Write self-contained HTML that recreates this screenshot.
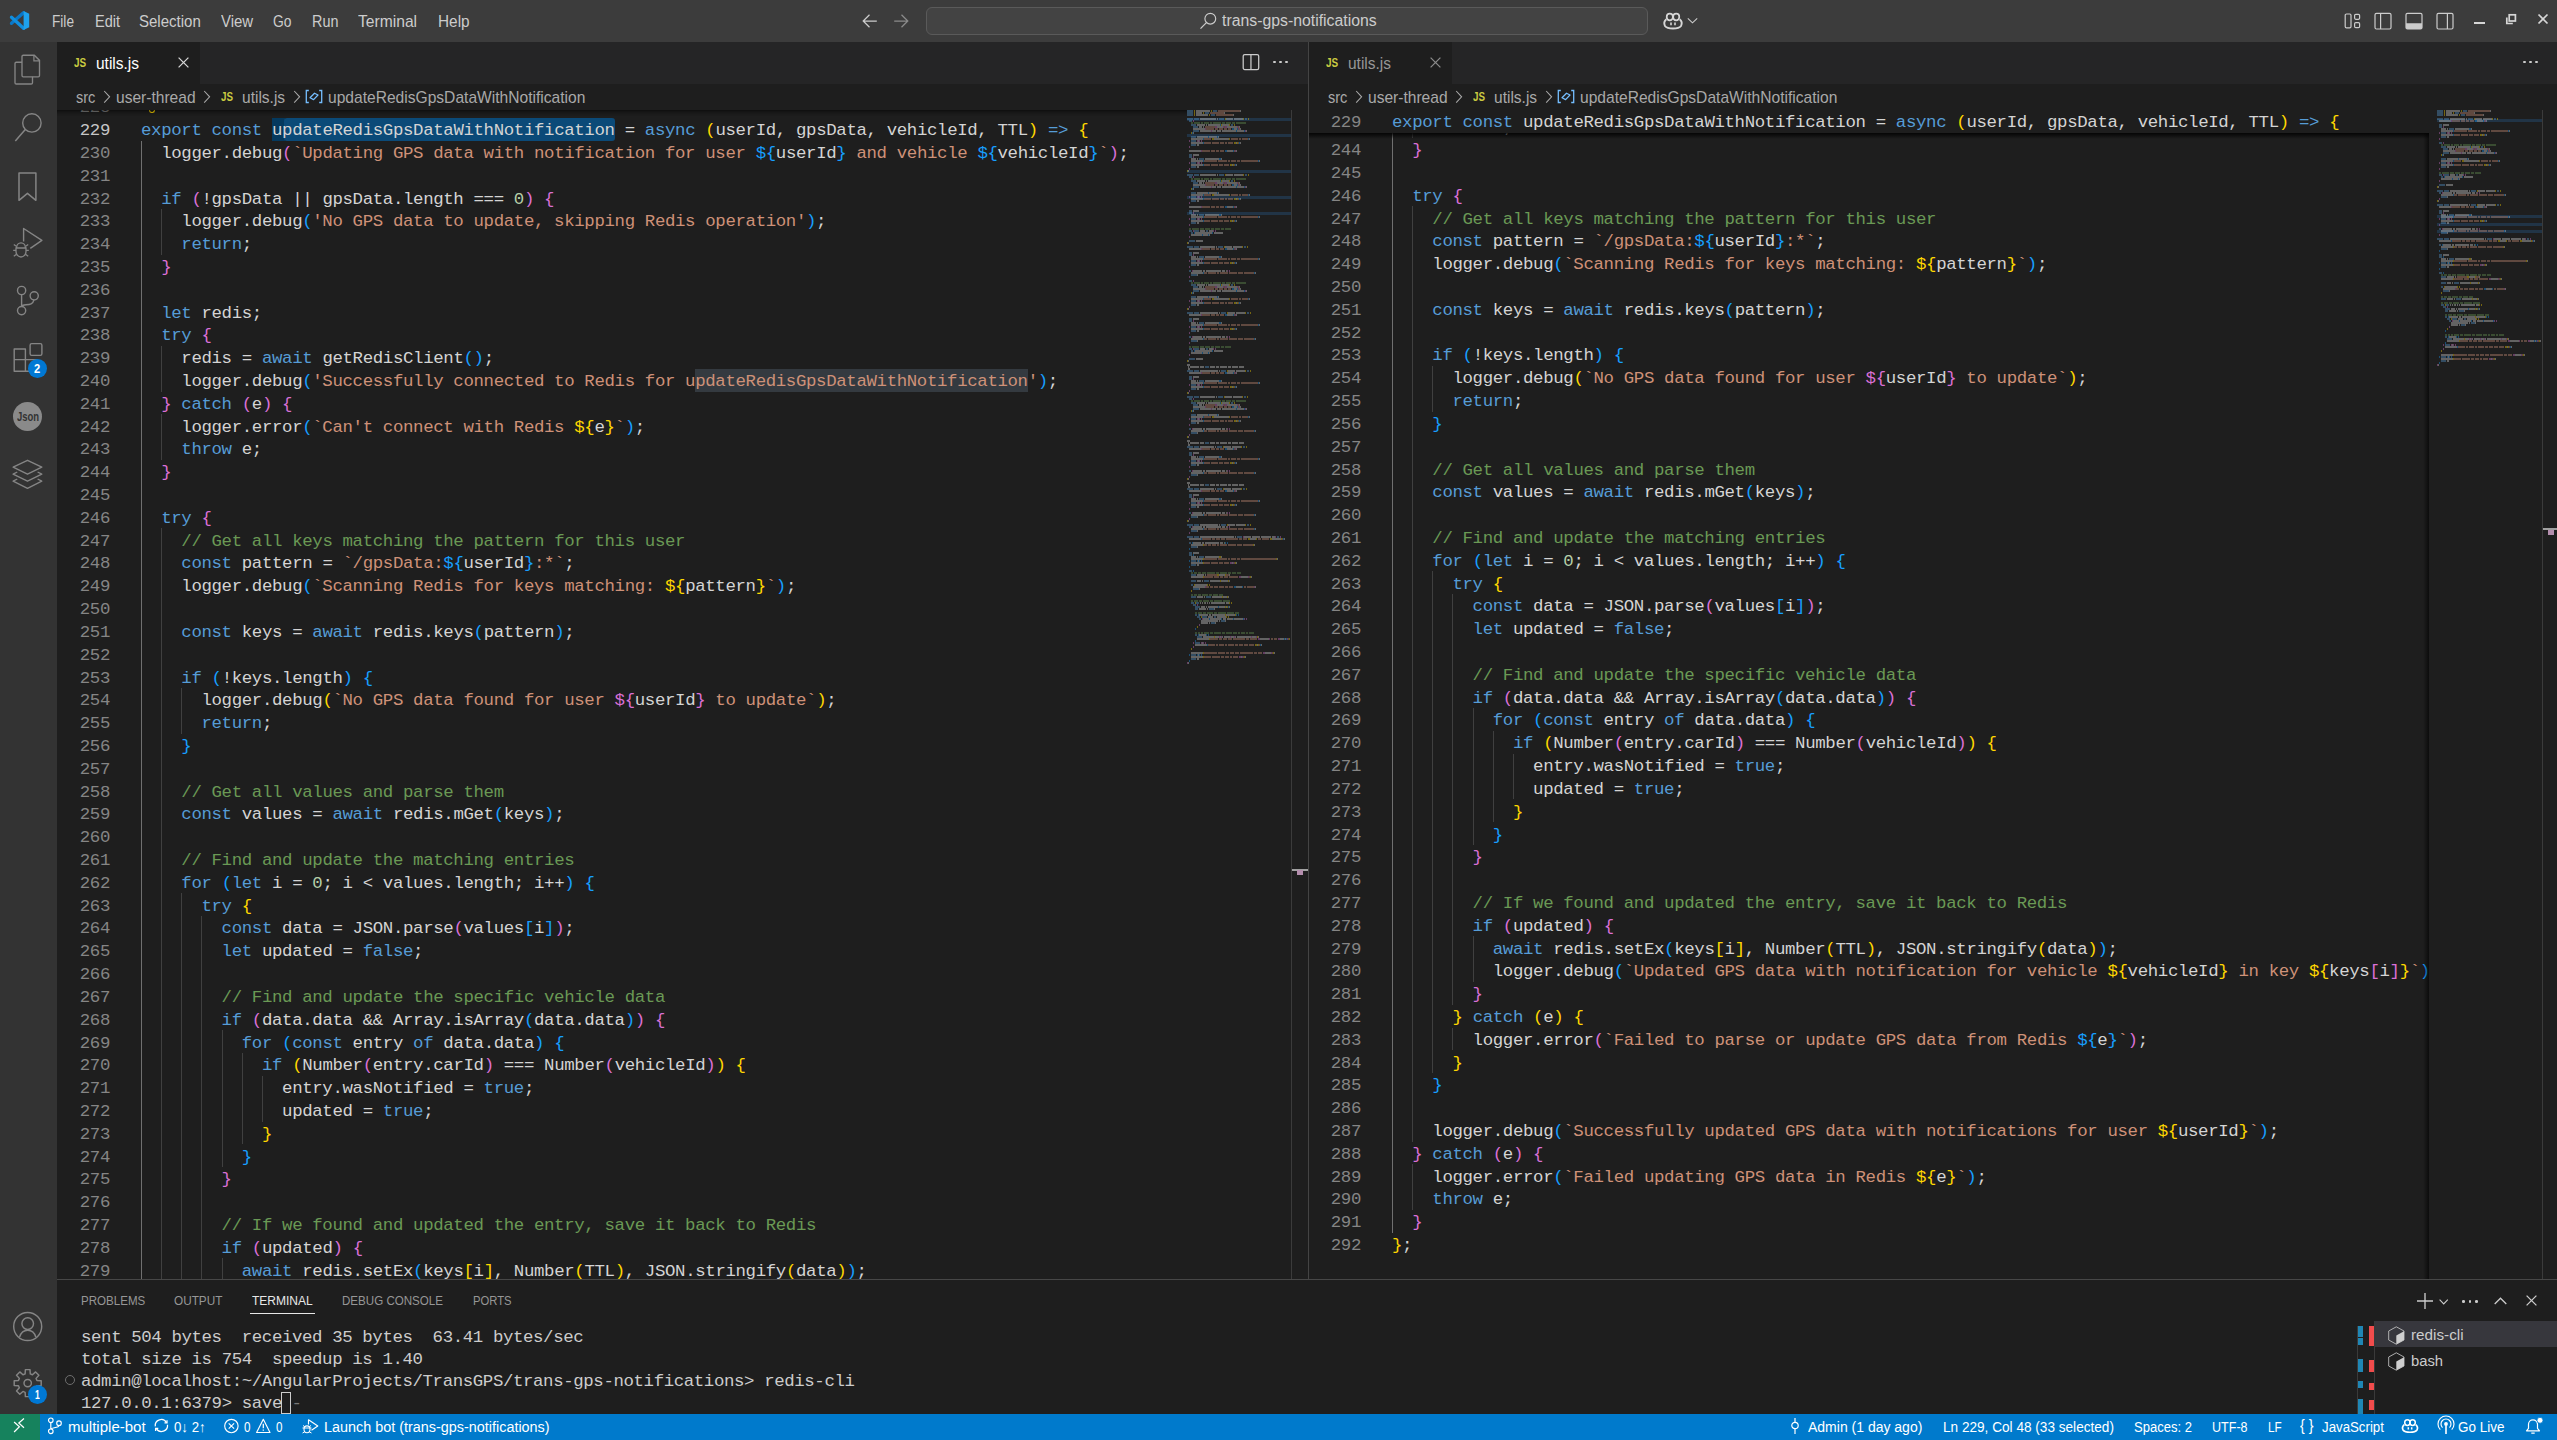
<!DOCTYPE html><html><head><meta charset="utf-8"><style>
*{margin:0;padding:0;box-sizing:border-box}
html,body{width:2557px;height:1440px;overflow:hidden;background:#1e1e1e}
body{position:relative;font-family:"Liberation Sans", sans-serif;}
.a{position:absolute}
.ln{position:absolute;height:22.81px;line-height:22.81px;white-space:pre;font-family:"Liberation Mono", monospace;font-size:17.4px;letter-spacing:-0.360px}
.num{position:absolute;height:22.81px;line-height:22.81px;font-family:"Liberation Mono", monospace;font-size:17.4px;letter-spacing:-0.360px;text-align:right;color:#858585;width:60px}
.ui{font-family:"Liberation Sans", sans-serif;white-space:pre;position:absolute}
.g{position:absolute;width:1px;background:#404040}
.tm{position:absolute;height:22px;line-height:22px;white-space:pre;font-family:"Liberation Mono", monospace;font-size:17.4px;letter-spacing:-0.390px;color:#cccccc}
svg{position:absolute;overflow:visible}
</style></head><body>
<div class="a" style="left:0;top:0;width:2557px;height:42px;background:#3c3c3c"></div>
<svg style="left:0px;top:0px" width="42" height="42" viewBox="0 0 42 42"><path d="M23.5 12.8 L11.5 23.3" stroke="#0a78c8" stroke-width="3.3" stroke-linecap="round"/><path d="M23.5 28.3 L11.5 17.2" stroke="#108fe0" stroke-width="3.3" stroke-linecap="round"/><path d="M23.6 11 L29.2 13.7 V27.3 L23.6 30 Z" fill="#1ea2ee"/></svg>
<div class="ui" style="left:51.60px;top:9.35px;font-size:17.15px;line-height:24px;color:#cccccc;transform:scaleX(0.7962);transform-origin:0 0">File</div>
<div class="ui" style="left:94.75px;top:9.35px;font-size:17.15px;line-height:24px;color:#cccccc;transform:scaleX(0.8477);transform-origin:0 0">Edit</div>
<div class="ui" style="left:139.30px;top:9.35px;font-size:17.15px;line-height:24px;color:#cccccc;transform:scaleX(0.8759);transform-origin:0 0">Selection</div>
<div class="ui" style="left:221.10px;top:9.35px;font-size:17.15px;line-height:24px;color:#cccccc;transform:scaleX(0.8724);transform-origin:0 0">View</div>
<div class="ui" style="left:272.80px;top:9.35px;font-size:17.15px;line-height:24px;color:#cccccc;transform:scaleX(0.8086);transform-origin:0 0">Go</div>
<div class="ui" style="left:311.90px;top:9.35px;font-size:17.15px;line-height:24px;color:#cccccc;transform:scaleX(0.8393);transform-origin:0 0">Run</div>
<div class="ui" style="left:358.40px;top:9.35px;font-size:17.15px;line-height:24px;color:#cccccc;transform:scaleX(0.9118);transform-origin:0 0">Terminal</div>
<div class="ui" style="left:437.60px;top:9.35px;font-size:17.15px;line-height:24px;color:#cccccc;transform:scaleX(0.8957);transform-origin:0 0">Help</div>
<svg style="left:861px;top:13px" width="18" height="16" viewBox="0 0 18 16"><path d="M8.5 1.8 L2.2 8 L8.5 14.2 M2.2 8 H15.8" stroke="#cccccc" stroke-width="1.25" fill="none"/></svg>
<svg style="left:892px;top:13px" width="18" height="16" viewBox="0 0 18 16"><path d="M9.5 1.8 L15.8 8 L9.5 14.2 M15.8 8 H2.2" stroke="#8b8b8b" stroke-width="1.25" fill="none"/></svg>
<div class="a" style="left:926px;top:7px;width:722px;height:28px;border-radius:6px;background:#434343;border:1px solid #5a5a5a"></div>
<svg style="left:1199px;top:11px" width="18" height="20" viewBox="0 0 18 20"><circle cx="11.3" cy="7.7" r="5.4" stroke="#cccccc" stroke-width="1.15" fill="none"/><path d="M7.4 11.6 L1.5 17.6" stroke="#cccccc" stroke-width="1.25"/></svg>
<div class="ui" style="left:1222.20px;top:10.20px;font-size:15.84px;line-height:22px;color:#cccccc;transform:scaleX(0.9989);transform-origin:0 0">trans-gps-notifications</div>
<svg style="left:1662px;top:11px" width="22" height="20" viewBox="0 0 22 20"><path d="M4.3 8.3 C2.3 10 2 13 3 15 C5.5 18.3 16.5 18.3 19 15 C20 13 19.7 10 17.7 8.3" stroke="#d6d6d6" stroke-width="1.9" fill="none"/><ellipse cx="7.8" cy="6" rx="3.1" ry="3.3" stroke="#d6d6d6" stroke-width="1.7" fill="none"/><ellipse cx="14.2" cy="6" rx="3.1" ry="3.3" stroke="#d6d6d6" stroke-width="1.7" fill="none"/><path d="M9 11.5 V14.3 M13 11.5 V14.3" stroke="#d6d6d6" stroke-width="1.6"/></svg>
<svg style="left:1687px;top:17px" width="12" height="8" viewBox="0 0 12 8"><path d="M0.8 1.3 L5.5 5.8 L10.2 1.3" stroke="#cccccc" stroke-width="1.1" fill="none"/></svg>
<svg style="left:2344px;top:13px" width="18" height="16" viewBox="0 0 18 16"><rect x="1.2" y="1" width="5.8" height="13.8" rx="1.3" stroke="#cccccc" stroke-width="1.2" fill="none"/><rect x="10.6" y="1.3" width="5" height="5" rx="1.2" stroke="#cccccc" stroke-width="1.2" fill="none"/><rect x="10.6" y="9.6" width="5" height="5" rx="1.2" stroke="#cccccc" stroke-width="1.2" fill="none"/></svg>
<svg style="left:2374px;top:12px" width="18" height="18" viewBox="0 0 18 18"><rect x="1" y="1.3" width="16" height="15.7" rx="1.5" stroke="#cccccc" stroke-width="1.2" fill="none"/><path d="M6.6 1.3 V17" stroke="#cccccc" stroke-width="1.2"/></svg>
<svg style="left:2405px;top:12px" width="18" height="18" viewBox="0 0 18 18"><rect x="1" y="1.3" width="16" height="15.7" rx="1.5" stroke="#cccccc" stroke-width="1.2" fill="none"/><path d="M1 11.2 H17 V15.5 A1.5 1.5 0 0 1 15.5 17 H2.5 A1.5 1.5 0 0 1 1 15.5 Z" fill="#cccccc"/></svg>
<svg style="left:2436px;top:12px" width="18" height="18" viewBox="0 0 18 18"><rect x="1" y="1.3" width="16" height="15.7" rx="1.5" stroke="#cccccc" stroke-width="1.2" fill="none"/><path d="M11.4 1.3 V17" stroke="#cccccc" stroke-width="1.2"/></svg>
<div class="a" style="left:2474px;top:22px;width:10.5px;height:1.8px;background:#d6d6d6"></div>
<svg style="left:2505px;top:13px" width="12" height="12" viewBox="0 0 12 12"><rect x="4.2" y="1.8" width="6.2" height="6.2" stroke="#d6d6d6" stroke-width="1.7" fill="none"/><path d="M1.8 4.5 V10.5 H7.8" stroke="#d6d6d6" stroke-width="1.7" fill="none"/></svg>
<svg style="left:2537px;top:13px" width="12" height="12" viewBox="0 0 12 12"><path d="M1.5 1.5 L10.5 10.5 M10.5 1.5 L1.5 10.5" stroke="#d6d6d6" stroke-width="1.7"/></svg>
<div class="a" style="left:0;top:42px;width:57px;height:1372px;background:#333333"></div>
<svg style="left:0px;top:42px" width="57" height="57" viewBox="0 0 57 57"><path d="M23.3 13.2 H34.3 L39.5 18.4 V33.5 A1.3 1.3 0 0 1 38.2 34.8 H23.3 A1.3 1.3 0 0 1 22 33.5 V14.5 A1.3 1.3 0 0 1 23.3 13.2 Z" stroke="#858585" stroke-width="1.35" fill="none"/><path d="M33.9 13.4 V18.8 H39.4" stroke="#858585" stroke-width="1.2" fill="none"/><path d="M22 20.2 H16.3 A1.3 1.3 0 0 0 15 21.5 V40.7 A1.3 1.3 0 0 0 16.3 42 H31.2 A1.3 1.3 0 0 0 32.5 40.7 V34.8" stroke="#858585" stroke-width="1.35" fill="none"/></svg>
<svg style="left:0px;top:100px" width="57" height="57" viewBox="0 0 57 57"><circle cx="31.9" cy="22.9" r="9.2" stroke="#858585" stroke-width="1.4" fill="none"/><path d="M25.3 29.6 L15.3 41" stroke="#858585" stroke-width="1.5"/></svg>
<svg style="left:0px;top:160px" width="57" height="57" viewBox="0 0 57 57"><path d="M19 13 H35.9 V40.3 L27.45 33.3 L19 40.3 Z" stroke="#858585" stroke-width="1.5" fill="none" stroke-linejoin="round"/></svg>
<svg style="left:0px;top:212px" width="57" height="57" viewBox="0 0 57 57"><path d="M23.6 29.5 V16.5 L41.9 28.3 L30.3 36.3" stroke="#858585" stroke-width="1.4" fill="none" stroke-linejoin="round"/><path d="M16.6 35.5 A4.4 4.6 0 0 1 25.4 35.5 M16 36 H26 V39.5 A5 5.5 0 0 1 16 39.5 Z" stroke="#858585" stroke-width="1.35" fill="none"/><path d="M13.8 32.5 L16.3 34.3 M28.2 32.5 L25.7 34.3 M13.2 38.3 H16 M28.8 38.3 H26 M13.8 44.2 L16.5 42.3 M28.2 44.2 L25.5 42.3" stroke="#858585" stroke-width="1.3" fill="none"/></svg>
<svg style="left:0px;top:270px" width="57" height="57" viewBox="0 0 57 57"><circle cx="21.6" cy="20.5" r="4.1" stroke="#858585" stroke-width="1.4" fill="none"/><circle cx="21.6" cy="40.6" r="4.1" stroke="#858585" stroke-width="1.4" fill="none"/><circle cx="34.2" cy="25.8" r="4.1" stroke="#858585" stroke-width="1.4" fill="none"/><path d="M21.6 24.6 V36.5 M34 29.9 C33 34 30 34.5 26 34.8 C23.5 35 21.8 35.5 21.6 36.5" stroke="#858585" stroke-width="1.4" fill="none"/></svg>
<svg style="left:0px;top:330px" width="57" height="57" viewBox="0 0 57 57"><path d="M14.2 19 H25.4 V41.2 H14.2 Z M14.2 29.6 H36.6 V41.2 H25.4" stroke="#858585" stroke-width="1.4" fill="none" stroke-linejoin="round"/><rect x="30.1" y="13.6" width="11.8" height="11.8" rx="1.6" stroke="#858585" stroke-width="1.4" fill="none"/></svg>
<div class="a" style="left:28.1px;top:359px;width:18.8px;height:18.8px;border-radius:9.4px;background:#0078d4"></div>
<div class="ui" style="left:34.40px;top:359.86px;font-size:12.50px;line-height:18px;color:#ffffff;font-weight:bold;transform:scaleX(0.8921);transform-origin:0 0">2</div>
<div class="a" style="left:12.75px;top:401.65px;width:29.5px;height:29.5px;border-radius:14.75px;background:#8a8a8a"></div>
<div class="ui" style="left:16.60px;top:407.06px;font-size:13.37px;line-height:19px;color:#333333;font-weight:bold;transform:scaleX(0.7113);transform-origin:0 0">Json</div>
<svg style="left:0px;top:440px" width="57" height="57" viewBox="0 0 57 57"><path d="M27.5 20.3 L41.8 27.2 L27.5 34.2 L13.1 27.2 Z" stroke="#858585" stroke-width="1.35" fill="none" stroke-linejoin="round"/><path d="M17.3 32 L13.1 34.2 L27.5 41.2 L41.8 34.2 L37.6 32 M17.3 39 L13.1 41.2 L27.5 48.4 L41.8 41.2 L37.6 39" stroke="#858585" stroke-width="1.35" fill="none" stroke-linejoin="round"/></svg>
<svg style="left:0px;top:1300px" width="57" height="57" viewBox="0 0 57 57"><circle cx="27.7" cy="26.5" r="14" stroke="#858585" stroke-width="1.45" fill="none"/><circle cx="27.7" cy="23.6" r="5.8" stroke="#858585" stroke-width="1.45" fill="none"/><path d="M19.6 37 C21 32.5 24 30.3 27.7 30.3 C31.4 30.3 34.4 32.5 35.8 37" stroke="#858585" stroke-width="1.45" fill="none"/></svg>
<svg style="left:0px;top:1357px" width="57" height="57" viewBox="0 0 57 57"><polygon points="25.38,12.60 30.02,12.60 30.26,16.85 32.43,17.75 35.61,14.91 38.89,18.19 36.05,21.37 36.95,23.54 41.20,23.78 41.20,28.42 36.95,28.66 36.05,30.83 38.89,34.01 35.61,37.29 32.43,34.45 30.26,35.35 30.02,39.60 25.38,39.60 25.14,35.35 22.97,34.45 19.79,37.29 16.51,34.01 19.35,30.83 18.45,28.66 14.20,28.42 14.20,23.78 18.45,23.54 19.35,21.37 16.51,18.19 19.79,14.91 22.97,17.75 25.14,16.85" stroke="#858585" stroke-width="1.45" fill="none" stroke-linejoin="round"/><circle cx="27.7" cy="26.1" r="3.7" stroke="#858585" stroke-width="1.45" fill="none"/></svg>
<div class="a" style="left:28.1px;top:1385.1px;width:19px;height:19px;border-radius:9.5px;background:#0078d4"></div>
<div class="ui" style="left:34.90px;top:1385.86px;font-size:12.50px;line-height:18px;color:#ffffff;font-weight:bold;transform:scaleX(0.6906);transform-origin:0 0">1</div>
<div class="a" style="left:57px;top:42px;width:1251px;height:42px;background:#252526"></div>
<div class="a" style="left:57px;top:42px;width:143px;height:42px;background:#1e1e1e"></div>
<div class="ui" style="left:73.90px;top:52.91px;font-size:13.37px;line-height:19px;color:#cbcb41;font-weight:bold;transform:scaleX(0.7460);transform-origin:0 0">JS</div>
<div class="ui" style="left:95.70px;top:51.70px;font-size:16.13px;line-height:23px;color:#ffffff;transform:scaleX(0.9616);transform-origin:0 0">utils.js</div>
<svg style="left:177.5px;top:57px" width="11" height="11" viewBox="0 0 11 11"><path d="M0.6 0.6 L10.4 10.4 M10.4 0.6 L0.6 10.4" stroke="#d8d8d8" stroke-width="1.25"/></svg>
<div class="a" style="left:57px;top:84px;width:1251px;height:26px;background:#1e1e1e"></div>
<div class="ui" style="left:75.75px;top:86.85px;font-size:15.99px;line-height:22px;color:#a9a9a9;transform:scaleX(0.9079);transform-origin:0 0">src</div>
<div class="ui" style="left:115.50px;top:86.85px;font-size:15.99px;line-height:22px;color:#a9a9a9;transform:scaleX(0.9735);transform-origin:0 0">user-thread</div>
<div class="ui" style="left:220.50px;top:87.86px;font-size:12.79px;line-height:18px;color:#cbcb41;font-weight:bold;transform:scaleX(0.7671);transform-origin:0 0">JS</div>
<div class="ui" style="left:242.00px;top:86.85px;font-size:15.99px;line-height:22px;color:#a9a9a9;transform:scaleX(0.9704);transform-origin:0 0">utils.js</div>
<div class="ui" style="left:327.60px;top:86.85px;font-size:15.99px;line-height:22px;color:#a9a9a9;transform:scaleX(0.9752);transform-origin:0 0">updateRedisGpsDataWithNotification</div>
<svg style="left:102.5px;top:90px" width="8" height="14" viewBox="0 0 8 14"><path d="M1.2 1 L6.6 6.8 L1.2 12.6" stroke="#a9a9a9" stroke-width="1.05" fill="none"/></svg>
<svg style="left:202.5px;top:90px" width="8" height="14" viewBox="0 0 8 14"><path d="M1.2 1 L6.6 6.8 L1.2 12.6" stroke="#a9a9a9" stroke-width="1.05" fill="none"/></svg>
<svg style="left:292.5px;top:90px" width="8" height="14" viewBox="0 0 8 14"><path d="M1.2 1 L6.6 6.8 L1.2 12.6" stroke="#a9a9a9" stroke-width="1.05" fill="none"/></svg>
<svg style="left:305px;top:89px" width="18" height="15" viewBox="0 0 18 15"><path d="M3.8 1.5 H1.3 V13.5 H3.8 M14.2 1.5 H16.7 V13.5 H14.2" stroke="#75beff" stroke-width="1.3" fill="none"/><path d="M5 8.8 L9.5 4.2 L13 6 L8.6 10.6 Z M5 8.8 L8.6 10.6" stroke="#75beff" stroke-width="1.25" fill="none" stroke-linejoin="round"/></svg>
<div class="a" style="left:1309px;top:42px;width:1248px;height:42px;background:#252526"></div>
<div class="a" style="left:1309px;top:42px;width:143px;height:42px;background:#1e1e1e"></div>
<div class="ui" style="left:1325.90px;top:52.91px;font-size:13.37px;line-height:19px;color:#cbcb41;font-weight:bold;transform:scaleX(0.7460);transform-origin:0 0">JS</div>
<div class="ui" style="left:1347.70px;top:51.70px;font-size:16.13px;line-height:23px;color:#969696;transform:scaleX(0.9616);transform-origin:0 0">utils.js</div>
<svg style="left:1429.5px;top:57px" width="11" height="11" viewBox="0 0 11 11"><path d="M0.6 0.6 L10.4 10.4 M10.4 0.6 L0.6 10.4" stroke="#8c8c8c" stroke-width="1.25"/></svg>
<div class="a" style="left:1309px;top:84px;width:1248px;height:26px;background:#1e1e1e"></div>
<div class="ui" style="left:1327.75px;top:86.85px;font-size:15.99px;line-height:22px;color:#a9a9a9;transform:scaleX(0.9079);transform-origin:0 0">src</div>
<div class="ui" style="left:1367.50px;top:86.85px;font-size:15.99px;line-height:22px;color:#a9a9a9;transform:scaleX(0.9735);transform-origin:0 0">user-thread</div>
<div class="ui" style="left:1472.50px;top:87.86px;font-size:12.79px;line-height:18px;color:#cbcb41;font-weight:bold;transform:scaleX(0.7671);transform-origin:0 0">JS</div>
<div class="ui" style="left:1494.00px;top:86.85px;font-size:15.99px;line-height:22px;color:#a9a9a9;transform:scaleX(0.9704);transform-origin:0 0">utils.js</div>
<div class="ui" style="left:1579.60px;top:86.85px;font-size:15.99px;line-height:22px;color:#a9a9a9;transform:scaleX(0.9752);transform-origin:0 0">updateRedisGpsDataWithNotification</div>
<svg style="left:1354.5px;top:90px" width="8" height="14" viewBox="0 0 8 14"><path d="M1.2 1 L6.6 6.8 L1.2 12.6" stroke="#a9a9a9" stroke-width="1.05" fill="none"/></svg>
<svg style="left:1454.5px;top:90px" width="8" height="14" viewBox="0 0 8 14"><path d="M1.2 1 L6.6 6.8 L1.2 12.6" stroke="#a9a9a9" stroke-width="1.05" fill="none"/></svg>
<svg style="left:1544.5px;top:90px" width="8" height="14" viewBox="0 0 8 14"><path d="M1.2 1 L6.6 6.8 L1.2 12.6" stroke="#a9a9a9" stroke-width="1.05" fill="none"/></svg>
<svg style="left:1557px;top:89px" width="18" height="15" viewBox="0 0 18 15"><path d="M3.8 1.5 H1.3 V13.5 H3.8 M14.2 1.5 H16.7 V13.5 H14.2" stroke="#75beff" stroke-width="1.3" fill="none"/><path d="M5 8.8 L9.5 4.2 L13 6 L8.6 10.6 Z M5 8.8 L8.6 10.6" stroke="#75beff" stroke-width="1.25" fill="none" stroke-linejoin="round"/></svg>
<svg style="left:1242px;top:53px" width="18" height="18" viewBox="0 0 18 18"><rect x="1.2" y="1.5" width="15.5" height="15" rx="1.6" stroke="#cccccc" stroke-width="1.25" fill="none"/><path d="M8.95 1.5 V16.5" stroke="#cccccc" stroke-width="1.25"/></svg>
<div class="a" style="left:1273.2px;top:60.8px;width:2.6px;height:2.6px;border-radius:1.3px;background:#cccccc"></div>
<div class="a" style="left:1279.2px;top:60.8px;width:2.6px;height:2.6px;border-radius:1.3px;background:#cccccc"></div>
<div class="a" style="left:1285.2px;top:60.8px;width:2.6px;height:2.6px;border-radius:1.3px;background:#cccccc"></div>
<div class="a" style="left:2523.2px;top:60.8px;width:2.6px;height:2.6px;border-radius:1.3px;background:#cccccc"></div>
<div class="a" style="left:2529.2px;top:60.8px;width:2.6px;height:2.6px;border-radius:1.3px;background:#cccccc"></div>
<div class="a" style="left:2535.2px;top:60.8px;width:2.6px;height:2.6px;border-radius:1.3px;background:#cccccc"></div>
<div class="a" style="left:1308px;top:42px;width:1px;height:1237px;background:#444444"></div>
<div class="a" style="left:57px;top:110px;width:1234px;height:1169px;overflow:hidden">
<div class="num" style="left:-7px;top:-12.71px;color:#858585">228</div>
<div class="a" style="left:215.04px;top:7.90px;width:13.08px;height:22.81px;background:#04395e"></div>
<div class="a" style="left:226.52px;top:7.90px;width:331.24px;height:22.81px;background:#0b4a78;border-radius:3px"></div>
<div class="num" style="left:-7px;top:10.10px;color:#c6c6c6">229</div>
<div class="ln" style="left:84px;top:10.10px"><span style="color:#569cd6">export</span><span style="color:#d4d4d4"> </span><span style="color:#569cd6">const</span><span style="color:#d4d4d4"> updateRedisGpsDataWithNotification = </span><span style="color:#569cd6">async</span><span style="color:#d4d4d4"> </span><span style="color:#ffd700">(</span><span style="color:#d4d4d4">userId, gpsData, vehicleId, TTL</span><span style="color:#ffd700">)</span><span style="color:#d4d4d4"> </span><span style="color:#569cd6">=&gt;</span><span style="color:#d4d4d4"> </span><span style="color:#ffd700">{</span></div>
<div class="num" style="left:-7px;top:32.91px;color:#858585">230</div>
<div class="ln" style="left:84px;top:32.91px"><span style="color:#d4d4d4">  logger.debug</span><span style="color:#da70d6">(</span><span style="color:#ce9178">`Updating GPS data with notification for user </span><span style="color:#179fff">${</span><span style="color:#d4d4d4">userId</span><span style="color:#179fff">}</span><span style="color:#ce9178"> and vehicle </span><span style="color:#179fff">${</span><span style="color:#d4d4d4">vehicleId</span><span style="color:#179fff">}</span><span style="color:#ce9178">`</span><span style="color:#da70d6">)</span><span style="color:#d4d4d4">;</span></div>
<div class="num" style="left:-7px;top:55.72px;color:#858585">231</div>
<div class="ln" style="left:84px;top:55.72px"></div>
<div class="num" style="left:-7px;top:78.53px;color:#858585">232</div>
<div class="ln" style="left:84px;top:78.53px"><span style="color:#d4d4d4">  </span><span style="color:#569cd6">if</span><span style="color:#d4d4d4"> </span><span style="color:#da70d6">(</span><span style="color:#d4d4d4">!gpsData || gpsData.length === </span><span style="color:#b5cea8">0</span><span style="color:#da70d6">)</span><span style="color:#d4d4d4"> </span><span style="color:#da70d6">{</span></div>
<div class="num" style="left:-7px;top:101.34px;color:#858585">233</div>
<div class="ln" style="left:84px;top:101.34px"><span style="color:#d4d4d4">    logger.debug</span><span style="color:#179fff">(</span><span style="color:#ce9178">'No GPS data to update, skipping Redis operation'</span><span style="color:#179fff">)</span><span style="color:#d4d4d4">;</span></div>
<div class="num" style="left:-7px;top:124.15px;color:#858585">234</div>
<div class="ln" style="left:84px;top:124.15px"><span style="color:#d4d4d4">    </span><span style="color:#569cd6">return</span><span style="color:#d4d4d4">;</span></div>
<div class="num" style="left:-7px;top:146.96px;color:#858585">235</div>
<div class="ln" style="left:84px;top:146.96px"><span style="color:#d4d4d4">  </span><span style="color:#da70d6">}</span></div>
<div class="num" style="left:-7px;top:169.77px;color:#858585">236</div>
<div class="ln" style="left:84px;top:169.77px"></div>
<div class="num" style="left:-7px;top:192.58px;color:#858585">237</div>
<div class="ln" style="left:84px;top:192.58px"><span style="color:#d4d4d4">  </span><span style="color:#569cd6">let</span><span style="color:#d4d4d4"> redis;</span></div>
<div class="num" style="left:-7px;top:215.39px;color:#858585">238</div>
<div class="ln" style="left:84px;top:215.39px"><span style="color:#d4d4d4">  </span><span style="color:#569cd6">try</span><span style="color:#d4d4d4"> </span><span style="color:#da70d6">{</span></div>
<div class="num" style="left:-7px;top:238.20px;color:#858585">239</div>
<div class="ln" style="left:84px;top:238.20px"><span style="color:#d4d4d4">    redis = </span><span style="color:#569cd6">await</span><span style="color:#d4d4d4"> getRedisClient</span><span style="color:#179fff">()</span><span style="color:#d4d4d4">;</span></div>
<div class="a" style="left:638.40px;top:258.81px;width:332.64px;height:22.81px;background:#343a40"></div>
<div class="num" style="left:-7px;top:261.01px;color:#858585">240</div>
<div class="ln" style="left:84px;top:261.01px"><span style="color:#d4d4d4">    logger.debug</span><span style="color:#179fff">(</span><span style="color:#ce9178">'Successfully connected to Redis for updateRedisGpsDataWithNotification'</span><span style="color:#179fff">)</span><span style="color:#d4d4d4">;</span></div>
<div class="num" style="left:-7px;top:283.82px;color:#858585">241</div>
<div class="ln" style="left:84px;top:283.82px"><span style="color:#d4d4d4">  </span><span style="color:#da70d6">}</span><span style="color:#d4d4d4"> </span><span style="color:#569cd6">catch</span><span style="color:#d4d4d4"> </span><span style="color:#da70d6">(</span><span style="color:#d4d4d4">e</span><span style="color:#da70d6">)</span><span style="color:#d4d4d4"> </span><span style="color:#da70d6">{</span></div>
<div class="num" style="left:-7px;top:306.63px;color:#858585">242</div>
<div class="ln" style="left:84px;top:306.63px"><span style="color:#d4d4d4">    logger.error</span><span style="color:#179fff">(</span><span style="color:#ce9178">`Can't connect with Redis </span><span style="color:#ffd700">${</span><span style="color:#d4d4d4">e</span><span style="color:#ffd700">}</span><span style="color:#ce9178">`</span><span style="color:#179fff">)</span><span style="color:#d4d4d4">;</span></div>
<div class="num" style="left:-7px;top:329.44px;color:#858585">243</div>
<div class="ln" style="left:84px;top:329.44px"><span style="color:#d4d4d4">    </span><span style="color:#569cd6">throw</span><span style="color:#d4d4d4"> e;</span></div>
<div class="num" style="left:-7px;top:352.25px;color:#858585">244</div>
<div class="ln" style="left:84px;top:352.25px"><span style="color:#d4d4d4">  </span><span style="color:#da70d6">}</span></div>
<div class="num" style="left:-7px;top:375.06px;color:#858585">245</div>
<div class="ln" style="left:84px;top:375.06px"></div>
<div class="num" style="left:-7px;top:397.87px;color:#858585">246</div>
<div class="ln" style="left:84px;top:397.87px"><span style="color:#d4d4d4">  </span><span style="color:#569cd6">try</span><span style="color:#d4d4d4"> </span><span style="color:#da70d6">{</span></div>
<div class="num" style="left:-7px;top:420.68px;color:#858585">247</div>
<div class="ln" style="left:84px;top:420.68px"><span style="color:#d4d4d4">    </span><span style="color:#6a9955">// Get all keys matching the pattern for this user</span></div>
<div class="num" style="left:-7px;top:443.49px;color:#858585">248</div>
<div class="ln" style="left:84px;top:443.49px"><span style="color:#d4d4d4">    </span><span style="color:#569cd6">const</span><span style="color:#d4d4d4"> pattern = </span><span style="color:#ce9178">`/gpsData:</span><span style="color:#179fff">${</span><span style="color:#d4d4d4">userId</span><span style="color:#179fff">}</span><span style="color:#ce9178">:*`</span><span style="color:#d4d4d4">;</span></div>
<div class="num" style="left:-7px;top:466.30px;color:#858585">249</div>
<div class="ln" style="left:84px;top:466.30px"><span style="color:#d4d4d4">    logger.debug</span><span style="color:#179fff">(</span><span style="color:#ce9178">`Scanning Redis for keys matching: </span><span style="color:#ffd700">${</span><span style="color:#d4d4d4">pattern</span><span style="color:#ffd700">}</span><span style="color:#ce9178">`</span><span style="color:#179fff">)</span><span style="color:#d4d4d4">;</span></div>
<div class="num" style="left:-7px;top:489.11px;color:#858585">250</div>
<div class="ln" style="left:84px;top:489.11px"></div>
<div class="num" style="left:-7px;top:511.92px;color:#858585">251</div>
<div class="ln" style="left:84px;top:511.92px"><span style="color:#d4d4d4">    </span><span style="color:#569cd6">const</span><span style="color:#d4d4d4"> keys = </span><span style="color:#569cd6">await</span><span style="color:#d4d4d4"> redis.keys</span><span style="color:#179fff">(</span><span style="color:#d4d4d4">pattern</span><span style="color:#179fff">)</span><span style="color:#d4d4d4">;</span></div>
<div class="num" style="left:-7px;top:534.73px;color:#858585">252</div>
<div class="ln" style="left:84px;top:534.73px"></div>
<div class="num" style="left:-7px;top:557.54px;color:#858585">253</div>
<div class="ln" style="left:84px;top:557.54px"><span style="color:#d4d4d4">    </span><span style="color:#569cd6">if</span><span style="color:#d4d4d4"> </span><span style="color:#179fff">(</span><span style="color:#d4d4d4">!keys.length</span><span style="color:#179fff">)</span><span style="color:#d4d4d4"> </span><span style="color:#179fff">{</span></div>
<div class="num" style="left:-7px;top:580.35px;color:#858585">254</div>
<div class="ln" style="left:84px;top:580.35px"><span style="color:#d4d4d4">      logger.debug</span><span style="color:#ffd700">(</span><span style="color:#ce9178">`No GPS data found for user </span><span style="color:#da70d6">${</span><span style="color:#d4d4d4">userId</span><span style="color:#da70d6">}</span><span style="color:#ce9178"> to update`</span><span style="color:#ffd700">)</span><span style="color:#d4d4d4">;</span></div>
<div class="num" style="left:-7px;top:603.16px;color:#858585">255</div>
<div class="ln" style="left:84px;top:603.16px"><span style="color:#d4d4d4">      </span><span style="color:#569cd6">return</span><span style="color:#d4d4d4">;</span></div>
<div class="num" style="left:-7px;top:625.97px;color:#858585">256</div>
<div class="ln" style="left:84px;top:625.97px"><span style="color:#d4d4d4">    </span><span style="color:#179fff">}</span></div>
<div class="num" style="left:-7px;top:648.78px;color:#858585">257</div>
<div class="ln" style="left:84px;top:648.78px"></div>
<div class="num" style="left:-7px;top:671.59px;color:#858585">258</div>
<div class="ln" style="left:84px;top:671.59px"><span style="color:#d4d4d4">    </span><span style="color:#6a9955">// Get all values and parse them</span></div>
<div class="num" style="left:-7px;top:694.40px;color:#858585">259</div>
<div class="ln" style="left:84px;top:694.40px"><span style="color:#d4d4d4">    </span><span style="color:#569cd6">const</span><span style="color:#d4d4d4"> values = </span><span style="color:#569cd6">await</span><span style="color:#d4d4d4"> redis.mGet</span><span style="color:#179fff">(</span><span style="color:#d4d4d4">keys</span><span style="color:#179fff">)</span><span style="color:#d4d4d4">;</span></div>
<div class="num" style="left:-7px;top:717.21px;color:#858585">260</div>
<div class="ln" style="left:84px;top:717.21px"></div>
<div class="num" style="left:-7px;top:740.02px;color:#858585">261</div>
<div class="ln" style="left:84px;top:740.02px"><span style="color:#d4d4d4">    </span><span style="color:#6a9955">// Find and update the matching entries</span></div>
<div class="num" style="left:-7px;top:762.83px;color:#858585">262</div>
<div class="ln" style="left:84px;top:762.83px"><span style="color:#d4d4d4">    </span><span style="color:#569cd6">for</span><span style="color:#d4d4d4"> </span><span style="color:#179fff">(</span><span style="color:#569cd6">let</span><span style="color:#d4d4d4"> i = </span><span style="color:#b5cea8">0</span><span style="color:#d4d4d4">; i &lt; values.length; i++</span><span style="color:#179fff">)</span><span style="color:#d4d4d4"> </span><span style="color:#179fff">{</span></div>
<div class="num" style="left:-7px;top:785.64px;color:#858585">263</div>
<div class="ln" style="left:84px;top:785.64px"><span style="color:#d4d4d4">      </span><span style="color:#569cd6">try</span><span style="color:#d4d4d4"> </span><span style="color:#ffd700">{</span></div>
<div class="num" style="left:-7px;top:808.45px;color:#858585">264</div>
<div class="ln" style="left:84px;top:808.45px"><span style="color:#d4d4d4">        </span><span style="color:#569cd6">const</span><span style="color:#d4d4d4"> data = JSON.parse</span><span style="color:#da70d6">(</span><span style="color:#d4d4d4">values</span><span style="color:#179fff">[</span><span style="color:#d4d4d4">i</span><span style="color:#179fff">]</span><span style="color:#da70d6">)</span><span style="color:#d4d4d4">;</span></div>
<div class="num" style="left:-7px;top:831.26px;color:#858585">265</div>
<div class="ln" style="left:84px;top:831.26px"><span style="color:#d4d4d4">        </span><span style="color:#569cd6">let</span><span style="color:#d4d4d4"> updated = </span><span style="color:#569cd6">false</span><span style="color:#d4d4d4">;</span></div>
<div class="num" style="left:-7px;top:854.07px;color:#858585">266</div>
<div class="ln" style="left:84px;top:854.07px"></div>
<div class="num" style="left:-7px;top:876.88px;color:#858585">267</div>
<div class="ln" style="left:84px;top:876.88px"><span style="color:#d4d4d4">        </span><span style="color:#6a9955">// Find and update the specific vehicle data</span></div>
<div class="num" style="left:-7px;top:899.69px;color:#858585">268</div>
<div class="ln" style="left:84px;top:899.69px"><span style="color:#d4d4d4">        </span><span style="color:#569cd6">if</span><span style="color:#d4d4d4"> </span><span style="color:#da70d6">(</span><span style="color:#d4d4d4">data.data &amp;&amp; Array.isArray</span><span style="color:#179fff">(</span><span style="color:#d4d4d4">data.data</span><span style="color:#179fff">)</span><span style="color:#da70d6">)</span><span style="color:#d4d4d4"> </span><span style="color:#da70d6">{</span></div>
<div class="num" style="left:-7px;top:922.50px;color:#858585">269</div>
<div class="ln" style="left:84px;top:922.50px"><span style="color:#d4d4d4">          </span><span style="color:#569cd6">for</span><span style="color:#d4d4d4"> </span><span style="color:#179fff">(</span><span style="color:#569cd6">const</span><span style="color:#d4d4d4"> entry </span><span style="color:#569cd6">of</span><span style="color:#d4d4d4"> data.data</span><span style="color:#179fff">)</span><span style="color:#d4d4d4"> </span><span style="color:#179fff">{</span></div>
<div class="num" style="left:-7px;top:945.31px;color:#858585">270</div>
<div class="ln" style="left:84px;top:945.31px"><span style="color:#d4d4d4">            </span><span style="color:#569cd6">if</span><span style="color:#d4d4d4"> </span><span style="color:#ffd700">(</span><span style="color:#d4d4d4">Number</span><span style="color:#da70d6">(</span><span style="color:#d4d4d4">entry.carId</span><span style="color:#da70d6">)</span><span style="color:#d4d4d4"> === Number</span><span style="color:#da70d6">(</span><span style="color:#d4d4d4">vehicleId</span><span style="color:#da70d6">)</span><span style="color:#ffd700">)</span><span style="color:#d4d4d4"> </span><span style="color:#ffd700">{</span></div>
<div class="num" style="left:-7px;top:968.12px;color:#858585">271</div>
<div class="ln" style="left:84px;top:968.12px"><span style="color:#d4d4d4">              entry.wasNotified = </span><span style="color:#569cd6">true</span><span style="color:#d4d4d4">;</span></div>
<div class="num" style="left:-7px;top:990.93px;color:#858585">272</div>
<div class="ln" style="left:84px;top:990.93px"><span style="color:#d4d4d4">              updated = </span><span style="color:#569cd6">true</span><span style="color:#d4d4d4">;</span></div>
<div class="num" style="left:-7px;top:1013.74px;color:#858585">273</div>
<div class="ln" style="left:84px;top:1013.74px"><span style="color:#d4d4d4">            </span><span style="color:#ffd700">}</span></div>
<div class="num" style="left:-7px;top:1036.55px;color:#858585">274</div>
<div class="ln" style="left:84px;top:1036.55px"><span style="color:#d4d4d4">          </span><span style="color:#179fff">}</span></div>
<div class="num" style="left:-7px;top:1059.36px;color:#858585">275</div>
<div class="ln" style="left:84px;top:1059.36px"><span style="color:#d4d4d4">        </span><span style="color:#da70d6">}</span></div>
<div class="num" style="left:-7px;top:1082.17px;color:#858585">276</div>
<div class="ln" style="left:84px;top:1082.17px"></div>
<div class="num" style="left:-7px;top:1104.98px;color:#858585">277</div>
<div class="ln" style="left:84px;top:1104.98px"><span style="color:#d4d4d4">        </span><span style="color:#6a9955">// If we found and updated the entry, save it back to Redis</span></div>
<div class="num" style="left:-7px;top:1127.79px;color:#858585">278</div>
<div class="ln" style="left:84px;top:1127.79px"><span style="color:#d4d4d4">        </span><span style="color:#569cd6">if</span><span style="color:#d4d4d4"> </span><span style="color:#da70d6">(</span><span style="color:#d4d4d4">updated</span><span style="color:#da70d6">)</span><span style="color:#d4d4d4"> </span><span style="color:#da70d6">{</span></div>
<div class="num" style="left:-7px;top:1150.60px;color:#858585">279</div>
<div class="ln" style="left:84px;top:1150.60px"><span style="color:#d4d4d4">          </span><span style="color:#569cd6">await</span><span style="color:#d4d4d4"> redis.setEx</span><span style="color:#179fff">(</span><span style="color:#d4d4d4">keys</span><span style="color:#ffd700">[</span><span style="color:#d4d4d4">i</span><span style="color:#ffd700">]</span><span style="color:#d4d4d4">, Number</span><span style="color:#ffd700">(</span><span style="color:#d4d4d4">TTL</span><span style="color:#ffd700">)</span><span style="color:#d4d4d4">, JSON.stringify</span><span style="color:#ffd700">(</span><span style="color:#d4d4d4">data</span><span style="color:#ffd700">)</span><span style="color:#179fff">)</span><span style="color:#d4d4d4">;</span></div>
<div class="g" style="left:84.00px;top:30.71px;height:1163.31px;background:#707070"></div>
<div class="g" style="left:104.16px;top:99.14px;height:45.62px;background:#404040"></div>
<div class="g" style="left:104.16px;top:236.00px;height:45.62px;background:#404040"></div>
<div class="g" style="left:104.16px;top:304.43px;height:45.62px;background:#404040"></div>
<div class="g" style="left:104.16px;top:418.48px;height:775.54px;background:#404040"></div>
<div class="g" style="left:124.32px;top:578.15px;height:45.62px;background:#404040"></div>
<div class="g" style="left:124.32px;top:783.44px;height:410.58px;background:#404040"></div>
<div class="g" style="left:144.48px;top:806.25px;height:387.77px;background:#404040"></div>
<div class="g" style="left:164.64px;top:920.30px;height:136.86px;background:#404040"></div>
<div class="g" style="left:164.64px;top:1148.40px;height:45.62px;background:#404040"></div>
<div class="g" style="left:184.80px;top:943.11px;height:91.24px;background:#404040"></div>
<div class="g" style="left:204.96px;top:965.92px;height:45.62px;background:#404040"></div>
</div>
<div class="a" style="left:148.5px;top:110px;width:6px;height:3px;border:1.6px solid #ffd700;border-top:none;border-radius:0 0 3px 3px"></div>
<div class="a" style="left:57px;top:110px;width:1130px;height:6px;box-shadow:#000000 0 6px 6px -6px inset"></div>
<div class="a" style="left:1309px;top:110px;width:1120px;height:1169px;overflow:hidden">
<div class="num" style="left:-8px;top:7.39px;color:#858585">243</div>
<div class="ln" style="left:83px;top:7.39px"><span style="color:#d4d4d4">    </span><span style="color:#569cd6">throw</span><span style="color:#d4d4d4"> e;</span></div>
<div class="num" style="left:-8px;top:30.20px;color:#858585">244</div>
<div class="ln" style="left:83px;top:30.20px"><span style="color:#d4d4d4">  </span><span style="color:#da70d6">}</span></div>
<div class="num" style="left:-8px;top:53.01px;color:#858585">245</div>
<div class="ln" style="left:83px;top:53.01px"></div>
<div class="num" style="left:-8px;top:75.82px;color:#858585">246</div>
<div class="ln" style="left:83px;top:75.82px"><span style="color:#d4d4d4">  </span><span style="color:#569cd6">try</span><span style="color:#d4d4d4"> </span><span style="color:#da70d6">{</span></div>
<div class="num" style="left:-8px;top:98.63px;color:#858585">247</div>
<div class="ln" style="left:83px;top:98.63px"><span style="color:#d4d4d4">    </span><span style="color:#6a9955">// Get all keys matching the pattern for this user</span></div>
<div class="num" style="left:-8px;top:121.44px;color:#858585">248</div>
<div class="ln" style="left:83px;top:121.44px"><span style="color:#d4d4d4">    </span><span style="color:#569cd6">const</span><span style="color:#d4d4d4"> pattern = </span><span style="color:#ce9178">`/gpsData:</span><span style="color:#179fff">${</span><span style="color:#d4d4d4">userId</span><span style="color:#179fff">}</span><span style="color:#ce9178">:*`</span><span style="color:#d4d4d4">;</span></div>
<div class="num" style="left:-8px;top:144.25px;color:#858585">249</div>
<div class="ln" style="left:83px;top:144.25px"><span style="color:#d4d4d4">    logger.debug</span><span style="color:#179fff">(</span><span style="color:#ce9178">`Scanning Redis for keys matching: </span><span style="color:#ffd700">${</span><span style="color:#d4d4d4">pattern</span><span style="color:#ffd700">}</span><span style="color:#ce9178">`</span><span style="color:#179fff">)</span><span style="color:#d4d4d4">;</span></div>
<div class="num" style="left:-8px;top:167.06px;color:#858585">250</div>
<div class="ln" style="left:83px;top:167.06px"></div>
<div class="num" style="left:-8px;top:189.87px;color:#858585">251</div>
<div class="ln" style="left:83px;top:189.87px"><span style="color:#d4d4d4">    </span><span style="color:#569cd6">const</span><span style="color:#d4d4d4"> keys = </span><span style="color:#569cd6">await</span><span style="color:#d4d4d4"> redis.keys</span><span style="color:#179fff">(</span><span style="color:#d4d4d4">pattern</span><span style="color:#179fff">)</span><span style="color:#d4d4d4">;</span></div>
<div class="num" style="left:-8px;top:212.68px;color:#858585">252</div>
<div class="ln" style="left:83px;top:212.68px"></div>
<div class="num" style="left:-8px;top:235.49px;color:#858585">253</div>
<div class="ln" style="left:83px;top:235.49px"><span style="color:#d4d4d4">    </span><span style="color:#569cd6">if</span><span style="color:#d4d4d4"> </span><span style="color:#179fff">(</span><span style="color:#d4d4d4">!keys.length</span><span style="color:#179fff">)</span><span style="color:#d4d4d4"> </span><span style="color:#179fff">{</span></div>
<div class="num" style="left:-8px;top:258.30px;color:#858585">254</div>
<div class="ln" style="left:83px;top:258.30px"><span style="color:#d4d4d4">      logger.debug</span><span style="color:#ffd700">(</span><span style="color:#ce9178">`No GPS data found for user </span><span style="color:#da70d6">${</span><span style="color:#d4d4d4">userId</span><span style="color:#da70d6">}</span><span style="color:#ce9178"> to update`</span><span style="color:#ffd700">)</span><span style="color:#d4d4d4">;</span></div>
<div class="num" style="left:-8px;top:281.11px;color:#858585">255</div>
<div class="ln" style="left:83px;top:281.11px"><span style="color:#d4d4d4">      </span><span style="color:#569cd6">return</span><span style="color:#d4d4d4">;</span></div>
<div class="num" style="left:-8px;top:303.92px;color:#858585">256</div>
<div class="ln" style="left:83px;top:303.92px"><span style="color:#d4d4d4">    </span><span style="color:#179fff">}</span></div>
<div class="num" style="left:-8px;top:326.73px;color:#858585">257</div>
<div class="ln" style="left:83px;top:326.73px"></div>
<div class="num" style="left:-8px;top:349.54px;color:#858585">258</div>
<div class="ln" style="left:83px;top:349.54px"><span style="color:#d4d4d4">    </span><span style="color:#6a9955">// Get all values and parse them</span></div>
<div class="num" style="left:-8px;top:372.35px;color:#858585">259</div>
<div class="ln" style="left:83px;top:372.35px"><span style="color:#d4d4d4">    </span><span style="color:#569cd6">const</span><span style="color:#d4d4d4"> values = </span><span style="color:#569cd6">await</span><span style="color:#d4d4d4"> redis.mGet</span><span style="color:#179fff">(</span><span style="color:#d4d4d4">keys</span><span style="color:#179fff">)</span><span style="color:#d4d4d4">;</span></div>
<div class="num" style="left:-8px;top:395.16px;color:#858585">260</div>
<div class="ln" style="left:83px;top:395.16px"></div>
<div class="num" style="left:-8px;top:417.97px;color:#858585">261</div>
<div class="ln" style="left:83px;top:417.97px"><span style="color:#d4d4d4">    </span><span style="color:#6a9955">// Find and update the matching entries</span></div>
<div class="num" style="left:-8px;top:440.78px;color:#858585">262</div>
<div class="ln" style="left:83px;top:440.78px"><span style="color:#d4d4d4">    </span><span style="color:#569cd6">for</span><span style="color:#d4d4d4"> </span><span style="color:#179fff">(</span><span style="color:#569cd6">let</span><span style="color:#d4d4d4"> i = </span><span style="color:#b5cea8">0</span><span style="color:#d4d4d4">; i &lt; values.length; i++</span><span style="color:#179fff">)</span><span style="color:#d4d4d4"> </span><span style="color:#179fff">{</span></div>
<div class="num" style="left:-8px;top:463.59px;color:#858585">263</div>
<div class="ln" style="left:83px;top:463.59px"><span style="color:#d4d4d4">      </span><span style="color:#569cd6">try</span><span style="color:#d4d4d4"> </span><span style="color:#ffd700">{</span></div>
<div class="num" style="left:-8px;top:486.40px;color:#858585">264</div>
<div class="ln" style="left:83px;top:486.40px"><span style="color:#d4d4d4">        </span><span style="color:#569cd6">const</span><span style="color:#d4d4d4"> data = JSON.parse</span><span style="color:#da70d6">(</span><span style="color:#d4d4d4">values</span><span style="color:#179fff">[</span><span style="color:#d4d4d4">i</span><span style="color:#179fff">]</span><span style="color:#da70d6">)</span><span style="color:#d4d4d4">;</span></div>
<div class="num" style="left:-8px;top:509.21px;color:#858585">265</div>
<div class="ln" style="left:83px;top:509.21px"><span style="color:#d4d4d4">        </span><span style="color:#569cd6">let</span><span style="color:#d4d4d4"> updated = </span><span style="color:#569cd6">false</span><span style="color:#d4d4d4">;</span></div>
<div class="num" style="left:-8px;top:532.02px;color:#858585">266</div>
<div class="ln" style="left:83px;top:532.02px"></div>
<div class="num" style="left:-8px;top:554.83px;color:#858585">267</div>
<div class="ln" style="left:83px;top:554.83px"><span style="color:#d4d4d4">        </span><span style="color:#6a9955">// Find and update the specific vehicle data</span></div>
<div class="num" style="left:-8px;top:577.64px;color:#858585">268</div>
<div class="ln" style="left:83px;top:577.64px"><span style="color:#d4d4d4">        </span><span style="color:#569cd6">if</span><span style="color:#d4d4d4"> </span><span style="color:#da70d6">(</span><span style="color:#d4d4d4">data.data &amp;&amp; Array.isArray</span><span style="color:#179fff">(</span><span style="color:#d4d4d4">data.data</span><span style="color:#179fff">)</span><span style="color:#da70d6">)</span><span style="color:#d4d4d4"> </span><span style="color:#da70d6">{</span></div>
<div class="num" style="left:-8px;top:600.45px;color:#858585">269</div>
<div class="ln" style="left:83px;top:600.45px"><span style="color:#d4d4d4">          </span><span style="color:#569cd6">for</span><span style="color:#d4d4d4"> </span><span style="color:#179fff">(</span><span style="color:#569cd6">const</span><span style="color:#d4d4d4"> entry </span><span style="color:#569cd6">of</span><span style="color:#d4d4d4"> data.data</span><span style="color:#179fff">)</span><span style="color:#d4d4d4"> </span><span style="color:#179fff">{</span></div>
<div class="num" style="left:-8px;top:623.26px;color:#858585">270</div>
<div class="ln" style="left:83px;top:623.26px"><span style="color:#d4d4d4">            </span><span style="color:#569cd6">if</span><span style="color:#d4d4d4"> </span><span style="color:#ffd700">(</span><span style="color:#d4d4d4">Number</span><span style="color:#da70d6">(</span><span style="color:#d4d4d4">entry.carId</span><span style="color:#da70d6">)</span><span style="color:#d4d4d4"> === Number</span><span style="color:#da70d6">(</span><span style="color:#d4d4d4">vehicleId</span><span style="color:#da70d6">)</span><span style="color:#ffd700">)</span><span style="color:#d4d4d4"> </span><span style="color:#ffd700">{</span></div>
<div class="num" style="left:-8px;top:646.07px;color:#858585">271</div>
<div class="ln" style="left:83px;top:646.07px"><span style="color:#d4d4d4">              entry.wasNotified = </span><span style="color:#569cd6">true</span><span style="color:#d4d4d4">;</span></div>
<div class="num" style="left:-8px;top:668.88px;color:#858585">272</div>
<div class="ln" style="left:83px;top:668.88px"><span style="color:#d4d4d4">              updated = </span><span style="color:#569cd6">true</span><span style="color:#d4d4d4">;</span></div>
<div class="num" style="left:-8px;top:691.69px;color:#858585">273</div>
<div class="ln" style="left:83px;top:691.69px"><span style="color:#d4d4d4">            </span><span style="color:#ffd700">}</span></div>
<div class="num" style="left:-8px;top:714.50px;color:#858585">274</div>
<div class="ln" style="left:83px;top:714.50px"><span style="color:#d4d4d4">          </span><span style="color:#179fff">}</span></div>
<div class="num" style="left:-8px;top:737.31px;color:#858585">275</div>
<div class="ln" style="left:83px;top:737.31px"><span style="color:#d4d4d4">        </span><span style="color:#da70d6">}</span></div>
<div class="num" style="left:-8px;top:760.12px;color:#858585">276</div>
<div class="ln" style="left:83px;top:760.12px"></div>
<div class="num" style="left:-8px;top:782.93px;color:#858585">277</div>
<div class="ln" style="left:83px;top:782.93px"><span style="color:#d4d4d4">        </span><span style="color:#6a9955">// If we found and updated the entry, save it back to Redis</span></div>
<div class="num" style="left:-8px;top:805.74px;color:#858585">278</div>
<div class="ln" style="left:83px;top:805.74px"><span style="color:#d4d4d4">        </span><span style="color:#569cd6">if</span><span style="color:#d4d4d4"> </span><span style="color:#da70d6">(</span><span style="color:#d4d4d4">updated</span><span style="color:#da70d6">)</span><span style="color:#d4d4d4"> </span><span style="color:#da70d6">{</span></div>
<div class="num" style="left:-8px;top:828.55px;color:#858585">279</div>
<div class="ln" style="left:83px;top:828.55px"><span style="color:#d4d4d4">          </span><span style="color:#569cd6">await</span><span style="color:#d4d4d4"> redis.setEx</span><span style="color:#179fff">(</span><span style="color:#d4d4d4">keys</span><span style="color:#ffd700">[</span><span style="color:#d4d4d4">i</span><span style="color:#ffd700">]</span><span style="color:#d4d4d4">, Number</span><span style="color:#ffd700">(</span><span style="color:#d4d4d4">TTL</span><span style="color:#ffd700">)</span><span style="color:#d4d4d4">, JSON.stringify</span><span style="color:#ffd700">(</span><span style="color:#d4d4d4">data</span><span style="color:#ffd700">)</span><span style="color:#179fff">)</span><span style="color:#d4d4d4">;</span></div>
<div class="num" style="left:-8px;top:851.36px;color:#858585">280</div>
<div class="ln" style="left:83px;top:851.36px"><span style="color:#d4d4d4">          logger.debug</span><span style="color:#179fff">(</span><span style="color:#ce9178">`Updated GPS data with notification for vehicle </span><span style="color:#ffd700">${</span><span style="color:#d4d4d4">vehicleId</span><span style="color:#ffd700">}</span><span style="color:#ce9178"> in key </span><span style="color:#ffd700">${</span><span style="color:#d4d4d4">keys</span><span style="color:#da70d6">[</span><span style="color:#d4d4d4">i</span><span style="color:#da70d6">]</span><span style="color:#ffd700">}</span><span style="color:#ce9178">`</span><span style="color:#179fff">)</span><span style="color:#d4d4d4">;</span></div>
<div class="num" style="left:-8px;top:874.17px;color:#858585">281</div>
<div class="ln" style="left:83px;top:874.17px"><span style="color:#d4d4d4">        </span><span style="color:#da70d6">}</span></div>
<div class="num" style="left:-8px;top:896.98px;color:#858585">282</div>
<div class="ln" style="left:83px;top:896.98px"><span style="color:#d4d4d4">      </span><span style="color:#ffd700">}</span><span style="color:#d4d4d4"> </span><span style="color:#569cd6">catch</span><span style="color:#d4d4d4"> </span><span style="color:#ffd700">(</span><span style="color:#d4d4d4">e</span><span style="color:#ffd700">)</span><span style="color:#d4d4d4"> </span><span style="color:#ffd700">{</span></div>
<div class="num" style="left:-8px;top:919.79px;color:#858585">283</div>
<div class="ln" style="left:83px;top:919.79px"><span style="color:#d4d4d4">        logger.error</span><span style="color:#da70d6">(</span><span style="color:#ce9178">`Failed to parse or update GPS data from Redis </span><span style="color:#179fff">${</span><span style="color:#d4d4d4">e</span><span style="color:#179fff">}</span><span style="color:#ce9178">`</span><span style="color:#da70d6">)</span><span style="color:#d4d4d4">;</span></div>
<div class="num" style="left:-8px;top:942.60px;color:#858585">284</div>
<div class="ln" style="left:83px;top:942.60px"><span style="color:#d4d4d4">      </span><span style="color:#ffd700">}</span></div>
<div class="num" style="left:-8px;top:965.41px;color:#858585">285</div>
<div class="ln" style="left:83px;top:965.41px"><span style="color:#d4d4d4">    </span><span style="color:#179fff">}</span></div>
<div class="num" style="left:-8px;top:988.22px;color:#858585">286</div>
<div class="ln" style="left:83px;top:988.22px"></div>
<div class="num" style="left:-8px;top:1011.03px;color:#858585">287</div>
<div class="ln" style="left:83px;top:1011.03px"><span style="color:#d4d4d4">    logger.debug</span><span style="color:#179fff">(</span><span style="color:#ce9178">`Successfully updated GPS data with notifications for user </span><span style="color:#ffd700">${</span><span style="color:#d4d4d4">userId</span><span style="color:#ffd700">}</span><span style="color:#ce9178">`</span><span style="color:#179fff">)</span><span style="color:#d4d4d4">;</span></div>
<div class="num" style="left:-8px;top:1033.84px;color:#858585">288</div>
<div class="ln" style="left:83px;top:1033.84px"><span style="color:#d4d4d4">  </span><span style="color:#da70d6">}</span><span style="color:#d4d4d4"> </span><span style="color:#569cd6">catch</span><span style="color:#d4d4d4"> </span><span style="color:#da70d6">(</span><span style="color:#d4d4d4">e</span><span style="color:#da70d6">)</span><span style="color:#d4d4d4"> </span><span style="color:#da70d6">{</span></div>
<div class="num" style="left:-8px;top:1056.65px;color:#858585">289</div>
<div class="ln" style="left:83px;top:1056.65px"><span style="color:#d4d4d4">    logger.error</span><span style="color:#179fff">(</span><span style="color:#ce9178">`Failed updating GPS data in Redis </span><span style="color:#ffd700">${</span><span style="color:#d4d4d4">e</span><span style="color:#ffd700">}</span><span style="color:#ce9178">`</span><span style="color:#179fff">)</span><span style="color:#d4d4d4">;</span></div>
<div class="num" style="left:-8px;top:1079.46px;color:#858585">290</div>
<div class="ln" style="left:83px;top:1079.46px"><span style="color:#d4d4d4">    </span><span style="color:#569cd6">throw</span><span style="color:#d4d4d4"> e;</span></div>
<div class="num" style="left:-8px;top:1102.27px;color:#858585">291</div>
<div class="ln" style="left:83px;top:1102.27px"><span style="color:#d4d4d4">  </span><span style="color:#da70d6">}</span></div>
<div class="num" style="left:-8px;top:1125.08px;color:#858585">292</div>
<div class="ln" style="left:83px;top:1125.08px"><span style="color:#ffd700">}</span><span style="color:#d4d4d4">;</span></div>
<div class="g" style="left:83.00px;top:5.19px;height:1117.69px;background:#707070"></div>
<div class="g" style="left:103.16px;top:5.19px;height:22.81px;background:#404040"></div>
<div class="g" style="left:103.16px;top:96.43px;height:935.21px;background:#404040"></div>
<div class="g" style="left:103.16px;top:1054.45px;height:45.62px;background:#404040"></div>
<div class="g" style="left:123.32px;top:256.10px;height:45.62px;background:#404040"></div>
<div class="g" style="left:123.32px;top:461.39px;height:501.82px;background:#404040"></div>
<div class="g" style="left:143.48px;top:484.20px;height:410.58px;background:#404040"></div>
<div class="g" style="left:143.48px;top:917.59px;height:22.81px;background:#404040"></div>
<div class="g" style="left:163.64px;top:598.25px;height:136.86px;background:#404040"></div>
<div class="g" style="left:163.64px;top:826.35px;height:45.62px;background:#404040"></div>
<div class="g" style="left:183.80px;top:621.06px;height:91.24px;background:#404040"></div>
<div class="g" style="left:203.96px;top:643.87px;height:45.62px;background:#404040"></div>
</div>
<div class="a" style="left:1309px;top:110px;width:1120px;height:22.8px;background:#1e1e1e"></div>
<div class="a" style="left:1309px;top:132.8px;width:1120px;height:6px;background:linear-gradient(to bottom, rgba(0,0,0,0.85), rgba(0,0,0,0))"></div>
<div class="num" style="left:1301px;top:111.60px;color:#858585">229</div>
<div class="ln" style="left:1392px;top:111.60px"><span style="color:#569cd6">export</span><span style="color:#d4d4d4"> </span><span style="color:#569cd6">const</span><span style="color:#d4d4d4"> updateRedisGpsDataWithNotification = </span><span style="color:#569cd6">async</span><span style="color:#d4d4d4"> </span><span style="color:#ffd700">(</span><span style="color:#d4d4d4">userId, gpsData, vehicleId, TTL</span><span style="color:#ffd700">)</span><span style="color:#d4d4d4"> </span><span style="color:#569cd6">=&gt;</span><span style="color:#d4d4d4"> </span><span style="color:#ffd700">{</span></div>
<div class="a" style="left:2423px;top:133px;width:6px;height:1146px;background:linear-gradient(to right, rgba(0,0,0,0), rgba(0,0,0,0.6))"></div>
<div class="a" style="left:2429px;top:110px;width:128px;height:1169px;background:#1e1e1e"></div>
<div class="a" style="left:1187px;top:118px;width:104px;height:3px;background:rgba(38,79,120,0.45)"></div>
<div class="a" style="left:1187px;top:134px;width:104px;height:3px;background:rgba(38,79,120,0.45)"></div>
<div class="a" style="left:1187px;top:170px;width:104px;height:3px;background:rgba(38,79,120,0.45)"></div>
<div class="a" style="left:1187px;top:196px;width:104px;height:3px;background:rgba(38,79,120,0.45)"></div>
<div class="a" style="left:1187px;top:212px;width:104px;height:3px;background:rgba(38,79,120,0.45)"></div>
<div class="a" style="left:2437px;top:119px;width:105px;height:3px;background:rgba(38,79,120,0.45)"></div>
<div class="a" style="left:2437px;top:215px;width:105px;height:3px;background:rgba(38,79,120,0.45)"></div>
<div class="a" style="left:2437px;top:223px;width:105px;height:3px;background:rgba(38,79,120,0.45)"></div>
<div class="a" style="left:2437px;top:230px;width:105px;height:3px;background:rgba(38,79,120,0.45)"></div>
<div class="a" style="left:1187px;top:110px;width:6px;height:2px;background:#569cd6;opacity:.38"></div><div class="a" style="left:1194px;top:110px;width:1px;height:2px;background:#ffd700;opacity:.38"></div><div class="a" style="left:1196px;top:110px;width:14px;height:2px;background:#d4d4d4;opacity:.38"></div><div class="a" style="left:1211px;top:110px;width:1px;height:2px;background:#ffd700;opacity:.38"></div><div class="a" style="left:1213px;top:110px;width:4px;height:2px;background:#569cd6;opacity:.38"></div><div class="a" style="left:1218px;top:110px;width:22px;height:2px;background:#ce9178;opacity:.38"></div><div class="a" style="left:1240px;top:110px;width:1px;height:2px;background:#d4d4d4;opacity:.38"></div><div class="a" style="left:1187px;top:112px;width:6px;height:2px;background:#569cd6;opacity:.38"></div><div class="a" style="left:1194px;top:112px;width:1px;height:2px;background:#ffd700;opacity:.38"></div><div class="a" style="left:1196px;top:112px;width:6px;height:2px;background:#d4d4d4;opacity:.38"></div><div class="a" style="left:1203px;top:112px;width:1px;height:2px;background:#ffd700;opacity:.38"></div><div class="a" style="left:1205px;top:112px;width:4px;height:2px;background:#569cd6;opacity:.38"></div><div class="a" style="left:1210px;top:112px;width:14px;height:2px;background:#ce9178;opacity:.38"></div><div class="a" style="left:1224px;top:112px;width:1px;height:2px;background:#d4d4d4;opacity:.38"></div><div class="a" style="left:1187px;top:114px;width:6px;height:2px;background:#569cd6;opacity:.38"></div><div class="a" style="left:1194px;top:114px;width:1px;height:2px;background:#ffd700;opacity:.38"></div><div class="a" style="left:1196px;top:114px;width:12px;height:2px;background:#d4d4d4;opacity:.38"></div><div class="a" style="left:1209px;top:114px;width:1px;height:2px;background:#ffd700;opacity:.38"></div><div class="a" style="left:1211px;top:114px;width:4px;height:2px;background:#569cd6;opacity:.38"></div><div class="a" style="left:1216px;top:114px;width:17px;height:2px;background:#ce9178;opacity:.38"></div><div class="a" style="left:1233px;top:114px;width:1px;height:2px;background:#d4d4d4;opacity:.38"></div><div class="a" style="left:1187px;top:118px;width:6px;height:2px;background:#569cd6;opacity:.38"></div><div class="a" style="left:1194px;top:118px;width:5px;height:2px;background:#569cd6;opacity:.38"></div><div class="a" style="left:1200px;top:118px;width:16px;height:2px;background:#d4d4d4;opacity:.38"></div><div class="a" style="left:1217px;top:118px;width:1px;height:2px;background:#d4d4d4;opacity:.38"></div><div class="a" style="left:1219px;top:118px;width:5px;height:2px;background:#569cd6;opacity:.38"></div><div class="a" style="left:1225px;top:118px;width:1px;height:2px;background:#ffd700;opacity:.38"></div><div class="a" style="left:1226px;top:118px;width:7px;height:2px;background:#d4d4d4;opacity:.38"></div><div class="a" style="left:1234px;top:118px;width:9px;height:2px;background:#d4d4d4;opacity:.38"></div><div class="a" style="left:1243px;top:118px;width:1px;height:2px;background:#ffd700;opacity:.38"></div><div class="a" style="left:1245px;top:118px;width:2px;height:2px;background:#569cd6;opacity:.38"></div><div class="a" style="left:1248px;top:118px;width:1px;height:2px;background:#ffd700;opacity:.38"></div><div class="a" style="left:1189px;top:120px;width:3px;height:2px;background:#569cd6;opacity:.38"></div><div class="a" style="left:1193px;top:120px;width:1px;height:2px;background:#da70d6;opacity:.38"></div><div class="a" style="left:1191px;top:122px;width:2px;height:2px;background:#6a9955;opacity:.38"></div><div class="a" style="left:1194px;top:122px;width:6px;height:2px;background:#6a9955;opacity:.38"></div><div class="a" style="left:1201px;top:122px;width:2px;height:2px;background:#6a9955;opacity:.38"></div><div class="a" style="left:1204px;top:122px;width:5px;height:2px;background:#6a9955;opacity:.38"></div><div class="a" style="left:1210px;top:122px;width:2px;height:2px;background:#6a9955;opacity:.38"></div><div class="a" style="left:1213px;top:122px;width:8px;height:2px;background:#6a9955;opacity:.38"></div><div class="a" style="left:1222px;top:122px;width:3px;height:2px;background:#6a9955;opacity:.38"></div><div class="a" style="left:1226px;top:122px;width:5px;height:2px;background:#6a9955;opacity:.38"></div><div class="a" style="left:1232px;top:122px;width:3px;height:2px;background:#6a9955;opacity:.38"></div><div class="a" style="left:1236px;top:122px;width:10px;height:2px;background:#6a9955;opacity:.38"></div><div class="a" style="left:1191px;top:124px;width:5px;height:2px;background:#569cd6;opacity:.38"></div><div class="a" style="left:1197px;top:124px;width:8px;height:2px;background:#d4d4d4;opacity:.38"></div><div class="a" style="left:1206px;top:124px;width:1px;height:2px;background:#d4d4d4;opacity:.38"></div><div class="a" style="left:1208px;top:124px;width:12px;height:2px;background:#d4d4d4;opacity:.38"></div><div class="a" style="left:1220px;top:124px;width:1px;height:2px;background:#179fff;opacity:.38"></div><div class="a" style="left:1221px;top:124px;width:1px;height:2px;background:#ffd700;opacity:.38"></div><div class="a" style="left:1222px;top:124px;width:7px;height:2px;background:#d4d4d4;opacity:.38"></div><div class="a" style="left:1229px;top:124px;width:1px;height:2px;background:#ffd700;opacity:.38"></div><div class="a" style="left:1231px;top:124px;width:2px;height:2px;background:#569cd6;opacity:.38"></div><div class="a" style="left:1234px;top:124px;width:1px;height:2px;background:#ffd700;opacity:.38"></div><div class="a" style="left:1193px;top:126px;width:5px;height:2px;background:#569cd6;opacity:.38"></div><div class="a" style="left:1199px;top:126px;width:3px;height:2px;background:#d4d4d4;opacity:.38"></div><div class="a" style="left:1203px;top:126px;width:1px;height:2px;background:#d4d4d4;opacity:.38"></div><div class="a" style="left:1205px;top:126px;width:10px;height:2px;background:#ce9178;opacity:.38"></div><div class="a" style="left:1215px;top:126px;width:2px;height:2px;background:#da70d6;opacity:.38"></div><div class="a" style="left:1217px;top:126px;width:6px;height:2px;background:#d4d4d4;opacity:.38"></div><div class="a" style="left:1223px;top:126px;width:1px;height:2px;background:#da70d6;opacity:.38"></div><div class="a" style="left:1224px;top:126px;width:1px;height:2px;background:#ce9178;opacity:.38"></div><div class="a" style="left:1225px;top:126px;width:2px;height:2px;background:#da70d6;opacity:.38"></div><div class="a" style="left:1227px;top:126px;width:10px;height:2px;background:#d4d4d4;opacity:.38"></div><div class="a" style="left:1237px;top:126px;width:1px;height:2px;background:#da70d6;opacity:.38"></div><div class="a" style="left:1238px;top:126px;width:1px;height:2px;background:#ce9178;opacity:.38"></div><div class="a" style="left:1239px;top:126px;width:1px;height:2px;background:#d4d4d4;opacity:.38"></div><div class="a" style="left:1193px;top:128px;width:12px;height:2px;background:#d4d4d4;opacity:.38"></div><div class="a" style="left:1205px;top:128px;width:1px;height:2px;background:#da70d6;opacity:.38"></div><div class="a" style="left:1206px;top:128px;width:8px;height:2px;background:#ce9178;opacity:.38"></div><div class="a" style="left:1215px;top:128px;width:3px;height:2px;background:#ce9178;opacity:.38"></div><div class="a" style="left:1219px;top:128px;width:4px;height:2px;background:#ce9178;opacity:.38"></div><div class="a" style="left:1224px;top:128px;width:3px;height:2px;background:#ce9178;opacity:.38"></div><div class="a" style="left:1228px;top:128px;width:3px;height:2px;background:#ce9178;opacity:.38"></div><div class="a" style="left:1232px;top:128px;width:2px;height:2px;background:#179fff;opacity:.38"></div><div class="a" style="left:1234px;top:128px;width:3px;height:2px;background:#d4d4d4;opacity:.38"></div><div class="a" style="left:1237px;top:128px;width:1px;height:2px;background:#179fff;opacity:.38"></div><div class="a" style="left:1238px;top:128px;width:1px;height:2px;background:#ce9178;opacity:.38"></div><div class="a" style="left:1239px;top:128px;width:1px;height:2px;background:#da70d6;opacity:.38"></div><div class="a" style="left:1240px;top:128px;width:1px;height:2px;background:#d4d4d4;opacity:.38"></div><div class="a" style="left:1193px;top:130px;width:6px;height:2px;background:#569cd6;opacity:.38"></div><div class="a" style="left:1200px;top:130px;width:11px;height:2px;background:#d4d4d4;opacity:.38"></div><div class="a" style="left:1211px;top:130px;width:1px;height:2px;background:#da70d6;opacity:.38"></div><div class="a" style="left:1212px;top:130px;width:4px;height:2px;background:#d4d4d4;opacity:.38"></div><div class="a" style="left:1217px;top:130px;width:4px;height:2px;background:#d4d4d4;opacity:.38"></div><div class="a" style="left:1222px;top:130px;width:14px;height:2px;background:#d4d4d4;opacity:.38"></div><div class="a" style="left:1236px;top:130px;width:1px;height:2px;background:#179fff;opacity:.38"></div><div class="a" style="left:1237px;top:130px;width:7px;height:2px;background:#d4d4d4;opacity:.38"></div><div class="a" style="left:1244px;top:130px;width:1px;height:2px;background:#179fff;opacity:.38"></div><div class="a" style="left:1245px;top:130px;width:1px;height:2px;background:#da70d6;opacity:.38"></div><div class="a" style="left:1246px;top:130px;width:1px;height:2px;background:#d4d4d4;opacity:.38"></div><div class="a" style="left:1191px;top:132px;width:1px;height:2px;background:#ffd700;opacity:.38"></div><div class="a" style="left:1192px;top:132px;width:1px;height:2px;background:#179fff;opacity:.38"></div><div class="a" style="left:1193px;top:132px;width:1px;height:2px;background:#d4d4d4;opacity:.38"></div><div class="a" style="left:1191px;top:136px;width:5px;height:2px;background:#569cd6;opacity:.38"></div><div class="a" style="left:1197px;top:136px;width:11px;height:2px;background:#d4d4d4;opacity:.38"></div><div class="a" style="left:1208px;top:136px;width:1px;height:2px;background:#179fff;opacity:.38"></div><div class="a" style="left:1209px;top:136px;width:8px;height:2px;background:#d4d4d4;opacity:.38"></div><div class="a" style="left:1217px;top:136px;width:1px;height:2px;background:#179fff;opacity:.38"></div><div class="a" style="left:1218px;top:136px;width:1px;height:2px;background:#d4d4d4;opacity:.38"></div><div class="a" style="left:1191px;top:138px;width:12px;height:2px;background:#d4d4d4;opacity:.38"></div><div class="a" style="left:1203px;top:138px;width:1px;height:2px;background:#179fff;opacity:.38"></div><div class="a" style="left:1204px;top:138px;width:7px;height:2px;background:#ce9178;opacity:.38"></div><div class="a" style="left:1212px;top:138px;width:2px;height:2px;background:#ffd700;opacity:.38"></div><div class="a" style="left:1214px;top:138px;width:15px;height:2px;background:#d4d4d4;opacity:.38"></div><div class="a" style="left:1229px;top:138px;width:1px;height:2px;background:#ffd700;opacity:.38"></div><div class="a" style="left:1231px;top:138px;width:7px;height:2px;background:#ce9178;opacity:.38"></div><div class="a" style="left:1239px;top:138px;width:2px;height:2px;background:#ce9178;opacity:.38"></div><div class="a" style="left:1242px;top:138px;width:6px;height:2px;background:#ce9178;opacity:.38"></div><div class="a" style="left:1248px;top:138px;width:1px;height:2px;background:#179fff;opacity:.38"></div><div class="a" style="left:1249px;top:138px;width:1px;height:2px;background:#d4d4d4;opacity:.38"></div><div class="a" style="left:1189px;top:140px;width:1px;height:2px;background:#da70d6;opacity:.38"></div><div class="a" style="left:1191px;top:140px;width:5px;height:2px;background:#569cd6;opacity:.38"></div><div class="a" style="left:1197px;top:140px;width:1px;height:2px;background:#da70d6;opacity:.38"></div><div class="a" style="left:1198px;top:140px;width:1px;height:2px;background:#d4d4d4;opacity:.38"></div><div class="a" style="left:1199px;top:140px;width:1px;height:2px;background:#da70d6;opacity:.38"></div><div class="a" style="left:1201px;top:140px;width:1px;height:2px;background:#da70d6;opacity:.38"></div><div class="a" style="left:1191px;top:142px;width:12px;height:2px;background:#d4d4d4;opacity:.38"></div><div class="a" style="left:1203px;top:142px;width:1px;height:2px;background:#179fff;opacity:.38"></div><div class="a" style="left:1204px;top:142px;width:7px;height:2px;background:#ce9178;opacity:.38"></div><div class="a" style="left:1212px;top:142px;width:7px;height:2px;background:#ce9178;opacity:.38"></div><div class="a" style="left:1220px;top:142px;width:4px;height:2px;background:#ce9178;opacity:.38"></div><div class="a" style="left:1225px;top:142px;width:2px;height:2px;background:#ce9178;opacity:.38"></div><div class="a" style="left:1228px;top:142px;width:5px;height:2px;background:#ce9178;opacity:.38"></div><div class="a" style="left:1234px;top:142px;width:2px;height:2px;background:#ffd700;opacity:.38"></div><div class="a" style="left:1236px;top:142px;width:1px;height:2px;background:#d4d4d4;opacity:.38"></div><div class="a" style="left:1237px;top:142px;width:1px;height:2px;background:#ffd700;opacity:.38"></div><div class="a" style="left:1238px;top:142px;width:1px;height:2px;background:#ce9178;opacity:.38"></div><div class="a" style="left:1239px;top:142px;width:1px;height:2px;background:#179fff;opacity:.38"></div><div class="a" style="left:1240px;top:142px;width:1px;height:2px;background:#d4d4d4;opacity:.38"></div><div class="a" style="left:1191px;top:144px;width:5px;height:2px;background:#569cd6;opacity:.38"></div><div class="a" style="left:1197px;top:144px;width:2px;height:2px;background:#d4d4d4;opacity:.38"></div><div class="a" style="left:1189px;top:146px;width:1px;height:2px;background:#da70d6;opacity:.38"></div><div class="a" style="left:1189px;top:150px;width:12px;height:2px;background:#d4d4d4;opacity:.38"></div><div class="a" style="left:1201px;top:150px;width:1px;height:2px;background:#da70d6;opacity:.38"></div><div class="a" style="left:1202px;top:150px;width:8px;height:2px;background:#ce9178;opacity:.38"></div><div class="a" style="left:1211px;top:150px;width:4px;height:2px;background:#ce9178;opacity:.38"></div><div class="a" style="left:1216px;top:150px;width:3px;height:2px;background:#ce9178;opacity:.38"></div><div class="a" style="left:1220px;top:150px;width:4px;height:2px;background:#ce9178;opacity:.38"></div><div class="a" style="left:1225px;top:150px;width:2px;height:2px;background:#179fff;opacity:.38"></div><div class="a" style="left:1227px;top:150px;width:6px;height:2px;background:#d4d4d4;opacity:.38"></div><div class="a" style="left:1233px;top:150px;width:1px;height:2px;background:#179fff;opacity:.38"></div><div class="a" style="left:1234px;top:150px;width:1px;height:2px;background:#ce9178;opacity:.38"></div><div class="a" style="left:1235px;top:150px;width:1px;height:2px;background:#da70d6;opacity:.38"></div><div class="a" style="left:1236px;top:150px;width:1px;height:2px;background:#d4d4d4;opacity:.38"></div><div class="a" style="left:1189px;top:154px;width:3px;height:2px;background:#569cd6;opacity:.38"></div><div class="a" style="left:1193px;top:154px;width:6px;height:2px;background:#d4d4d4;opacity:.38"></div><div class="a" style="left:1189px;top:156px;width:3px;height:2px;background:#569cd6;opacity:.38"></div><div class="a" style="left:1193px;top:156px;width:1px;height:2px;background:#da70d6;opacity:.38"></div><div class="a" style="left:1191px;top:158px;width:5px;height:2px;background:#d4d4d4;opacity:.38"></div><div class="a" style="left:1197px;top:158px;width:1px;height:2px;background:#d4d4d4;opacity:.38"></div><div class="a" style="left:1199px;top:158px;width:5px;height:2px;background:#569cd6;opacity:.38"></div><div class="a" style="left:1205px;top:158px;width:14px;height:2px;background:#d4d4d4;opacity:.38"></div><div class="a" style="left:1219px;top:158px;width:2px;height:2px;background:#179fff;opacity:.38"></div><div class="a" style="left:1221px;top:158px;width:1px;height:2px;background:#d4d4d4;opacity:.38"></div><div class="a" style="left:1191px;top:160px;width:12px;height:2px;background:#d4d4d4;opacity:.38"></div><div class="a" style="left:1203px;top:160px;width:1px;height:2px;background:#179fff;opacity:.38"></div><div class="a" style="left:1204px;top:160px;width:13px;height:2px;background:#ce9178;opacity:.38"></div><div class="a" style="left:1218px;top:160px;width:9px;height:2px;background:#ce9178;opacity:.38"></div><div class="a" style="left:1228px;top:160px;width:2px;height:2px;background:#ce9178;opacity:.38"></div><div class="a" style="left:1231px;top:160px;width:5px;height:2px;background:#ce9178;opacity:.38"></div><div class="a" style="left:1237px;top:160px;width:3px;height:2px;background:#ce9178;opacity:.38"></div><div class="a" style="left:1241px;top:160px;width:17px;height:2px;background:#ce9178;opacity:.38"></div><div class="a" style="left:1258px;top:160px;width:1px;height:2px;background:#179fff;opacity:.38"></div><div class="a" style="left:1259px;top:160px;width:1px;height:2px;background:#d4d4d4;opacity:.38"></div><div class="a" style="left:1189px;top:162px;width:1px;height:2px;background:#da70d6;opacity:.38"></div><div class="a" style="left:1191px;top:162px;width:5px;height:2px;background:#569cd6;opacity:.38"></div><div class="a" style="left:1197px;top:162px;width:1px;height:2px;background:#da70d6;opacity:.38"></div><div class="a" style="left:1198px;top:162px;width:1px;height:2px;background:#d4d4d4;opacity:.38"></div><div class="a" style="left:1199px;top:162px;width:1px;height:2px;background:#da70d6;opacity:.38"></div><div class="a" style="left:1201px;top:162px;width:1px;height:2px;background:#da70d6;opacity:.38"></div><div class="a" style="left:1191px;top:164px;width:12px;height:2px;background:#d4d4d4;opacity:.38"></div><div class="a" style="left:1203px;top:164px;width:1px;height:2px;background:#179fff;opacity:.38"></div><div class="a" style="left:1204px;top:164px;width:6px;height:2px;background:#ce9178;opacity:.38"></div><div class="a" style="left:1211px;top:164px;width:7px;height:2px;background:#ce9178;opacity:.38"></div><div class="a" style="left:1219px;top:164px;width:4px;height:2px;background:#ce9178;opacity:.38"></div><div class="a" style="left:1224px;top:164px;width:5px;height:2px;background:#ce9178;opacity:.38"></div><div class="a" style="left:1230px;top:164px;width:2px;height:2px;background:#ffd700;opacity:.38"></div><div class="a" style="left:1232px;top:164px;width:1px;height:2px;background:#d4d4d4;opacity:.38"></div><div class="a" style="left:1233px;top:164px;width:1px;height:2px;background:#ffd700;opacity:.38"></div><div class="a" style="left:1234px;top:164px;width:1px;height:2px;background:#ce9178;opacity:.38"></div><div class="a" style="left:1235px;top:164px;width:1px;height:2px;background:#179fff;opacity:.38"></div><div class="a" style="left:1236px;top:164px;width:1px;height:2px;background:#d4d4d4;opacity:.38"></div><div class="a" style="left:1191px;top:166px;width:5px;height:2px;background:#569cd6;opacity:.38"></div><div class="a" style="left:1197px;top:166px;width:2px;height:2px;background:#d4d4d4;opacity:.38"></div><div class="a" style="left:1189px;top:168px;width:1px;height:2px;background:#da70d6;opacity:.38"></div><div class="a" style="left:1187px;top:170px;width:1px;height:2px;background:#ffd700;opacity:.38"></div><div class="a" style="left:1188px;top:170px;width:1px;height:2px;background:#d4d4d4;opacity:.38"></div><div class="a" style="left:1187px;top:174px;width:6px;height:2px;background:#569cd6;opacity:.38"></div><div class="a" style="left:1194px;top:174px;width:5px;height:2px;background:#569cd6;opacity:.38"></div><div class="a" style="left:1200px;top:174px;width:16px;height:2px;background:#d4d4d4;opacity:.38"></div><div class="a" style="left:1217px;top:174px;width:1px;height:2px;background:#d4d4d4;opacity:.38"></div><div class="a" style="left:1219px;top:174px;width:5px;height:2px;background:#569cd6;opacity:.38"></div><div class="a" style="left:1225px;top:174px;width:1px;height:2px;background:#ffd700;opacity:.38"></div><div class="a" style="left:1226px;top:174px;width:7px;height:2px;background:#d4d4d4;opacity:.38"></div><div class="a" style="left:1234px;top:174px;width:9px;height:2px;background:#d4d4d4;opacity:.38"></div><div class="a" style="left:1243px;top:174px;width:1px;height:2px;background:#ffd700;opacity:.38"></div><div class="a" style="left:1245px;top:174px;width:2px;height:2px;background:#569cd6;opacity:.38"></div><div class="a" style="left:1248px;top:174px;width:1px;height:2px;background:#ffd700;opacity:.38"></div><div class="a" style="left:1189px;top:176px;width:3px;height:2px;background:#569cd6;opacity:.38"></div><div class="a" style="left:1193px;top:176px;width:1px;height:2px;background:#da70d6;opacity:.38"></div><div class="a" style="left:1191px;top:178px;width:2px;height:2px;background:#6a9955;opacity:.38"></div><div class="a" style="left:1194px;top:178px;width:6px;height:2px;background:#6a9955;opacity:.38"></div><div class="a" style="left:1201px;top:178px;width:2px;height:2px;background:#6a9955;opacity:.38"></div><div class="a" style="left:1204px;top:178px;width:5px;height:2px;background:#6a9955;opacity:.38"></div><div class="a" style="left:1210px;top:178px;width:2px;height:2px;background:#6a9955;opacity:.38"></div><div class="a" style="left:1213px;top:178px;width:8px;height:2px;background:#6a9955;opacity:.38"></div><div class="a" style="left:1222px;top:178px;width:3px;height:2px;background:#6a9955;opacity:.38"></div><div class="a" style="left:1226px;top:178px;width:5px;height:2px;background:#6a9955;opacity:.38"></div><div class="a" style="left:1232px;top:178px;width:3px;height:2px;background:#6a9955;opacity:.38"></div><div class="a" style="left:1236px;top:178px;width:10px;height:2px;background:#6a9955;opacity:.38"></div><div class="a" style="left:1191px;top:180px;width:5px;height:2px;background:#569cd6;opacity:.38"></div><div class="a" style="left:1197px;top:180px;width:8px;height:2px;background:#d4d4d4;opacity:.38"></div><div class="a" style="left:1206px;top:180px;width:1px;height:2px;background:#d4d4d4;opacity:.38"></div><div class="a" style="left:1208px;top:180px;width:12px;height:2px;background:#d4d4d4;opacity:.38"></div><div class="a" style="left:1220px;top:180px;width:1px;height:2px;background:#179fff;opacity:.38"></div><div class="a" style="left:1221px;top:180px;width:1px;height:2px;background:#ffd700;opacity:.38"></div><div class="a" style="left:1222px;top:180px;width:7px;height:2px;background:#d4d4d4;opacity:.38"></div><div class="a" style="left:1229px;top:180px;width:1px;height:2px;background:#ffd700;opacity:.38"></div><div class="a" style="left:1231px;top:180px;width:2px;height:2px;background:#569cd6;opacity:.38"></div><div class="a" style="left:1234px;top:180px;width:1px;height:2px;background:#ffd700;opacity:.38"></div><div class="a" style="left:1193px;top:182px;width:5px;height:2px;background:#569cd6;opacity:.38"></div><div class="a" style="left:1199px;top:182px;width:3px;height:2px;background:#d4d4d4;opacity:.38"></div><div class="a" style="left:1203px;top:182px;width:1px;height:2px;background:#d4d4d4;opacity:.38"></div><div class="a" style="left:1205px;top:182px;width:10px;height:2px;background:#ce9178;opacity:.38"></div><div class="a" style="left:1215px;top:182px;width:2px;height:2px;background:#da70d6;opacity:.38"></div><div class="a" style="left:1217px;top:182px;width:6px;height:2px;background:#d4d4d4;opacity:.38"></div><div class="a" style="left:1223px;top:182px;width:1px;height:2px;background:#da70d6;opacity:.38"></div><div class="a" style="left:1224px;top:182px;width:1px;height:2px;background:#ce9178;opacity:.38"></div><div class="a" style="left:1225px;top:182px;width:2px;height:2px;background:#da70d6;opacity:.38"></div><div class="a" style="left:1227px;top:182px;width:10px;height:2px;background:#d4d4d4;opacity:.38"></div><div class="a" style="left:1237px;top:182px;width:1px;height:2px;background:#da70d6;opacity:.38"></div><div class="a" style="left:1238px;top:182px;width:1px;height:2px;background:#ce9178;opacity:.38"></div><div class="a" style="left:1239px;top:182px;width:1px;height:2px;background:#d4d4d4;opacity:.38"></div><div class="a" style="left:1193px;top:184px;width:12px;height:2px;background:#d4d4d4;opacity:.38"></div><div class="a" style="left:1205px;top:184px;width:1px;height:2px;background:#da70d6;opacity:.38"></div><div class="a" style="left:1206px;top:184px;width:8px;height:2px;background:#ce9178;opacity:.38"></div><div class="a" style="left:1215px;top:184px;width:3px;height:2px;background:#ce9178;opacity:.38"></div><div class="a" style="left:1219px;top:184px;width:4px;height:2px;background:#ce9178;opacity:.38"></div><div class="a" style="left:1224px;top:184px;width:3px;height:2px;background:#ce9178;opacity:.38"></div><div class="a" style="left:1228px;top:184px;width:3px;height:2px;background:#ce9178;opacity:.38"></div><div class="a" style="left:1232px;top:184px;width:2px;height:2px;background:#179fff;opacity:.38"></div><div class="a" style="left:1234px;top:184px;width:3px;height:2px;background:#d4d4d4;opacity:.38"></div><div class="a" style="left:1237px;top:184px;width:1px;height:2px;background:#179fff;opacity:.38"></div><div class="a" style="left:1238px;top:184px;width:1px;height:2px;background:#ce9178;opacity:.38"></div><div class="a" style="left:1239px;top:184px;width:1px;height:2px;background:#da70d6;opacity:.38"></div><div class="a" style="left:1240px;top:184px;width:1px;height:2px;background:#d4d4d4;opacity:.38"></div><div class="a" style="left:1193px;top:186px;width:6px;height:2px;background:#569cd6;opacity:.38"></div><div class="a" style="left:1200px;top:186px;width:11px;height:2px;background:#d4d4d4;opacity:.38"></div><div class="a" style="left:1211px;top:186px;width:1px;height:2px;background:#da70d6;opacity:.38"></div><div class="a" style="left:1212px;top:186px;width:4px;height:2px;background:#d4d4d4;opacity:.38"></div><div class="a" style="left:1217px;top:186px;width:4px;height:2px;background:#d4d4d4;opacity:.38"></div><div class="a" style="left:1222px;top:186px;width:14px;height:2px;background:#d4d4d4;opacity:.38"></div><div class="a" style="left:1236px;top:186px;width:1px;height:2px;background:#179fff;opacity:.38"></div><div class="a" style="left:1237px;top:186px;width:7px;height:2px;background:#d4d4d4;opacity:.38"></div><div class="a" style="left:1244px;top:186px;width:1px;height:2px;background:#179fff;opacity:.38"></div><div class="a" style="left:1245px;top:186px;width:1px;height:2px;background:#da70d6;opacity:.38"></div><div class="a" style="left:1246px;top:186px;width:1px;height:2px;background:#d4d4d4;opacity:.38"></div><div class="a" style="left:1191px;top:188px;width:1px;height:2px;background:#ffd700;opacity:.38"></div><div class="a" style="left:1192px;top:188px;width:1px;height:2px;background:#179fff;opacity:.38"></div><div class="a" style="left:1193px;top:188px;width:1px;height:2px;background:#d4d4d4;opacity:.38"></div><div class="a" style="left:1191px;top:192px;width:5px;height:2px;background:#569cd6;opacity:.38"></div><div class="a" style="left:1197px;top:192px;width:11px;height:2px;background:#d4d4d4;opacity:.38"></div><div class="a" style="left:1208px;top:192px;width:1px;height:2px;background:#179fff;opacity:.38"></div><div class="a" style="left:1209px;top:192px;width:8px;height:2px;background:#d4d4d4;opacity:.38"></div><div class="a" style="left:1217px;top:192px;width:1px;height:2px;background:#179fff;opacity:.38"></div><div class="a" style="left:1218px;top:192px;width:1px;height:2px;background:#d4d4d4;opacity:.38"></div><div class="a" style="left:1191px;top:194px;width:12px;height:2px;background:#d4d4d4;opacity:.38"></div><div class="a" style="left:1203px;top:194px;width:1px;height:2px;background:#179fff;opacity:.38"></div><div class="a" style="left:1204px;top:194px;width:7px;height:2px;background:#ce9178;opacity:.38"></div><div class="a" style="left:1212px;top:194px;width:2px;height:2px;background:#ffd700;opacity:.38"></div><div class="a" style="left:1214px;top:194px;width:15px;height:2px;background:#d4d4d4;opacity:.38"></div><div class="a" style="left:1229px;top:194px;width:1px;height:2px;background:#ffd700;opacity:.38"></div><div class="a" style="left:1231px;top:194px;width:7px;height:2px;background:#ce9178;opacity:.38"></div><div class="a" style="left:1239px;top:194px;width:2px;height:2px;background:#ce9178;opacity:.38"></div><div class="a" style="left:1242px;top:194px;width:6px;height:2px;background:#ce9178;opacity:.38"></div><div class="a" style="left:1248px;top:194px;width:1px;height:2px;background:#179fff;opacity:.38"></div><div class="a" style="left:1249px;top:194px;width:1px;height:2px;background:#d4d4d4;opacity:.38"></div><div class="a" style="left:1189px;top:196px;width:1px;height:2px;background:#da70d6;opacity:.38"></div><div class="a" style="left:1191px;top:196px;width:5px;height:2px;background:#569cd6;opacity:.38"></div><div class="a" style="left:1197px;top:196px;width:1px;height:2px;background:#da70d6;opacity:.38"></div><div class="a" style="left:1198px;top:196px;width:1px;height:2px;background:#d4d4d4;opacity:.38"></div><div class="a" style="left:1199px;top:196px;width:1px;height:2px;background:#da70d6;opacity:.38"></div><div class="a" style="left:1201px;top:196px;width:1px;height:2px;background:#da70d6;opacity:.38"></div><div class="a" style="left:1191px;top:198px;width:12px;height:2px;background:#d4d4d4;opacity:.38"></div><div class="a" style="left:1203px;top:198px;width:1px;height:2px;background:#179fff;opacity:.38"></div><div class="a" style="left:1204px;top:198px;width:7px;height:2px;background:#ce9178;opacity:.38"></div><div class="a" style="left:1212px;top:198px;width:7px;height:2px;background:#ce9178;opacity:.38"></div><div class="a" style="left:1220px;top:198px;width:4px;height:2px;background:#ce9178;opacity:.38"></div><div class="a" style="left:1225px;top:198px;width:2px;height:2px;background:#ce9178;opacity:.38"></div><div class="a" style="left:1228px;top:198px;width:5px;height:2px;background:#ce9178;opacity:.38"></div><div class="a" style="left:1234px;top:198px;width:2px;height:2px;background:#ffd700;opacity:.38"></div><div class="a" style="left:1236px;top:198px;width:1px;height:2px;background:#d4d4d4;opacity:.38"></div><div class="a" style="left:1237px;top:198px;width:1px;height:2px;background:#ffd700;opacity:.38"></div><div class="a" style="left:1238px;top:198px;width:1px;height:2px;background:#ce9178;opacity:.38"></div><div class="a" style="left:1239px;top:198px;width:1px;height:2px;background:#179fff;opacity:.38"></div><div class="a" style="left:1240px;top:198px;width:1px;height:2px;background:#d4d4d4;opacity:.38"></div><div class="a" style="left:1191px;top:200px;width:5px;height:2px;background:#569cd6;opacity:.38"></div><div class="a" style="left:1197px;top:200px;width:2px;height:2px;background:#d4d4d4;opacity:.38"></div><div class="a" style="left:1189px;top:202px;width:1px;height:2px;background:#da70d6;opacity:.38"></div><div class="a" style="left:1189px;top:206px;width:12px;height:2px;background:#d4d4d4;opacity:.38"></div><div class="a" style="left:1201px;top:206px;width:1px;height:2px;background:#da70d6;opacity:.38"></div><div class="a" style="left:1202px;top:206px;width:8px;height:2px;background:#ce9178;opacity:.38"></div><div class="a" style="left:1211px;top:206px;width:4px;height:2px;background:#ce9178;opacity:.38"></div><div class="a" style="left:1216px;top:206px;width:3px;height:2px;background:#ce9178;opacity:.38"></div><div class="a" style="left:1220px;top:206px;width:4px;height:2px;background:#ce9178;opacity:.38"></div><div class="a" style="left:1225px;top:206px;width:2px;height:2px;background:#179fff;opacity:.38"></div><div class="a" style="left:1227px;top:206px;width:6px;height:2px;background:#d4d4d4;opacity:.38"></div><div class="a" style="left:1233px;top:206px;width:1px;height:2px;background:#179fff;opacity:.38"></div><div class="a" style="left:1234px;top:206px;width:1px;height:2px;background:#ce9178;opacity:.38"></div><div class="a" style="left:1235px;top:206px;width:1px;height:2px;background:#da70d6;opacity:.38"></div><div class="a" style="left:1236px;top:206px;width:1px;height:2px;background:#d4d4d4;opacity:.38"></div><div class="a" style="left:1189px;top:210px;width:3px;height:2px;background:#569cd6;opacity:.38"></div><div class="a" style="left:1193px;top:210px;width:6px;height:2px;background:#d4d4d4;opacity:.38"></div><div class="a" style="left:1189px;top:212px;width:3px;height:2px;background:#569cd6;opacity:.38"></div><div class="a" style="left:1193px;top:212px;width:1px;height:2px;background:#da70d6;opacity:.38"></div><div class="a" style="left:1191px;top:214px;width:5px;height:2px;background:#d4d4d4;opacity:.38"></div><div class="a" style="left:1197px;top:214px;width:1px;height:2px;background:#d4d4d4;opacity:.38"></div><div class="a" style="left:1199px;top:214px;width:5px;height:2px;background:#569cd6;opacity:.38"></div><div class="a" style="left:1205px;top:214px;width:14px;height:2px;background:#d4d4d4;opacity:.38"></div><div class="a" style="left:1219px;top:214px;width:2px;height:2px;background:#179fff;opacity:.38"></div><div class="a" style="left:1221px;top:214px;width:1px;height:2px;background:#d4d4d4;opacity:.38"></div><div class="a" style="left:1191px;top:216px;width:12px;height:2px;background:#d4d4d4;opacity:.38"></div><div class="a" style="left:1203px;top:216px;width:1px;height:2px;background:#179fff;opacity:.38"></div><div class="a" style="left:1204px;top:216px;width:13px;height:2px;background:#ce9178;opacity:.38"></div><div class="a" style="left:1218px;top:216px;width:9px;height:2px;background:#ce9178;opacity:.38"></div><div class="a" style="left:1228px;top:216px;width:2px;height:2px;background:#ce9178;opacity:.38"></div><div class="a" style="left:1231px;top:216px;width:5px;height:2px;background:#ce9178;opacity:.38"></div><div class="a" style="left:1237px;top:216px;width:3px;height:2px;background:#ce9178;opacity:.38"></div><div class="a" style="left:1241px;top:216px;width:17px;height:2px;background:#ce9178;opacity:.38"></div><div class="a" style="left:1258px;top:216px;width:1px;height:2px;background:#179fff;opacity:.38"></div><div class="a" style="left:1259px;top:216px;width:1px;height:2px;background:#d4d4d4;opacity:.38"></div><div class="a" style="left:1189px;top:218px;width:1px;height:2px;background:#da70d6;opacity:.38"></div><div class="a" style="left:1191px;top:218px;width:5px;height:2px;background:#569cd6;opacity:.38"></div><div class="a" style="left:1197px;top:218px;width:1px;height:2px;background:#da70d6;opacity:.38"></div><div class="a" style="left:1198px;top:218px;width:1px;height:2px;background:#d4d4d4;opacity:.38"></div><div class="a" style="left:1199px;top:218px;width:1px;height:2px;background:#da70d6;opacity:.38"></div><div class="a" style="left:1201px;top:218px;width:1px;height:2px;background:#da70d6;opacity:.38"></div><div class="a" style="left:1191px;top:220px;width:12px;height:2px;background:#d4d4d4;opacity:.38"></div><div class="a" style="left:1203px;top:220px;width:1px;height:2px;background:#179fff;opacity:.38"></div><div class="a" style="left:1204px;top:220px;width:6px;height:2px;background:#ce9178;opacity:.38"></div><div class="a" style="left:1211px;top:220px;width:7px;height:2px;background:#ce9178;opacity:.38"></div><div class="a" style="left:1219px;top:220px;width:4px;height:2px;background:#ce9178;opacity:.38"></div><div class="a" style="left:1224px;top:220px;width:5px;height:2px;background:#ce9178;opacity:.38"></div><div class="a" style="left:1230px;top:220px;width:2px;height:2px;background:#ffd700;opacity:.38"></div><div class="a" style="left:1232px;top:220px;width:1px;height:2px;background:#d4d4d4;opacity:.38"></div><div class="a" style="left:1233px;top:220px;width:1px;height:2px;background:#ffd700;opacity:.38"></div><div class="a" style="left:1234px;top:220px;width:1px;height:2px;background:#ce9178;opacity:.38"></div><div class="a" style="left:1235px;top:220px;width:1px;height:2px;background:#179fff;opacity:.38"></div><div class="a" style="left:1236px;top:220px;width:1px;height:2px;background:#d4d4d4;opacity:.38"></div><div class="a" style="left:1191px;top:222px;width:5px;height:2px;background:#569cd6;opacity:.38"></div><div class="a" style="left:1197px;top:222px;width:2px;height:2px;background:#d4d4d4;opacity:.38"></div><div class="a" style="left:1189px;top:224px;width:1px;height:2px;background:#da70d6;opacity:.38"></div><div class="a" style="left:1189px;top:228px;width:2px;height:2px;background:#6a9955;opacity:.38"></div><div class="a" style="left:1192px;top:228px;width:7px;height:2px;background:#6a9955;opacity:.38"></div><div class="a" style="left:1200px;top:228px;width:4px;height:2px;background:#6a9955;opacity:.38"></div><div class="a" style="left:1205px;top:228px;width:5px;height:2px;background:#6a9955;opacity:.38"></div><div class="a" style="left:1211px;top:228px;width:3px;height:2px;background:#6a9955;opacity:.38"></div><div class="a" style="left:1215px;top:228px;width:5px;height:2px;background:#6a9955;opacity:.38"></div><div class="a" style="left:1221px;top:228px;width:3px;height:2px;background:#6a9955;opacity:.38"></div><div class="a" style="left:1225px;top:228px;width:6px;height:2px;background:#6a9955;opacity:.38"></div><div class="a" style="left:1189px;top:230px;width:3px;height:2px;background:#569cd6;opacity:.38"></div><div class="a" style="left:1193px;top:230px;width:1px;height:2px;background:#da70d6;opacity:.38"></div><div class="a" style="left:1194px;top:230px;width:5px;height:2px;background:#569cd6;opacity:.38"></div><div class="a" style="left:1200px;top:230px;width:5px;height:2px;background:#d4d4d4;opacity:.38"></div><div class="a" style="left:1206px;top:230px;width:2px;height:2px;background:#569cd6;opacity:.38"></div><div class="a" style="left:1209px;top:230px;width:4px;height:2px;background:#d4d4d4;opacity:.38"></div><div class="a" style="left:1213px;top:230px;width:1px;height:2px;background:#da70d6;opacity:.38"></div><div class="a" style="left:1215px;top:230px;width:1px;height:2px;background:#da70d6;opacity:.38"></div><div class="a" style="left:1191px;top:232px;width:2px;height:2px;background:#569cd6;opacity:.38"></div><div class="a" style="left:1194px;top:232px;width:1px;height:2px;background:#179fff;opacity:.38"></div><div class="a" style="left:1195px;top:232px;width:17px;height:2px;background:#d4d4d4;opacity:.38"></div><div class="a" style="left:1212px;top:232px;width:1px;height:2px;background:#179fff;opacity:.38"></div><div class="a" style="left:1214px;top:232px;width:9px;height:2px;background:#d4d4d4;opacity:.38"></div><div class="a" style="left:1191px;top:234px;width:11px;height:2px;background:#d4d4d4;opacity:.38"></div><div class="a" style="left:1202px;top:234px;width:1px;height:2px;background:#179fff;opacity:.38"></div><div class="a" style="left:1203px;top:234px;width:5px;height:2px;background:#d4d4d4;opacity:.38"></div><div class="a" style="left:1208px;top:234px;width:1px;height:2px;background:#179fff;opacity:.38"></div><div class="a" style="left:1209px;top:234px;width:1px;height:2px;background:#d4d4d4;opacity:.38"></div><div class="a" style="left:1189px;top:236px;width:1px;height:2px;background:#da70d6;opacity:.38"></div><div class="a" style="left:1189px;top:240px;width:6px;height:2px;background:#569cd6;opacity:.38"></div><div class="a" style="left:1196px;top:240px;width:7px;height:2px;background:#d4d4d4;opacity:.38"></div><div class="a" style="left:1187px;top:242px;width:1px;height:2px;background:#ffd700;opacity:.38"></div><div class="a" style="left:1188px;top:242px;width:1px;height:2px;background:#d4d4d4;opacity:.38"></div><div class="a" style="left:1187px;top:246px;width:6px;height:2px;background:#569cd6;opacity:.38"></div><div class="a" style="left:1194px;top:246px;width:5px;height:2px;background:#569cd6;opacity:.38"></div><div class="a" style="left:1200px;top:246px;width:15px;height:2px;background:#d4d4d4;opacity:.38"></div><div class="a" style="left:1216px;top:246px;width:1px;height:2px;background:#d4d4d4;opacity:.38"></div><div class="a" style="left:1218px;top:246px;width:5px;height:2px;background:#569cd6;opacity:.38"></div><div class="a" style="left:1224px;top:246px;width:1px;height:2px;background:#ffd700;opacity:.38"></div><div class="a" style="left:1225px;top:246px;width:7px;height:2px;background:#d4d4d4;opacity:.38"></div><div class="a" style="left:1233px;top:246px;width:9px;height:2px;background:#d4d4d4;opacity:.38"></div><div class="a" style="left:1242px;top:246px;width:1px;height:2px;background:#ffd700;opacity:.38"></div><div class="a" style="left:1244px;top:246px;width:2px;height:2px;background:#569cd6;opacity:.38"></div><div class="a" style="left:1247px;top:246px;width:1px;height:2px;background:#ffd700;opacity:.38"></div><div class="a" style="left:1189px;top:248px;width:12px;height:2px;background:#d4d4d4;opacity:.38"></div><div class="a" style="left:1201px;top:248px;width:1px;height:2px;background:#da70d6;opacity:.38"></div><div class="a" style="left:1202px;top:248px;width:8px;height:2px;background:#ce9178;opacity:.38"></div><div class="a" style="left:1211px;top:248px;width:4px;height:2px;background:#ce9178;opacity:.38"></div><div class="a" style="left:1216px;top:248px;width:3px;height:2px;background:#ce9178;opacity:.38"></div><div class="a" style="left:1220px;top:248px;width:4px;height:2px;background:#ce9178;opacity:.38"></div><div class="a" style="left:1225px;top:248px;width:2px;height:2px;background:#179fff;opacity:.38"></div><div class="a" style="left:1227px;top:248px;width:6px;height:2px;background:#d4d4d4;opacity:.38"></div><div class="a" style="left:1233px;top:248px;width:1px;height:2px;background:#179fff;opacity:.38"></div><div class="a" style="left:1234px;top:248px;width:1px;height:2px;background:#ce9178;opacity:.38"></div><div class="a" style="left:1235px;top:248px;width:1px;height:2px;background:#da70d6;opacity:.38"></div><div class="a" style="left:1236px;top:248px;width:1px;height:2px;background:#d4d4d4;opacity:.38"></div><div class="a" style="left:1189px;top:252px;width:3px;height:2px;background:#569cd6;opacity:.38"></div><div class="a" style="left:1193px;top:252px;width:6px;height:2px;background:#d4d4d4;opacity:.38"></div><div class="a" style="left:1189px;top:254px;width:3px;height:2px;background:#569cd6;opacity:.38"></div><div class="a" style="left:1193px;top:254px;width:1px;height:2px;background:#da70d6;opacity:.38"></div><div class="a" style="left:1191px;top:256px;width:5px;height:2px;background:#d4d4d4;opacity:.38"></div><div class="a" style="left:1197px;top:256px;width:1px;height:2px;background:#d4d4d4;opacity:.38"></div><div class="a" style="left:1199px;top:256px;width:5px;height:2px;background:#569cd6;opacity:.38"></div><div class="a" style="left:1205px;top:256px;width:14px;height:2px;background:#d4d4d4;opacity:.38"></div><div class="a" style="left:1219px;top:256px;width:2px;height:2px;background:#179fff;opacity:.38"></div><div class="a" style="left:1221px;top:256px;width:1px;height:2px;background:#d4d4d4;opacity:.38"></div><div class="a" style="left:1191px;top:258px;width:12px;height:2px;background:#d4d4d4;opacity:.38"></div><div class="a" style="left:1203px;top:258px;width:1px;height:2px;background:#179fff;opacity:.38"></div><div class="a" style="left:1204px;top:258px;width:13px;height:2px;background:#ce9178;opacity:.38"></div><div class="a" style="left:1218px;top:258px;width:9px;height:2px;background:#ce9178;opacity:.38"></div><div class="a" style="left:1228px;top:258px;width:2px;height:2px;background:#ce9178;opacity:.38"></div><div class="a" style="left:1231px;top:258px;width:5px;height:2px;background:#ce9178;opacity:.38"></div><div class="a" style="left:1237px;top:258px;width:3px;height:2px;background:#ce9178;opacity:.38"></div><div class="a" style="left:1241px;top:258px;width:17px;height:2px;background:#ce9178;opacity:.38"></div><div class="a" style="left:1258px;top:258px;width:1px;height:2px;background:#179fff;opacity:.38"></div><div class="a" style="left:1259px;top:258px;width:1px;height:2px;background:#d4d4d4;opacity:.38"></div><div class="a" style="left:1189px;top:260px;width:1px;height:2px;background:#da70d6;opacity:.38"></div><div class="a" style="left:1191px;top:260px;width:5px;height:2px;background:#569cd6;opacity:.38"></div><div class="a" style="left:1197px;top:260px;width:1px;height:2px;background:#da70d6;opacity:.38"></div><div class="a" style="left:1198px;top:260px;width:1px;height:2px;background:#d4d4d4;opacity:.38"></div><div class="a" style="left:1199px;top:260px;width:1px;height:2px;background:#da70d6;opacity:.38"></div><div class="a" style="left:1201px;top:260px;width:1px;height:2px;background:#da70d6;opacity:.38"></div><div class="a" style="left:1191px;top:262px;width:12px;height:2px;background:#d4d4d4;opacity:.38"></div><div class="a" style="left:1203px;top:262px;width:1px;height:2px;background:#179fff;opacity:.38"></div><div class="a" style="left:1204px;top:262px;width:6px;height:2px;background:#ce9178;opacity:.38"></div><div class="a" style="left:1211px;top:262px;width:7px;height:2px;background:#ce9178;opacity:.38"></div><div class="a" style="left:1219px;top:262px;width:4px;height:2px;background:#ce9178;opacity:.38"></div><div class="a" style="left:1224px;top:262px;width:5px;height:2px;background:#ce9178;opacity:.38"></div><div class="a" style="left:1230px;top:262px;width:2px;height:2px;background:#ffd700;opacity:.38"></div><div class="a" style="left:1232px;top:262px;width:1px;height:2px;background:#d4d4d4;opacity:.38"></div><div class="a" style="left:1233px;top:262px;width:1px;height:2px;background:#ffd700;opacity:.38"></div><div class="a" style="left:1234px;top:262px;width:1px;height:2px;background:#ce9178;opacity:.38"></div><div class="a" style="left:1235px;top:262px;width:1px;height:2px;background:#179fff;opacity:.38"></div><div class="a" style="left:1236px;top:262px;width:1px;height:2px;background:#d4d4d4;opacity:.38"></div><div class="a" style="left:1191px;top:264px;width:5px;height:2px;background:#569cd6;opacity:.38"></div><div class="a" style="left:1197px;top:264px;width:2px;height:2px;background:#d4d4d4;opacity:.38"></div><div class="a" style="left:1189px;top:266px;width:1px;height:2px;background:#da70d6;opacity:.38"></div><div class="a" style="left:1189px;top:270px;width:2px;height:2px;background:#569cd6;opacity:.38"></div><div class="a" style="left:1192px;top:270px;width:1px;height:2px;background:#da70d6;opacity:.38"></div><div class="a" style="left:1193px;top:270px;width:9px;height:2px;background:#d4d4d4;opacity:.38"></div><div class="a" style="left:1203px;top:270px;width:2px;height:2px;background:#d4d4d4;opacity:.38"></div><div class="a" style="left:1206px;top:270px;width:15px;height:2px;background:#d4d4d4;opacity:.38"></div><div class="a" style="left:1222px;top:270px;width:3px;height:2px;background:#d4d4d4;opacity:.38"></div><div class="a" style="left:1226px;top:270px;width:1px;height:2px;background:#b5cea8;opacity:.38"></div><div class="a" style="left:1227px;top:270px;width:1px;height:2px;background:#da70d6;opacity:.38"></div><div class="a" style="left:1229px;top:270px;width:1px;height:2px;background:#da70d6;opacity:.38"></div><div class="a" style="left:1191px;top:272px;width:12px;height:2px;background:#d4d4d4;opacity:.38"></div><div class="a" style="left:1203px;top:272px;width:1px;height:2px;background:#179fff;opacity:.38"></div><div class="a" style="left:1204px;top:272px;width:3px;height:2px;background:#ce9178;opacity:.38"></div><div class="a" style="left:1208px;top:272px;width:8px;height:2px;background:#ce9178;opacity:.38"></div><div class="a" style="left:1217px;top:272px;width:2px;height:2px;background:#ce9178;opacity:.38"></div><div class="a" style="left:1220px;top:272px;width:8px;height:2px;background:#ce9178;opacity:.38"></div><div class="a" style="left:1229px;top:272px;width:8px;height:2px;background:#ce9178;opacity:.38"></div><div class="a" style="left:1238px;top:272px;width:5px;height:2px;background:#ce9178;opacity:.38"></div><div class="a" style="left:1244px;top:272px;width:10px;height:2px;background:#ce9178;opacity:.38"></div><div class="a" style="left:1254px;top:272px;width:1px;height:2px;background:#179fff;opacity:.38"></div><div class="a" style="left:1255px;top:272px;width:1px;height:2px;background:#d4d4d4;opacity:.38"></div><div class="a" style="left:1191px;top:274px;width:6px;height:2px;background:#569cd6;opacity:.38"></div><div class="a" style="left:1197px;top:274px;width:1px;height:2px;background:#d4d4d4;opacity:.38"></div><div class="a" style="left:1189px;top:276px;width:1px;height:2px;background:#da70d6;opacity:.38"></div><div class="a" style="left:1189px;top:280px;width:3px;height:2px;background:#569cd6;opacity:.38"></div><div class="a" style="left:1193px;top:280px;width:1px;height:2px;background:#da70d6;opacity:.38"></div><div class="a" style="left:1191px;top:282px;width:2px;height:2px;background:#6a9955;opacity:.38"></div><div class="a" style="left:1194px;top:282px;width:6px;height:2px;background:#6a9955;opacity:.38"></div><div class="a" style="left:1201px;top:282px;width:2px;height:2px;background:#6a9955;opacity:.38"></div><div class="a" style="left:1204px;top:282px;width:5px;height:2px;background:#6a9955;opacity:.38"></div><div class="a" style="left:1210px;top:282px;width:2px;height:2px;background:#6a9955;opacity:.38"></div><div class="a" style="left:1213px;top:282px;width:8px;height:2px;background:#6a9955;opacity:.38"></div><div class="a" style="left:1222px;top:282px;width:3px;height:2px;background:#6a9955;opacity:.38"></div><div class="a" style="left:1226px;top:282px;width:5px;height:2px;background:#6a9955;opacity:.38"></div><div class="a" style="left:1232px;top:282px;width:3px;height:2px;background:#6a9955;opacity:.38"></div><div class="a" style="left:1236px;top:282px;width:10px;height:2px;background:#6a9955;opacity:.38"></div><div class="a" style="left:1191px;top:284px;width:5px;height:2px;background:#569cd6;opacity:.38"></div><div class="a" style="left:1197px;top:284px;width:8px;height:2px;background:#d4d4d4;opacity:.38"></div><div class="a" style="left:1206px;top:284px;width:1px;height:2px;background:#d4d4d4;opacity:.38"></div><div class="a" style="left:1208px;top:284px;width:12px;height:2px;background:#d4d4d4;opacity:.38"></div><div class="a" style="left:1220px;top:284px;width:1px;height:2px;background:#179fff;opacity:.38"></div><div class="a" style="left:1221px;top:284px;width:1px;height:2px;background:#ffd700;opacity:.38"></div><div class="a" style="left:1222px;top:284px;width:7px;height:2px;background:#d4d4d4;opacity:.38"></div><div class="a" style="left:1229px;top:284px;width:1px;height:2px;background:#ffd700;opacity:.38"></div><div class="a" style="left:1231px;top:284px;width:2px;height:2px;background:#569cd6;opacity:.38"></div><div class="a" style="left:1234px;top:284px;width:1px;height:2px;background:#ffd700;opacity:.38"></div><div class="a" style="left:1193px;top:286px;width:5px;height:2px;background:#569cd6;opacity:.38"></div><div class="a" style="left:1199px;top:286px;width:3px;height:2px;background:#d4d4d4;opacity:.38"></div><div class="a" style="left:1203px;top:286px;width:1px;height:2px;background:#d4d4d4;opacity:.38"></div><div class="a" style="left:1205px;top:286px;width:10px;height:2px;background:#ce9178;opacity:.38"></div><div class="a" style="left:1215px;top:286px;width:2px;height:2px;background:#da70d6;opacity:.38"></div><div class="a" style="left:1217px;top:286px;width:6px;height:2px;background:#d4d4d4;opacity:.38"></div><div class="a" style="left:1223px;top:286px;width:1px;height:2px;background:#da70d6;opacity:.38"></div><div class="a" style="left:1224px;top:286px;width:1px;height:2px;background:#ce9178;opacity:.38"></div><div class="a" style="left:1225px;top:286px;width:2px;height:2px;background:#da70d6;opacity:.38"></div><div class="a" style="left:1227px;top:286px;width:10px;height:2px;background:#d4d4d4;opacity:.38"></div><div class="a" style="left:1237px;top:286px;width:1px;height:2px;background:#da70d6;opacity:.38"></div><div class="a" style="left:1238px;top:286px;width:1px;height:2px;background:#ce9178;opacity:.38"></div><div class="a" style="left:1239px;top:286px;width:1px;height:2px;background:#d4d4d4;opacity:.38"></div><div class="a" style="left:1193px;top:288px;width:12px;height:2px;background:#d4d4d4;opacity:.38"></div><div class="a" style="left:1205px;top:288px;width:1px;height:2px;background:#da70d6;opacity:.38"></div><div class="a" style="left:1206px;top:288px;width:8px;height:2px;background:#ce9178;opacity:.38"></div><div class="a" style="left:1215px;top:288px;width:3px;height:2px;background:#ce9178;opacity:.38"></div><div class="a" style="left:1219px;top:288px;width:4px;height:2px;background:#ce9178;opacity:.38"></div><div class="a" style="left:1224px;top:288px;width:3px;height:2px;background:#ce9178;opacity:.38"></div><div class="a" style="left:1228px;top:288px;width:3px;height:2px;background:#ce9178;opacity:.38"></div><div class="a" style="left:1232px;top:288px;width:2px;height:2px;background:#179fff;opacity:.38"></div><div class="a" style="left:1234px;top:288px;width:3px;height:2px;background:#d4d4d4;opacity:.38"></div><div class="a" style="left:1237px;top:288px;width:1px;height:2px;background:#179fff;opacity:.38"></div><div class="a" style="left:1238px;top:288px;width:1px;height:2px;background:#ce9178;opacity:.38"></div><div class="a" style="left:1239px;top:288px;width:1px;height:2px;background:#da70d6;opacity:.38"></div><div class="a" style="left:1240px;top:288px;width:1px;height:2px;background:#d4d4d4;opacity:.38"></div><div class="a" style="left:1193px;top:290px;width:6px;height:2px;background:#569cd6;opacity:.38"></div><div class="a" style="left:1200px;top:290px;width:11px;height:2px;background:#d4d4d4;opacity:.38"></div><div class="a" style="left:1211px;top:290px;width:1px;height:2px;background:#da70d6;opacity:.38"></div><div class="a" style="left:1212px;top:290px;width:4px;height:2px;background:#d4d4d4;opacity:.38"></div><div class="a" style="left:1217px;top:290px;width:4px;height:2px;background:#d4d4d4;opacity:.38"></div><div class="a" style="left:1222px;top:290px;width:14px;height:2px;background:#d4d4d4;opacity:.38"></div><div class="a" style="left:1236px;top:290px;width:1px;height:2px;background:#179fff;opacity:.38"></div><div class="a" style="left:1237px;top:290px;width:7px;height:2px;background:#d4d4d4;opacity:.38"></div><div class="a" style="left:1244px;top:290px;width:1px;height:2px;background:#179fff;opacity:.38"></div><div class="a" style="left:1245px;top:290px;width:1px;height:2px;background:#da70d6;opacity:.38"></div><div class="a" style="left:1246px;top:290px;width:1px;height:2px;background:#d4d4d4;opacity:.38"></div><div class="a" style="left:1191px;top:292px;width:1px;height:2px;background:#ffd700;opacity:.38"></div><div class="a" style="left:1192px;top:292px;width:1px;height:2px;background:#179fff;opacity:.38"></div><div class="a" style="left:1193px;top:292px;width:1px;height:2px;background:#d4d4d4;opacity:.38"></div><div class="a" style="left:1191px;top:296px;width:5px;height:2px;background:#569cd6;opacity:.38"></div><div class="a" style="left:1197px;top:296px;width:11px;height:2px;background:#d4d4d4;opacity:.38"></div><div class="a" style="left:1208px;top:296px;width:1px;height:2px;background:#179fff;opacity:.38"></div><div class="a" style="left:1209px;top:296px;width:8px;height:2px;background:#d4d4d4;opacity:.38"></div><div class="a" style="left:1217px;top:296px;width:1px;height:2px;background:#179fff;opacity:.38"></div><div class="a" style="left:1218px;top:296px;width:1px;height:2px;background:#d4d4d4;opacity:.38"></div><div class="a" style="left:1191px;top:298px;width:12px;height:2px;background:#d4d4d4;opacity:.38"></div><div class="a" style="left:1203px;top:298px;width:1px;height:2px;background:#179fff;opacity:.38"></div><div class="a" style="left:1204px;top:298px;width:7px;height:2px;background:#ce9178;opacity:.38"></div><div class="a" style="left:1212px;top:298px;width:2px;height:2px;background:#ffd700;opacity:.38"></div><div class="a" style="left:1214px;top:298px;width:15px;height:2px;background:#d4d4d4;opacity:.38"></div><div class="a" style="left:1229px;top:298px;width:1px;height:2px;background:#ffd700;opacity:.38"></div><div class="a" style="left:1231px;top:298px;width:7px;height:2px;background:#ce9178;opacity:.38"></div><div class="a" style="left:1239px;top:298px;width:2px;height:2px;background:#ce9178;opacity:.38"></div><div class="a" style="left:1242px;top:298px;width:6px;height:2px;background:#ce9178;opacity:.38"></div><div class="a" style="left:1248px;top:298px;width:1px;height:2px;background:#179fff;opacity:.38"></div><div class="a" style="left:1249px;top:298px;width:1px;height:2px;background:#d4d4d4;opacity:.38"></div><div class="a" style="left:1189px;top:300px;width:1px;height:2px;background:#da70d6;opacity:.38"></div><div class="a" style="left:1191px;top:300px;width:5px;height:2px;background:#569cd6;opacity:.38"></div><div class="a" style="left:1197px;top:300px;width:1px;height:2px;background:#da70d6;opacity:.38"></div><div class="a" style="left:1198px;top:300px;width:1px;height:2px;background:#d4d4d4;opacity:.38"></div><div class="a" style="left:1199px;top:300px;width:1px;height:2px;background:#da70d6;opacity:.38"></div><div class="a" style="left:1201px;top:300px;width:1px;height:2px;background:#da70d6;opacity:.38"></div><div class="a" style="left:1191px;top:302px;width:12px;height:2px;background:#d4d4d4;opacity:.38"></div><div class="a" style="left:1203px;top:302px;width:1px;height:2px;background:#179fff;opacity:.38"></div><div class="a" style="left:1204px;top:302px;width:7px;height:2px;background:#ce9178;opacity:.38"></div><div class="a" style="left:1212px;top:302px;width:7px;height:2px;background:#ce9178;opacity:.38"></div><div class="a" style="left:1220px;top:302px;width:4px;height:2px;background:#ce9178;opacity:.38"></div><div class="a" style="left:1225px;top:302px;width:2px;height:2px;background:#ce9178;opacity:.38"></div><div class="a" style="left:1228px;top:302px;width:5px;height:2px;background:#ce9178;opacity:.38"></div><div class="a" style="left:1234px;top:302px;width:2px;height:2px;background:#ffd700;opacity:.38"></div><div class="a" style="left:1236px;top:302px;width:1px;height:2px;background:#d4d4d4;opacity:.38"></div><div class="a" style="left:1237px;top:302px;width:1px;height:2px;background:#ffd700;opacity:.38"></div><div class="a" style="left:1238px;top:302px;width:1px;height:2px;background:#ce9178;opacity:.38"></div><div class="a" style="left:1239px;top:302px;width:1px;height:2px;background:#179fff;opacity:.38"></div><div class="a" style="left:1240px;top:302px;width:1px;height:2px;background:#d4d4d4;opacity:.38"></div><div class="a" style="left:1191px;top:304px;width:5px;height:2px;background:#569cd6;opacity:.38"></div><div class="a" style="left:1197px;top:304px;width:2px;height:2px;background:#d4d4d4;opacity:.38"></div><div class="a" style="left:1189px;top:306px;width:1px;height:2px;background:#da70d6;opacity:.38"></div><div class="a" style="left:1187px;top:308px;width:1px;height:2px;background:#ffd700;opacity:.38"></div><div class="a" style="left:1188px;top:308px;width:1px;height:2px;background:#d4d4d4;opacity:.38"></div><div class="a" style="left:1187px;top:312px;width:6px;height:2px;background:#569cd6;opacity:.38"></div><div class="a" style="left:1194px;top:312px;width:5px;height:2px;background:#569cd6;opacity:.38"></div><div class="a" style="left:1200px;top:312px;width:18px;height:2px;background:#d4d4d4;opacity:.38"></div><div class="a" style="left:1219px;top:312px;width:1px;height:2px;background:#d4d4d4;opacity:.38"></div><div class="a" style="left:1221px;top:312px;width:5px;height:2px;background:#569cd6;opacity:.38"></div><div class="a" style="left:1227px;top:312px;width:1px;height:2px;background:#ffd700;opacity:.38"></div><div class="a" style="left:1228px;top:312px;width:7px;height:2px;background:#d4d4d4;opacity:.38"></div><div class="a" style="left:1236px;top:312px;width:9px;height:2px;background:#d4d4d4;opacity:.38"></div><div class="a" style="left:1245px;top:312px;width:1px;height:2px;background:#ffd700;opacity:.38"></div><div class="a" style="left:1247px;top:312px;width:2px;height:2px;background:#569cd6;opacity:.38"></div><div class="a" style="left:1250px;top:312px;width:1px;height:2px;background:#ffd700;opacity:.38"></div><div class="a" style="left:1189px;top:314px;width:12px;height:2px;background:#d4d4d4;opacity:.38"></div><div class="a" style="left:1201px;top:314px;width:1px;height:2px;background:#da70d6;opacity:.38"></div><div class="a" style="left:1202px;top:314px;width:8px;height:2px;background:#ce9178;opacity:.38"></div><div class="a" style="left:1211px;top:314px;width:4px;height:2px;background:#ce9178;opacity:.38"></div><div class="a" style="left:1216px;top:314px;width:3px;height:2px;background:#ce9178;opacity:.38"></div><div class="a" style="left:1220px;top:314px;width:4px;height:2px;background:#ce9178;opacity:.38"></div><div class="a" style="left:1225px;top:314px;width:2px;height:2px;background:#179fff;opacity:.38"></div><div class="a" style="left:1227px;top:314px;width:6px;height:2px;background:#d4d4d4;opacity:.38"></div><div class="a" style="left:1233px;top:314px;width:1px;height:2px;background:#179fff;opacity:.38"></div><div class="a" style="left:1234px;top:314px;width:1px;height:2px;background:#ce9178;opacity:.38"></div><div class="a" style="left:1235px;top:314px;width:1px;height:2px;background:#da70d6;opacity:.38"></div><div class="a" style="left:1236px;top:314px;width:1px;height:2px;background:#d4d4d4;opacity:.38"></div><div class="a" style="left:1189px;top:318px;width:3px;height:2px;background:#569cd6;opacity:.38"></div><div class="a" style="left:1193px;top:318px;width:6px;height:2px;background:#d4d4d4;opacity:.38"></div><div class="a" style="left:1189px;top:320px;width:3px;height:2px;background:#569cd6;opacity:.38"></div><div class="a" style="left:1193px;top:320px;width:1px;height:2px;background:#da70d6;opacity:.38"></div><div class="a" style="left:1191px;top:322px;width:5px;height:2px;background:#d4d4d4;opacity:.38"></div><div class="a" style="left:1197px;top:322px;width:1px;height:2px;background:#d4d4d4;opacity:.38"></div><div class="a" style="left:1199px;top:322px;width:5px;height:2px;background:#569cd6;opacity:.38"></div><div class="a" style="left:1205px;top:322px;width:14px;height:2px;background:#d4d4d4;opacity:.38"></div><div class="a" style="left:1219px;top:322px;width:2px;height:2px;background:#179fff;opacity:.38"></div><div class="a" style="left:1221px;top:322px;width:1px;height:2px;background:#d4d4d4;opacity:.38"></div><div class="a" style="left:1191px;top:324px;width:12px;height:2px;background:#d4d4d4;opacity:.38"></div><div class="a" style="left:1203px;top:324px;width:1px;height:2px;background:#179fff;opacity:.38"></div><div class="a" style="left:1204px;top:324px;width:13px;height:2px;background:#ce9178;opacity:.38"></div><div class="a" style="left:1218px;top:324px;width:9px;height:2px;background:#ce9178;opacity:.38"></div><div class="a" style="left:1228px;top:324px;width:2px;height:2px;background:#ce9178;opacity:.38"></div><div class="a" style="left:1231px;top:324px;width:5px;height:2px;background:#ce9178;opacity:.38"></div><div class="a" style="left:1237px;top:324px;width:3px;height:2px;background:#ce9178;opacity:.38"></div><div class="a" style="left:1241px;top:324px;width:17px;height:2px;background:#ce9178;opacity:.38"></div><div class="a" style="left:1258px;top:324px;width:1px;height:2px;background:#179fff;opacity:.38"></div><div class="a" style="left:1259px;top:324px;width:1px;height:2px;background:#d4d4d4;opacity:.38"></div><div class="a" style="left:1189px;top:326px;width:1px;height:2px;background:#da70d6;opacity:.38"></div><div class="a" style="left:1191px;top:326px;width:5px;height:2px;background:#569cd6;opacity:.38"></div><div class="a" style="left:1197px;top:326px;width:1px;height:2px;background:#da70d6;opacity:.38"></div><div class="a" style="left:1198px;top:326px;width:1px;height:2px;background:#d4d4d4;opacity:.38"></div><div class="a" style="left:1199px;top:326px;width:1px;height:2px;background:#da70d6;opacity:.38"></div><div class="a" style="left:1201px;top:326px;width:1px;height:2px;background:#da70d6;opacity:.38"></div><div class="a" style="left:1191px;top:328px;width:12px;height:2px;background:#d4d4d4;opacity:.38"></div><div class="a" style="left:1203px;top:328px;width:1px;height:2px;background:#179fff;opacity:.38"></div><div class="a" style="left:1204px;top:328px;width:6px;height:2px;background:#ce9178;opacity:.38"></div><div class="a" style="left:1211px;top:328px;width:7px;height:2px;background:#ce9178;opacity:.38"></div><div class="a" style="left:1219px;top:328px;width:4px;height:2px;background:#ce9178;opacity:.38"></div><div class="a" style="left:1224px;top:328px;width:5px;height:2px;background:#ce9178;opacity:.38"></div><div class="a" style="left:1230px;top:328px;width:2px;height:2px;background:#ffd700;opacity:.38"></div><div class="a" style="left:1232px;top:328px;width:1px;height:2px;background:#d4d4d4;opacity:.38"></div><div class="a" style="left:1233px;top:328px;width:1px;height:2px;background:#ffd700;opacity:.38"></div><div class="a" style="left:1234px;top:328px;width:1px;height:2px;background:#ce9178;opacity:.38"></div><div class="a" style="left:1235px;top:328px;width:1px;height:2px;background:#179fff;opacity:.38"></div><div class="a" style="left:1236px;top:328px;width:1px;height:2px;background:#d4d4d4;opacity:.38"></div><div class="a" style="left:1191px;top:330px;width:5px;height:2px;background:#569cd6;opacity:.38"></div><div class="a" style="left:1197px;top:330px;width:2px;height:2px;background:#d4d4d4;opacity:.38"></div><div class="a" style="left:1189px;top:332px;width:1px;height:2px;background:#da70d6;opacity:.38"></div><div class="a" style="left:1189px;top:336px;width:2px;height:2px;background:#569cd6;opacity:.38"></div><div class="a" style="left:1192px;top:336px;width:1px;height:2px;background:#da70d6;opacity:.38"></div><div class="a" style="left:1193px;top:336px;width:9px;height:2px;background:#d4d4d4;opacity:.38"></div><div class="a" style="left:1203px;top:336px;width:2px;height:2px;background:#d4d4d4;opacity:.38"></div><div class="a" style="left:1206px;top:336px;width:15px;height:2px;background:#d4d4d4;opacity:.38"></div><div class="a" style="left:1222px;top:336px;width:3px;height:2px;background:#d4d4d4;opacity:.38"></div><div class="a" style="left:1226px;top:336px;width:1px;height:2px;background:#b5cea8;opacity:.38"></div><div class="a" style="left:1227px;top:336px;width:1px;height:2px;background:#da70d6;opacity:.38"></div><div class="a" style="left:1229px;top:336px;width:1px;height:2px;background:#da70d6;opacity:.38"></div><div class="a" style="left:1191px;top:338px;width:12px;height:2px;background:#d4d4d4;opacity:.38"></div><div class="a" style="left:1203px;top:338px;width:1px;height:2px;background:#179fff;opacity:.38"></div><div class="a" style="left:1204px;top:338px;width:3px;height:2px;background:#ce9178;opacity:.38"></div><div class="a" style="left:1208px;top:338px;width:8px;height:2px;background:#ce9178;opacity:.38"></div><div class="a" style="left:1217px;top:338px;width:2px;height:2px;background:#ce9178;opacity:.38"></div><div class="a" style="left:1220px;top:338px;width:8px;height:2px;background:#ce9178;opacity:.38"></div><div class="a" style="left:1229px;top:338px;width:8px;height:2px;background:#ce9178;opacity:.38"></div><div class="a" style="left:1238px;top:338px;width:5px;height:2px;background:#ce9178;opacity:.38"></div><div class="a" style="left:1244px;top:338px;width:10px;height:2px;background:#ce9178;opacity:.38"></div><div class="a" style="left:1254px;top:338px;width:1px;height:2px;background:#179fff;opacity:.38"></div><div class="a" style="left:1255px;top:338px;width:1px;height:2px;background:#d4d4d4;opacity:.38"></div><div class="a" style="left:1191px;top:340px;width:6px;height:2px;background:#569cd6;opacity:.38"></div><div class="a" style="left:1197px;top:340px;width:1px;height:2px;background:#d4d4d4;opacity:.38"></div><div class="a" style="left:1189px;top:342px;width:1px;height:2px;background:#da70d6;opacity:.38"></div><div class="a" style="left:1189px;top:346px;width:2px;height:2px;background:#6a9955;opacity:.38"></div><div class="a" style="left:1192px;top:346px;width:7px;height:2px;background:#6a9955;opacity:.38"></div><div class="a" style="left:1200px;top:346px;width:4px;height:2px;background:#6a9955;opacity:.38"></div><div class="a" style="left:1205px;top:346px;width:5px;height:2px;background:#6a9955;opacity:.38"></div><div class="a" style="left:1211px;top:346px;width:3px;height:2px;background:#6a9955;opacity:.38"></div><div class="a" style="left:1215px;top:346px;width:5px;height:2px;background:#6a9955;opacity:.38"></div><div class="a" style="left:1221px;top:346px;width:3px;height:2px;background:#6a9955;opacity:.38"></div><div class="a" style="left:1225px;top:346px;width:6px;height:2px;background:#6a9955;opacity:.38"></div><div class="a" style="left:1189px;top:348px;width:3px;height:2px;background:#569cd6;opacity:.38"></div><div class="a" style="left:1193px;top:348px;width:1px;height:2px;background:#da70d6;opacity:.38"></div><div class="a" style="left:1194px;top:348px;width:5px;height:2px;background:#569cd6;opacity:.38"></div><div class="a" style="left:1200px;top:348px;width:5px;height:2px;background:#d4d4d4;opacity:.38"></div><div class="a" style="left:1206px;top:348px;width:2px;height:2px;background:#569cd6;opacity:.38"></div><div class="a" style="left:1209px;top:348px;width:4px;height:2px;background:#d4d4d4;opacity:.38"></div><div class="a" style="left:1213px;top:348px;width:1px;height:2px;background:#da70d6;opacity:.38"></div><div class="a" style="left:1215px;top:348px;width:1px;height:2px;background:#da70d6;opacity:.38"></div><div class="a" style="left:1191px;top:350px;width:2px;height:2px;background:#569cd6;opacity:.38"></div><div class="a" style="left:1194px;top:350px;width:1px;height:2px;background:#179fff;opacity:.38"></div><div class="a" style="left:1195px;top:350px;width:17px;height:2px;background:#d4d4d4;opacity:.38"></div><div class="a" style="left:1212px;top:350px;width:1px;height:2px;background:#179fff;opacity:.38"></div><div class="a" style="left:1214px;top:350px;width:9px;height:2px;background:#d4d4d4;opacity:.38"></div><div class="a" style="left:1191px;top:352px;width:11px;height:2px;background:#d4d4d4;opacity:.38"></div><div class="a" style="left:1202px;top:352px;width:1px;height:2px;background:#179fff;opacity:.38"></div><div class="a" style="left:1203px;top:352px;width:5px;height:2px;background:#d4d4d4;opacity:.38"></div><div class="a" style="left:1208px;top:352px;width:1px;height:2px;background:#179fff;opacity:.38"></div><div class="a" style="left:1209px;top:352px;width:1px;height:2px;background:#d4d4d4;opacity:.38"></div><div class="a" style="left:1189px;top:354px;width:1px;height:2px;background:#da70d6;opacity:.38"></div><div class="a" style="left:1189px;top:358px;width:6px;height:2px;background:#569cd6;opacity:.38"></div><div class="a" style="left:1196px;top:358px;width:7px;height:2px;background:#d4d4d4;opacity:.38"></div><div class="a" style="left:1187px;top:360px;width:1px;height:2px;background:#ffd700;opacity:.38"></div><div class="a" style="left:1188px;top:360px;width:1px;height:2px;background:#d4d4d4;opacity:.38"></div><div class="a" style="left:1187px;top:364px;width:3px;height:2px;background:#d4d4d4;opacity:.38"></div><div class="a" style="left:1188px;top:366px;width:1px;height:2px;background:#d4d4d4;opacity:.38"></div><div class="a" style="left:1190px;top:366px;width:9px;height:2px;background:#d4d4d4;opacity:.38"></div><div class="a" style="left:1200px;top:366px;width:4px;height:2px;background:#d4d4d4;opacity:.38"></div><div class="a" style="left:1205px;top:366px;width:4px;height:2px;background:#569cd6;opacity:.38"></div><div class="a" style="left:1210px;top:366px;width:5px;height:2px;background:#d4d4d4;opacity:.38"></div><div class="a" style="left:1216px;top:366px;width:3px;height:2px;background:#d4d4d4;opacity:.38"></div><div class="a" style="left:1220px;top:366px;width:7px;height:2px;background:#d4d4d4;opacity:.38"></div><div class="a" style="left:1228px;top:366px;width:3px;height:2px;background:#d4d4d4;opacity:.38"></div><div class="a" style="left:1232px;top:366px;width:6px;height:2px;background:#d4d4d4;opacity:.38"></div><div class="a" style="left:1239px;top:366px;width:5px;height:2px;background:#d4d4d4;opacity:.38"></div><div class="a" style="left:1188px;top:368px;width:2px;height:2px;background:#d4d4d4;opacity:.38"></div><div class="a" style="left:1187px;top:370px;width:6px;height:2px;background:#569cd6;opacity:.38"></div><div class="a" style="left:1194px;top:370px;width:5px;height:2px;background:#569cd6;opacity:.38"></div><div class="a" style="left:1200px;top:370px;width:18px;height:2px;background:#d4d4d4;opacity:.38"></div><div class="a" style="left:1219px;top:370px;width:1px;height:2px;background:#d4d4d4;opacity:.38"></div><div class="a" style="left:1221px;top:370px;width:5px;height:2px;background:#569cd6;opacity:.38"></div><div class="a" style="left:1227px;top:370px;width:1px;height:2px;background:#ffd700;opacity:.38"></div><div class="a" style="left:1228px;top:370px;width:7px;height:2px;background:#d4d4d4;opacity:.38"></div><div class="a" style="left:1236px;top:370px;width:9px;height:2px;background:#d4d4d4;opacity:.38"></div><div class="a" style="left:1245px;top:370px;width:1px;height:2px;background:#ffd700;opacity:.38"></div><div class="a" style="left:1247px;top:370px;width:2px;height:2px;background:#569cd6;opacity:.38"></div><div class="a" style="left:1250px;top:370px;width:1px;height:2px;background:#ffd700;opacity:.38"></div><div class="a" style="left:1189px;top:372px;width:12px;height:2px;background:#d4d4d4;opacity:.38"></div><div class="a" style="left:1201px;top:372px;width:1px;height:2px;background:#da70d6;opacity:.38"></div><div class="a" style="left:1202px;top:372px;width:8px;height:2px;background:#ce9178;opacity:.38"></div><div class="a" style="left:1211px;top:372px;width:4px;height:2px;background:#ce9178;opacity:.38"></div><div class="a" style="left:1216px;top:372px;width:3px;height:2px;background:#ce9178;opacity:.38"></div><div class="a" style="left:1220px;top:372px;width:4px;height:2px;background:#ce9178;opacity:.38"></div><div class="a" style="left:1225px;top:372px;width:2px;height:2px;background:#179fff;opacity:.38"></div><div class="a" style="left:1227px;top:372px;width:6px;height:2px;background:#d4d4d4;opacity:.38"></div><div class="a" style="left:1233px;top:372px;width:1px;height:2px;background:#179fff;opacity:.38"></div><div class="a" style="left:1234px;top:372px;width:1px;height:2px;background:#ce9178;opacity:.38"></div><div class="a" style="left:1235px;top:372px;width:1px;height:2px;background:#da70d6;opacity:.38"></div><div class="a" style="left:1236px;top:372px;width:1px;height:2px;background:#d4d4d4;opacity:.38"></div><div class="a" style="left:1189px;top:376px;width:3px;height:2px;background:#569cd6;opacity:.38"></div><div class="a" style="left:1193px;top:376px;width:6px;height:2px;background:#d4d4d4;opacity:.38"></div><div class="a" style="left:1189px;top:378px;width:3px;height:2px;background:#569cd6;opacity:.38"></div><div class="a" style="left:1193px;top:378px;width:1px;height:2px;background:#da70d6;opacity:.38"></div><div class="a" style="left:1191px;top:380px;width:5px;height:2px;background:#d4d4d4;opacity:.38"></div><div class="a" style="left:1197px;top:380px;width:1px;height:2px;background:#d4d4d4;opacity:.38"></div><div class="a" style="left:1199px;top:380px;width:5px;height:2px;background:#569cd6;opacity:.38"></div><div class="a" style="left:1205px;top:380px;width:14px;height:2px;background:#d4d4d4;opacity:.38"></div><div class="a" style="left:1219px;top:380px;width:2px;height:2px;background:#179fff;opacity:.38"></div><div class="a" style="left:1221px;top:380px;width:1px;height:2px;background:#d4d4d4;opacity:.38"></div><div class="a" style="left:1191px;top:382px;width:12px;height:2px;background:#d4d4d4;opacity:.38"></div><div class="a" style="left:1203px;top:382px;width:1px;height:2px;background:#179fff;opacity:.38"></div><div class="a" style="left:1204px;top:382px;width:13px;height:2px;background:#ce9178;opacity:.38"></div><div class="a" style="left:1218px;top:382px;width:9px;height:2px;background:#ce9178;opacity:.38"></div><div class="a" style="left:1228px;top:382px;width:2px;height:2px;background:#ce9178;opacity:.38"></div><div class="a" style="left:1231px;top:382px;width:5px;height:2px;background:#ce9178;opacity:.38"></div><div class="a" style="left:1237px;top:382px;width:3px;height:2px;background:#ce9178;opacity:.38"></div><div class="a" style="left:1241px;top:382px;width:17px;height:2px;background:#ce9178;opacity:.38"></div><div class="a" style="left:1258px;top:382px;width:1px;height:2px;background:#179fff;opacity:.38"></div><div class="a" style="left:1259px;top:382px;width:1px;height:2px;background:#d4d4d4;opacity:.38"></div><div class="a" style="left:1189px;top:384px;width:1px;height:2px;background:#da70d6;opacity:.38"></div><div class="a" style="left:1191px;top:384px;width:5px;height:2px;background:#569cd6;opacity:.38"></div><div class="a" style="left:1197px;top:384px;width:1px;height:2px;background:#da70d6;opacity:.38"></div><div class="a" style="left:1198px;top:384px;width:1px;height:2px;background:#d4d4d4;opacity:.38"></div><div class="a" style="left:1199px;top:384px;width:1px;height:2px;background:#da70d6;opacity:.38"></div><div class="a" style="left:1201px;top:384px;width:1px;height:2px;background:#da70d6;opacity:.38"></div><div class="a" style="left:1191px;top:386px;width:12px;height:2px;background:#d4d4d4;opacity:.38"></div><div class="a" style="left:1203px;top:386px;width:1px;height:2px;background:#179fff;opacity:.38"></div><div class="a" style="left:1204px;top:386px;width:6px;height:2px;background:#ce9178;opacity:.38"></div><div class="a" style="left:1211px;top:386px;width:7px;height:2px;background:#ce9178;opacity:.38"></div><div class="a" style="left:1219px;top:386px;width:4px;height:2px;background:#ce9178;opacity:.38"></div><div class="a" style="left:1224px;top:386px;width:5px;height:2px;background:#ce9178;opacity:.38"></div><div class="a" style="left:1230px;top:386px;width:2px;height:2px;background:#ffd700;opacity:.38"></div><div class="a" style="left:1232px;top:386px;width:1px;height:2px;background:#d4d4d4;opacity:.38"></div><div class="a" style="left:1233px;top:386px;width:1px;height:2px;background:#ffd700;opacity:.38"></div><div class="a" style="left:1234px;top:386px;width:1px;height:2px;background:#ce9178;opacity:.38"></div><div class="a" style="left:1235px;top:386px;width:1px;height:2px;background:#179fff;opacity:.38"></div><div class="a" style="left:1236px;top:386px;width:1px;height:2px;background:#d4d4d4;opacity:.38"></div><div class="a" style="left:1191px;top:388px;width:5px;height:2px;background:#569cd6;opacity:.38"></div><div class="a" style="left:1197px;top:388px;width:2px;height:2px;background:#d4d4d4;opacity:.38"></div><div class="a" style="left:1189px;top:390px;width:1px;height:2px;background:#da70d6;opacity:.38"></div><div class="a" style="left:1187px;top:392px;width:1px;height:2px;background:#ffd700;opacity:.38"></div><div class="a" style="left:1188px;top:392px;width:1px;height:2px;background:#d4d4d4;opacity:.38"></div><div class="a" style="left:1187px;top:396px;width:6px;height:2px;background:#569cd6;opacity:.38"></div><div class="a" style="left:1194px;top:396px;width:5px;height:2px;background:#569cd6;opacity:.38"></div><div class="a" style="left:1200px;top:396px;width:15px;height:2px;background:#d4d4d4;opacity:.38"></div><div class="a" style="left:1216px;top:396px;width:1px;height:2px;background:#d4d4d4;opacity:.38"></div><div class="a" style="left:1218px;top:396px;width:5px;height:2px;background:#569cd6;opacity:.38"></div><div class="a" style="left:1224px;top:396px;width:1px;height:2px;background:#ffd700;opacity:.38"></div><div class="a" style="left:1225px;top:396px;width:7px;height:2px;background:#d4d4d4;opacity:.38"></div><div class="a" style="left:1233px;top:396px;width:9px;height:2px;background:#d4d4d4;opacity:.38"></div><div class="a" style="left:1242px;top:396px;width:1px;height:2px;background:#ffd700;opacity:.38"></div><div class="a" style="left:1244px;top:396px;width:2px;height:2px;background:#569cd6;opacity:.38"></div><div class="a" style="left:1247px;top:396px;width:1px;height:2px;background:#ffd700;opacity:.38"></div><div class="a" style="left:1189px;top:398px;width:3px;height:2px;background:#569cd6;opacity:.38"></div><div class="a" style="left:1193px;top:398px;width:1px;height:2px;background:#da70d6;opacity:.38"></div><div class="a" style="left:1191px;top:400px;width:2px;height:2px;background:#6a9955;opacity:.38"></div><div class="a" style="left:1194px;top:400px;width:6px;height:2px;background:#6a9955;opacity:.38"></div><div class="a" style="left:1201px;top:400px;width:2px;height:2px;background:#6a9955;opacity:.38"></div><div class="a" style="left:1204px;top:400px;width:5px;height:2px;background:#6a9955;opacity:.38"></div><div class="a" style="left:1210px;top:400px;width:2px;height:2px;background:#6a9955;opacity:.38"></div><div class="a" style="left:1213px;top:400px;width:8px;height:2px;background:#6a9955;opacity:.38"></div><div class="a" style="left:1222px;top:400px;width:3px;height:2px;background:#6a9955;opacity:.38"></div><div class="a" style="left:1226px;top:400px;width:5px;height:2px;background:#6a9955;opacity:.38"></div><div class="a" style="left:1232px;top:400px;width:3px;height:2px;background:#6a9955;opacity:.38"></div><div class="a" style="left:1236px;top:400px;width:10px;height:2px;background:#6a9955;opacity:.38"></div><div class="a" style="left:1191px;top:402px;width:5px;height:2px;background:#569cd6;opacity:.38"></div><div class="a" style="left:1197px;top:402px;width:8px;height:2px;background:#d4d4d4;opacity:.38"></div><div class="a" style="left:1206px;top:402px;width:1px;height:2px;background:#d4d4d4;opacity:.38"></div><div class="a" style="left:1208px;top:402px;width:12px;height:2px;background:#d4d4d4;opacity:.38"></div><div class="a" style="left:1220px;top:402px;width:1px;height:2px;background:#179fff;opacity:.38"></div><div class="a" style="left:1221px;top:402px;width:1px;height:2px;background:#ffd700;opacity:.38"></div><div class="a" style="left:1222px;top:402px;width:7px;height:2px;background:#d4d4d4;opacity:.38"></div><div class="a" style="left:1229px;top:402px;width:1px;height:2px;background:#ffd700;opacity:.38"></div><div class="a" style="left:1231px;top:402px;width:2px;height:2px;background:#569cd6;opacity:.38"></div><div class="a" style="left:1234px;top:402px;width:1px;height:2px;background:#ffd700;opacity:.38"></div><div class="a" style="left:1193px;top:404px;width:5px;height:2px;background:#569cd6;opacity:.38"></div><div class="a" style="left:1199px;top:404px;width:3px;height:2px;background:#d4d4d4;opacity:.38"></div><div class="a" style="left:1203px;top:404px;width:1px;height:2px;background:#d4d4d4;opacity:.38"></div><div class="a" style="left:1205px;top:404px;width:10px;height:2px;background:#ce9178;opacity:.38"></div><div class="a" style="left:1215px;top:404px;width:2px;height:2px;background:#da70d6;opacity:.38"></div><div class="a" style="left:1217px;top:404px;width:6px;height:2px;background:#d4d4d4;opacity:.38"></div><div class="a" style="left:1223px;top:404px;width:1px;height:2px;background:#da70d6;opacity:.38"></div><div class="a" style="left:1224px;top:404px;width:1px;height:2px;background:#ce9178;opacity:.38"></div><div class="a" style="left:1225px;top:404px;width:2px;height:2px;background:#da70d6;opacity:.38"></div><div class="a" style="left:1227px;top:404px;width:10px;height:2px;background:#d4d4d4;opacity:.38"></div><div class="a" style="left:1237px;top:404px;width:1px;height:2px;background:#da70d6;opacity:.38"></div><div class="a" style="left:1238px;top:404px;width:1px;height:2px;background:#ce9178;opacity:.38"></div><div class="a" style="left:1239px;top:404px;width:1px;height:2px;background:#d4d4d4;opacity:.38"></div><div class="a" style="left:1193px;top:406px;width:12px;height:2px;background:#d4d4d4;opacity:.38"></div><div class="a" style="left:1205px;top:406px;width:1px;height:2px;background:#da70d6;opacity:.38"></div><div class="a" style="left:1206px;top:406px;width:8px;height:2px;background:#ce9178;opacity:.38"></div><div class="a" style="left:1215px;top:406px;width:3px;height:2px;background:#ce9178;opacity:.38"></div><div class="a" style="left:1219px;top:406px;width:4px;height:2px;background:#ce9178;opacity:.38"></div><div class="a" style="left:1224px;top:406px;width:3px;height:2px;background:#ce9178;opacity:.38"></div><div class="a" style="left:1228px;top:406px;width:3px;height:2px;background:#ce9178;opacity:.38"></div><div class="a" style="left:1232px;top:406px;width:2px;height:2px;background:#179fff;opacity:.38"></div><div class="a" style="left:1234px;top:406px;width:3px;height:2px;background:#d4d4d4;opacity:.38"></div><div class="a" style="left:1237px;top:406px;width:1px;height:2px;background:#179fff;opacity:.38"></div><div class="a" style="left:1238px;top:406px;width:1px;height:2px;background:#ce9178;opacity:.38"></div><div class="a" style="left:1239px;top:406px;width:1px;height:2px;background:#da70d6;opacity:.38"></div><div class="a" style="left:1240px;top:406px;width:1px;height:2px;background:#d4d4d4;opacity:.38"></div><div class="a" style="left:1193px;top:408px;width:6px;height:2px;background:#569cd6;opacity:.38"></div><div class="a" style="left:1200px;top:408px;width:11px;height:2px;background:#d4d4d4;opacity:.38"></div><div class="a" style="left:1211px;top:408px;width:1px;height:2px;background:#da70d6;opacity:.38"></div><div class="a" style="left:1212px;top:408px;width:4px;height:2px;background:#d4d4d4;opacity:.38"></div><div class="a" style="left:1217px;top:408px;width:4px;height:2px;background:#d4d4d4;opacity:.38"></div><div class="a" style="left:1222px;top:408px;width:14px;height:2px;background:#d4d4d4;opacity:.38"></div><div class="a" style="left:1236px;top:408px;width:1px;height:2px;background:#179fff;opacity:.38"></div><div class="a" style="left:1237px;top:408px;width:7px;height:2px;background:#d4d4d4;opacity:.38"></div><div class="a" style="left:1244px;top:408px;width:1px;height:2px;background:#179fff;opacity:.38"></div><div class="a" style="left:1245px;top:408px;width:1px;height:2px;background:#da70d6;opacity:.38"></div><div class="a" style="left:1246px;top:408px;width:1px;height:2px;background:#d4d4d4;opacity:.38"></div><div class="a" style="left:1191px;top:410px;width:1px;height:2px;background:#ffd700;opacity:.38"></div><div class="a" style="left:1192px;top:410px;width:1px;height:2px;background:#179fff;opacity:.38"></div><div class="a" style="left:1193px;top:410px;width:1px;height:2px;background:#d4d4d4;opacity:.38"></div><div class="a" style="left:1191px;top:414px;width:5px;height:2px;background:#569cd6;opacity:.38"></div><div class="a" style="left:1197px;top:414px;width:11px;height:2px;background:#d4d4d4;opacity:.38"></div><div class="a" style="left:1208px;top:414px;width:1px;height:2px;background:#179fff;opacity:.38"></div><div class="a" style="left:1209px;top:414px;width:8px;height:2px;background:#d4d4d4;opacity:.38"></div><div class="a" style="left:1217px;top:414px;width:1px;height:2px;background:#179fff;opacity:.38"></div><div class="a" style="left:1218px;top:414px;width:1px;height:2px;background:#d4d4d4;opacity:.38"></div><div class="a" style="left:1191px;top:416px;width:12px;height:2px;background:#d4d4d4;opacity:.38"></div><div class="a" style="left:1203px;top:416px;width:1px;height:2px;background:#179fff;opacity:.38"></div><div class="a" style="left:1204px;top:416px;width:7px;height:2px;background:#ce9178;opacity:.38"></div><div class="a" style="left:1212px;top:416px;width:2px;height:2px;background:#ffd700;opacity:.38"></div><div class="a" style="left:1214px;top:416px;width:15px;height:2px;background:#d4d4d4;opacity:.38"></div><div class="a" style="left:1229px;top:416px;width:1px;height:2px;background:#ffd700;opacity:.38"></div><div class="a" style="left:1231px;top:416px;width:7px;height:2px;background:#ce9178;opacity:.38"></div><div class="a" style="left:1239px;top:416px;width:2px;height:2px;background:#ce9178;opacity:.38"></div><div class="a" style="left:1242px;top:416px;width:6px;height:2px;background:#ce9178;opacity:.38"></div><div class="a" style="left:1248px;top:416px;width:1px;height:2px;background:#179fff;opacity:.38"></div><div class="a" style="left:1249px;top:416px;width:1px;height:2px;background:#d4d4d4;opacity:.38"></div><div class="a" style="left:1189px;top:418px;width:1px;height:2px;background:#da70d6;opacity:.38"></div><div class="a" style="left:1191px;top:418px;width:5px;height:2px;background:#569cd6;opacity:.38"></div><div class="a" style="left:1197px;top:418px;width:1px;height:2px;background:#da70d6;opacity:.38"></div><div class="a" style="left:1198px;top:418px;width:1px;height:2px;background:#d4d4d4;opacity:.38"></div><div class="a" style="left:1199px;top:418px;width:1px;height:2px;background:#da70d6;opacity:.38"></div><div class="a" style="left:1201px;top:418px;width:1px;height:2px;background:#da70d6;opacity:.38"></div><div class="a" style="left:1191px;top:420px;width:12px;height:2px;background:#d4d4d4;opacity:.38"></div><div class="a" style="left:1203px;top:420px;width:1px;height:2px;background:#179fff;opacity:.38"></div><div class="a" style="left:1204px;top:420px;width:7px;height:2px;background:#ce9178;opacity:.38"></div><div class="a" style="left:1212px;top:420px;width:7px;height:2px;background:#ce9178;opacity:.38"></div><div class="a" style="left:1220px;top:420px;width:4px;height:2px;background:#ce9178;opacity:.38"></div><div class="a" style="left:1225px;top:420px;width:2px;height:2px;background:#ce9178;opacity:.38"></div><div class="a" style="left:1228px;top:420px;width:5px;height:2px;background:#ce9178;opacity:.38"></div><div class="a" style="left:1234px;top:420px;width:2px;height:2px;background:#ffd700;opacity:.38"></div><div class="a" style="left:1236px;top:420px;width:1px;height:2px;background:#d4d4d4;opacity:.38"></div><div class="a" style="left:1237px;top:420px;width:1px;height:2px;background:#ffd700;opacity:.38"></div><div class="a" style="left:1238px;top:420px;width:1px;height:2px;background:#ce9178;opacity:.38"></div><div class="a" style="left:1239px;top:420px;width:1px;height:2px;background:#179fff;opacity:.38"></div><div class="a" style="left:1240px;top:420px;width:1px;height:2px;background:#d4d4d4;opacity:.38"></div><div class="a" style="left:1191px;top:422px;width:5px;height:2px;background:#569cd6;opacity:.38"></div><div class="a" style="left:1197px;top:422px;width:2px;height:2px;background:#d4d4d4;opacity:.38"></div><div class="a" style="left:1189px;top:424px;width:1px;height:2px;background:#da70d6;opacity:.38"></div><div class="a" style="left:1189px;top:428px;width:2px;height:2px;background:#569cd6;opacity:.38"></div><div class="a" style="left:1192px;top:428px;width:1px;height:2px;background:#da70d6;opacity:.38"></div><div class="a" style="left:1193px;top:428px;width:9px;height:2px;background:#d4d4d4;opacity:.38"></div><div class="a" style="left:1203px;top:428px;width:2px;height:2px;background:#d4d4d4;opacity:.38"></div><div class="a" style="left:1206px;top:428px;width:15px;height:2px;background:#d4d4d4;opacity:.38"></div><div class="a" style="left:1222px;top:428px;width:3px;height:2px;background:#d4d4d4;opacity:.38"></div><div class="a" style="left:1226px;top:428px;width:1px;height:2px;background:#b5cea8;opacity:.38"></div><div class="a" style="left:1227px;top:428px;width:1px;height:2px;background:#da70d6;opacity:.38"></div><div class="a" style="left:1229px;top:428px;width:1px;height:2px;background:#da70d6;opacity:.38"></div><div class="a" style="left:1191px;top:430px;width:12px;height:2px;background:#d4d4d4;opacity:.38"></div><div class="a" style="left:1203px;top:430px;width:1px;height:2px;background:#179fff;opacity:.38"></div><div class="a" style="left:1204px;top:430px;width:3px;height:2px;background:#ce9178;opacity:.38"></div><div class="a" style="left:1208px;top:430px;width:8px;height:2px;background:#ce9178;opacity:.38"></div><div class="a" style="left:1217px;top:430px;width:2px;height:2px;background:#ce9178;opacity:.38"></div><div class="a" style="left:1220px;top:430px;width:8px;height:2px;background:#ce9178;opacity:.38"></div><div class="a" style="left:1229px;top:430px;width:8px;height:2px;background:#ce9178;opacity:.38"></div><div class="a" style="left:1238px;top:430px;width:5px;height:2px;background:#ce9178;opacity:.38"></div><div class="a" style="left:1244px;top:430px;width:10px;height:2px;background:#ce9178;opacity:.38"></div><div class="a" style="left:1254px;top:430px;width:1px;height:2px;background:#179fff;opacity:.38"></div><div class="a" style="left:1255px;top:430px;width:1px;height:2px;background:#d4d4d4;opacity:.38"></div><div class="a" style="left:1191px;top:432px;width:6px;height:2px;background:#569cd6;opacity:.38"></div><div class="a" style="left:1197px;top:432px;width:1px;height:2px;background:#d4d4d4;opacity:.38"></div><div class="a" style="left:1189px;top:434px;width:1px;height:2px;background:#da70d6;opacity:.38"></div><div class="a" style="left:1187px;top:436px;width:1px;height:2px;background:#ffd700;opacity:.38"></div><div class="a" style="left:1188px;top:436px;width:1px;height:2px;background:#d4d4d4;opacity:.38"></div><div class="a" style="left:1187px;top:440px;width:3px;height:2px;background:#d4d4d4;opacity:.38"></div><div class="a" style="left:1188px;top:442px;width:1px;height:2px;background:#d4d4d4;opacity:.38"></div><div class="a" style="left:1190px;top:442px;width:9px;height:2px;background:#d4d4d4;opacity:.38"></div><div class="a" style="left:1200px;top:442px;width:4px;height:2px;background:#d4d4d4;opacity:.38"></div><div class="a" style="left:1205px;top:442px;width:4px;height:2px;background:#569cd6;opacity:.38"></div><div class="a" style="left:1210px;top:442px;width:5px;height:2px;background:#d4d4d4;opacity:.38"></div><div class="a" style="left:1216px;top:442px;width:3px;height:2px;background:#d4d4d4;opacity:.38"></div><div class="a" style="left:1220px;top:442px;width:7px;height:2px;background:#d4d4d4;opacity:.38"></div><div class="a" style="left:1228px;top:442px;width:3px;height:2px;background:#d4d4d4;opacity:.38"></div><div class="a" style="left:1232px;top:442px;width:6px;height:2px;background:#d4d4d4;opacity:.38"></div><div class="a" style="left:1239px;top:442px;width:5px;height:2px;background:#d4d4d4;opacity:.38"></div><div class="a" style="left:1188px;top:444px;width:2px;height:2px;background:#d4d4d4;opacity:.38"></div><div class="a" style="left:1187px;top:446px;width:6px;height:2px;background:#569cd6;opacity:.38"></div><div class="a" style="left:1194px;top:446px;width:5px;height:2px;background:#569cd6;opacity:.38"></div><div class="a" style="left:1200px;top:446px;width:14px;height:2px;background:#d4d4d4;opacity:.38"></div><div class="a" style="left:1215px;top:446px;width:1px;height:2px;background:#d4d4d4;opacity:.38"></div><div class="a" style="left:1217px;top:446px;width:5px;height:2px;background:#569cd6;opacity:.38"></div><div class="a" style="left:1223px;top:446px;width:1px;height:2px;background:#ffd700;opacity:.38"></div><div class="a" style="left:1224px;top:446px;width:7px;height:2px;background:#d4d4d4;opacity:.38"></div><div class="a" style="left:1232px;top:446px;width:9px;height:2px;background:#d4d4d4;opacity:.38"></div><div class="a" style="left:1241px;top:446px;width:1px;height:2px;background:#ffd700;opacity:.38"></div><div class="a" style="left:1243px;top:446px;width:2px;height:2px;background:#569cd6;opacity:.38"></div><div class="a" style="left:1246px;top:446px;width:1px;height:2px;background:#ffd700;opacity:.38"></div><div class="a" style="left:1189px;top:448px;width:12px;height:2px;background:#d4d4d4;opacity:.38"></div><div class="a" style="left:1201px;top:448px;width:1px;height:2px;background:#da70d6;opacity:.38"></div><div class="a" style="left:1202px;top:448px;width:8px;height:2px;background:#ce9178;opacity:.38"></div><div class="a" style="left:1211px;top:448px;width:4px;height:2px;background:#ce9178;opacity:.38"></div><div class="a" style="left:1216px;top:448px;width:3px;height:2px;background:#ce9178;opacity:.38"></div><div class="a" style="left:1220px;top:448px;width:4px;height:2px;background:#ce9178;opacity:.38"></div><div class="a" style="left:1225px;top:448px;width:2px;height:2px;background:#179fff;opacity:.38"></div><div class="a" style="left:1227px;top:448px;width:6px;height:2px;background:#d4d4d4;opacity:.38"></div><div class="a" style="left:1233px;top:448px;width:1px;height:2px;background:#179fff;opacity:.38"></div><div class="a" style="left:1234px;top:448px;width:1px;height:2px;background:#ce9178;opacity:.38"></div><div class="a" style="left:1235px;top:448px;width:1px;height:2px;background:#da70d6;opacity:.38"></div><div class="a" style="left:1236px;top:448px;width:1px;height:2px;background:#d4d4d4;opacity:.38"></div><div class="a" style="left:1189px;top:452px;width:3px;height:2px;background:#569cd6;opacity:.38"></div><div class="a" style="left:1193px;top:452px;width:6px;height:2px;background:#d4d4d4;opacity:.38"></div><div class="a" style="left:1189px;top:454px;width:3px;height:2px;background:#569cd6;opacity:.38"></div><div class="a" style="left:1193px;top:454px;width:1px;height:2px;background:#da70d6;opacity:.38"></div><div class="a" style="left:1191px;top:456px;width:5px;height:2px;background:#d4d4d4;opacity:.38"></div><div class="a" style="left:1197px;top:456px;width:1px;height:2px;background:#d4d4d4;opacity:.38"></div><div class="a" style="left:1199px;top:456px;width:5px;height:2px;background:#569cd6;opacity:.38"></div><div class="a" style="left:1205px;top:456px;width:14px;height:2px;background:#d4d4d4;opacity:.38"></div><div class="a" style="left:1219px;top:456px;width:2px;height:2px;background:#179fff;opacity:.38"></div><div class="a" style="left:1221px;top:456px;width:1px;height:2px;background:#d4d4d4;opacity:.38"></div><div class="a" style="left:1191px;top:458px;width:12px;height:2px;background:#d4d4d4;opacity:.38"></div><div class="a" style="left:1203px;top:458px;width:1px;height:2px;background:#179fff;opacity:.38"></div><div class="a" style="left:1204px;top:458px;width:13px;height:2px;background:#ce9178;opacity:.38"></div><div class="a" style="left:1218px;top:458px;width:9px;height:2px;background:#ce9178;opacity:.38"></div><div class="a" style="left:1228px;top:458px;width:2px;height:2px;background:#ce9178;opacity:.38"></div><div class="a" style="left:1231px;top:458px;width:5px;height:2px;background:#ce9178;opacity:.38"></div><div class="a" style="left:1237px;top:458px;width:3px;height:2px;background:#ce9178;opacity:.38"></div><div class="a" style="left:1241px;top:458px;width:17px;height:2px;background:#ce9178;opacity:.38"></div><div class="a" style="left:1258px;top:458px;width:1px;height:2px;background:#179fff;opacity:.38"></div><div class="a" style="left:1259px;top:458px;width:1px;height:2px;background:#d4d4d4;opacity:.38"></div><div class="a" style="left:1189px;top:460px;width:1px;height:2px;background:#da70d6;opacity:.38"></div><div class="a" style="left:1191px;top:460px;width:5px;height:2px;background:#569cd6;opacity:.38"></div><div class="a" style="left:1197px;top:460px;width:1px;height:2px;background:#da70d6;opacity:.38"></div><div class="a" style="left:1198px;top:460px;width:1px;height:2px;background:#d4d4d4;opacity:.38"></div><div class="a" style="left:1199px;top:460px;width:1px;height:2px;background:#da70d6;opacity:.38"></div><div class="a" style="left:1201px;top:460px;width:1px;height:2px;background:#da70d6;opacity:.38"></div><div class="a" style="left:1191px;top:462px;width:12px;height:2px;background:#d4d4d4;opacity:.38"></div><div class="a" style="left:1203px;top:462px;width:1px;height:2px;background:#179fff;opacity:.38"></div><div class="a" style="left:1204px;top:462px;width:6px;height:2px;background:#ce9178;opacity:.38"></div><div class="a" style="left:1211px;top:462px;width:7px;height:2px;background:#ce9178;opacity:.38"></div><div class="a" style="left:1219px;top:462px;width:4px;height:2px;background:#ce9178;opacity:.38"></div><div class="a" style="left:1224px;top:462px;width:5px;height:2px;background:#ce9178;opacity:.38"></div><div class="a" style="left:1230px;top:462px;width:2px;height:2px;background:#ffd700;opacity:.38"></div><div class="a" style="left:1232px;top:462px;width:1px;height:2px;background:#d4d4d4;opacity:.38"></div><div class="a" style="left:1233px;top:462px;width:1px;height:2px;background:#ffd700;opacity:.38"></div><div class="a" style="left:1234px;top:462px;width:1px;height:2px;background:#ce9178;opacity:.38"></div><div class="a" style="left:1235px;top:462px;width:1px;height:2px;background:#179fff;opacity:.38"></div><div class="a" style="left:1236px;top:462px;width:1px;height:2px;background:#d4d4d4;opacity:.38"></div><div class="a" style="left:1191px;top:464px;width:5px;height:2px;background:#569cd6;opacity:.38"></div><div class="a" style="left:1197px;top:464px;width:2px;height:2px;background:#d4d4d4;opacity:.38"></div><div class="a" style="left:1189px;top:466px;width:1px;height:2px;background:#da70d6;opacity:.38"></div><div class="a" style="left:1189px;top:470px;width:2px;height:2px;background:#569cd6;opacity:.38"></div><div class="a" style="left:1192px;top:470px;width:1px;height:2px;background:#da70d6;opacity:.38"></div><div class="a" style="left:1193px;top:470px;width:9px;height:2px;background:#d4d4d4;opacity:.38"></div><div class="a" style="left:1203px;top:470px;width:2px;height:2px;background:#d4d4d4;opacity:.38"></div><div class="a" style="left:1206px;top:470px;width:15px;height:2px;background:#d4d4d4;opacity:.38"></div><div class="a" style="left:1222px;top:470px;width:3px;height:2px;background:#d4d4d4;opacity:.38"></div><div class="a" style="left:1226px;top:470px;width:1px;height:2px;background:#b5cea8;opacity:.38"></div><div class="a" style="left:1227px;top:470px;width:1px;height:2px;background:#da70d6;opacity:.38"></div><div class="a" style="left:1229px;top:470px;width:1px;height:2px;background:#da70d6;opacity:.38"></div><div class="a" style="left:1191px;top:472px;width:12px;height:2px;background:#d4d4d4;opacity:.38"></div><div class="a" style="left:1203px;top:472px;width:1px;height:2px;background:#179fff;opacity:.38"></div><div class="a" style="left:1204px;top:472px;width:3px;height:2px;background:#ce9178;opacity:.38"></div><div class="a" style="left:1208px;top:472px;width:8px;height:2px;background:#ce9178;opacity:.38"></div><div class="a" style="left:1217px;top:472px;width:2px;height:2px;background:#ce9178;opacity:.38"></div><div class="a" style="left:1220px;top:472px;width:8px;height:2px;background:#ce9178;opacity:.38"></div><div class="a" style="left:1229px;top:472px;width:8px;height:2px;background:#ce9178;opacity:.38"></div><div class="a" style="left:1238px;top:472px;width:5px;height:2px;background:#ce9178;opacity:.38"></div><div class="a" style="left:1244px;top:472px;width:10px;height:2px;background:#ce9178;opacity:.38"></div><div class="a" style="left:1254px;top:472px;width:1px;height:2px;background:#179fff;opacity:.38"></div><div class="a" style="left:1255px;top:472px;width:1px;height:2px;background:#d4d4d4;opacity:.38"></div><div class="a" style="left:1191px;top:474px;width:6px;height:2px;background:#569cd6;opacity:.38"></div><div class="a" style="left:1197px;top:474px;width:1px;height:2px;background:#d4d4d4;opacity:.38"></div><div class="a" style="left:1189px;top:476px;width:1px;height:2px;background:#da70d6;opacity:.38"></div><div class="a" style="left:1187px;top:478px;width:1px;height:2px;background:#ffd700;opacity:.38"></div><div class="a" style="left:1188px;top:478px;width:1px;height:2px;background:#d4d4d4;opacity:.38"></div><div class="a" style="left:1187px;top:482px;width:3px;height:2px;background:#d4d4d4;opacity:.38"></div><div class="a" style="left:1188px;top:484px;width:1px;height:2px;background:#d4d4d4;opacity:.38"></div><div class="a" style="left:1190px;top:484px;width:9px;height:2px;background:#d4d4d4;opacity:.38"></div><div class="a" style="left:1200px;top:484px;width:4px;height:2px;background:#d4d4d4;opacity:.38"></div><div class="a" style="left:1205px;top:484px;width:4px;height:2px;background:#569cd6;opacity:.38"></div><div class="a" style="left:1210px;top:484px;width:5px;height:2px;background:#d4d4d4;opacity:.38"></div><div class="a" style="left:1216px;top:484px;width:3px;height:2px;background:#d4d4d4;opacity:.38"></div><div class="a" style="left:1220px;top:484px;width:7px;height:2px;background:#d4d4d4;opacity:.38"></div><div class="a" style="left:1228px;top:484px;width:3px;height:2px;background:#d4d4d4;opacity:.38"></div><div class="a" style="left:1232px;top:484px;width:6px;height:2px;background:#d4d4d4;opacity:.38"></div><div class="a" style="left:1239px;top:484px;width:5px;height:2px;background:#d4d4d4;opacity:.38"></div><div class="a" style="left:1188px;top:486px;width:2px;height:2px;background:#d4d4d4;opacity:.38"></div><div class="a" style="left:1187px;top:488px;width:6px;height:2px;background:#569cd6;opacity:.38"></div><div class="a" style="left:1194px;top:488px;width:5px;height:2px;background:#569cd6;opacity:.38"></div><div class="a" style="left:1200px;top:488px;width:14px;height:2px;background:#d4d4d4;opacity:.38"></div><div class="a" style="left:1215px;top:488px;width:1px;height:2px;background:#d4d4d4;opacity:.38"></div><div class="a" style="left:1217px;top:488px;width:5px;height:2px;background:#569cd6;opacity:.38"></div><div class="a" style="left:1223px;top:488px;width:1px;height:2px;background:#ffd700;opacity:.38"></div><div class="a" style="left:1224px;top:488px;width:7px;height:2px;background:#d4d4d4;opacity:.38"></div><div class="a" style="left:1232px;top:488px;width:9px;height:2px;background:#d4d4d4;opacity:.38"></div><div class="a" style="left:1241px;top:488px;width:1px;height:2px;background:#ffd700;opacity:.38"></div><div class="a" style="left:1243px;top:488px;width:2px;height:2px;background:#569cd6;opacity:.38"></div><div class="a" style="left:1246px;top:488px;width:1px;height:2px;background:#ffd700;opacity:.38"></div><div class="a" style="left:1189px;top:490px;width:12px;height:2px;background:#d4d4d4;opacity:.38"></div><div class="a" style="left:1201px;top:490px;width:1px;height:2px;background:#da70d6;opacity:.38"></div><div class="a" style="left:1202px;top:490px;width:8px;height:2px;background:#ce9178;opacity:.38"></div><div class="a" style="left:1211px;top:490px;width:4px;height:2px;background:#ce9178;opacity:.38"></div><div class="a" style="left:1216px;top:490px;width:3px;height:2px;background:#ce9178;opacity:.38"></div><div class="a" style="left:1220px;top:490px;width:4px;height:2px;background:#ce9178;opacity:.38"></div><div class="a" style="left:1225px;top:490px;width:2px;height:2px;background:#179fff;opacity:.38"></div><div class="a" style="left:1227px;top:490px;width:6px;height:2px;background:#d4d4d4;opacity:.38"></div><div class="a" style="left:1233px;top:490px;width:1px;height:2px;background:#179fff;opacity:.38"></div><div class="a" style="left:1234px;top:490px;width:1px;height:2px;background:#ce9178;opacity:.38"></div><div class="a" style="left:1235px;top:490px;width:1px;height:2px;background:#da70d6;opacity:.38"></div><div class="a" style="left:1236px;top:490px;width:1px;height:2px;background:#d4d4d4;opacity:.38"></div><div class="a" style="left:1189px;top:494px;width:3px;height:2px;background:#569cd6;opacity:.38"></div><div class="a" style="left:1193px;top:494px;width:6px;height:2px;background:#d4d4d4;opacity:.38"></div><div class="a" style="left:1189px;top:496px;width:3px;height:2px;background:#569cd6;opacity:.38"></div><div class="a" style="left:1193px;top:496px;width:1px;height:2px;background:#da70d6;opacity:.38"></div><div class="a" style="left:1191px;top:498px;width:5px;height:2px;background:#d4d4d4;opacity:.38"></div><div class="a" style="left:1197px;top:498px;width:1px;height:2px;background:#d4d4d4;opacity:.38"></div><div class="a" style="left:1199px;top:498px;width:5px;height:2px;background:#569cd6;opacity:.38"></div><div class="a" style="left:1205px;top:498px;width:14px;height:2px;background:#d4d4d4;opacity:.38"></div><div class="a" style="left:1219px;top:498px;width:2px;height:2px;background:#179fff;opacity:.38"></div><div class="a" style="left:1221px;top:498px;width:1px;height:2px;background:#d4d4d4;opacity:.38"></div><div class="a" style="left:1191px;top:500px;width:12px;height:2px;background:#d4d4d4;opacity:.38"></div><div class="a" style="left:1203px;top:500px;width:1px;height:2px;background:#179fff;opacity:.38"></div><div class="a" style="left:1204px;top:500px;width:13px;height:2px;background:#ce9178;opacity:.38"></div><div class="a" style="left:1218px;top:500px;width:9px;height:2px;background:#ce9178;opacity:.38"></div><div class="a" style="left:1228px;top:500px;width:2px;height:2px;background:#ce9178;opacity:.38"></div><div class="a" style="left:1231px;top:500px;width:5px;height:2px;background:#ce9178;opacity:.38"></div><div class="a" style="left:1237px;top:500px;width:3px;height:2px;background:#ce9178;opacity:.38"></div><div class="a" style="left:1241px;top:500px;width:17px;height:2px;background:#ce9178;opacity:.38"></div><div class="a" style="left:1258px;top:500px;width:1px;height:2px;background:#179fff;opacity:.38"></div><div class="a" style="left:1259px;top:500px;width:1px;height:2px;background:#d4d4d4;opacity:.38"></div><div class="a" style="left:1189px;top:502px;width:1px;height:2px;background:#da70d6;opacity:.38"></div><div class="a" style="left:1191px;top:502px;width:5px;height:2px;background:#569cd6;opacity:.38"></div><div class="a" style="left:1197px;top:502px;width:1px;height:2px;background:#da70d6;opacity:.38"></div><div class="a" style="left:1198px;top:502px;width:1px;height:2px;background:#d4d4d4;opacity:.38"></div><div class="a" style="left:1199px;top:502px;width:1px;height:2px;background:#da70d6;opacity:.38"></div><div class="a" style="left:1201px;top:502px;width:1px;height:2px;background:#da70d6;opacity:.38"></div><div class="a" style="left:1191px;top:504px;width:12px;height:2px;background:#d4d4d4;opacity:.38"></div><div class="a" style="left:1203px;top:504px;width:1px;height:2px;background:#179fff;opacity:.38"></div><div class="a" style="left:1204px;top:504px;width:6px;height:2px;background:#ce9178;opacity:.38"></div><div class="a" style="left:1211px;top:504px;width:7px;height:2px;background:#ce9178;opacity:.38"></div><div class="a" style="left:1219px;top:504px;width:4px;height:2px;background:#ce9178;opacity:.38"></div><div class="a" style="left:1224px;top:504px;width:5px;height:2px;background:#ce9178;opacity:.38"></div><div class="a" style="left:1230px;top:504px;width:2px;height:2px;background:#ffd700;opacity:.38"></div><div class="a" style="left:1232px;top:504px;width:1px;height:2px;background:#d4d4d4;opacity:.38"></div><div class="a" style="left:1233px;top:504px;width:1px;height:2px;background:#ffd700;opacity:.38"></div><div class="a" style="left:1234px;top:504px;width:1px;height:2px;background:#ce9178;opacity:.38"></div><div class="a" style="left:1235px;top:504px;width:1px;height:2px;background:#179fff;opacity:.38"></div><div class="a" style="left:1236px;top:504px;width:1px;height:2px;background:#d4d4d4;opacity:.38"></div><div class="a" style="left:1191px;top:506px;width:5px;height:2px;background:#569cd6;opacity:.38"></div><div class="a" style="left:1197px;top:506px;width:2px;height:2px;background:#d4d4d4;opacity:.38"></div><div class="a" style="left:1189px;top:508px;width:1px;height:2px;background:#da70d6;opacity:.38"></div><div class="a" style="left:1189px;top:512px;width:2px;height:2px;background:#569cd6;opacity:.38"></div><div class="a" style="left:1192px;top:512px;width:1px;height:2px;background:#da70d6;opacity:.38"></div><div class="a" style="left:1193px;top:512px;width:9px;height:2px;background:#d4d4d4;opacity:.38"></div><div class="a" style="left:1203px;top:512px;width:2px;height:2px;background:#d4d4d4;opacity:.38"></div><div class="a" style="left:1206px;top:512px;width:15px;height:2px;background:#d4d4d4;opacity:.38"></div><div class="a" style="left:1222px;top:512px;width:3px;height:2px;background:#d4d4d4;opacity:.38"></div><div class="a" style="left:1226px;top:512px;width:1px;height:2px;background:#b5cea8;opacity:.38"></div><div class="a" style="left:1227px;top:512px;width:1px;height:2px;background:#da70d6;opacity:.38"></div><div class="a" style="left:1229px;top:512px;width:1px;height:2px;background:#da70d6;opacity:.38"></div><div class="a" style="left:1191px;top:514px;width:12px;height:2px;background:#d4d4d4;opacity:.38"></div><div class="a" style="left:1203px;top:514px;width:1px;height:2px;background:#179fff;opacity:.38"></div><div class="a" style="left:1204px;top:514px;width:3px;height:2px;background:#ce9178;opacity:.38"></div><div class="a" style="left:1208px;top:514px;width:8px;height:2px;background:#ce9178;opacity:.38"></div><div class="a" style="left:1217px;top:514px;width:2px;height:2px;background:#ce9178;opacity:.38"></div><div class="a" style="left:1220px;top:514px;width:8px;height:2px;background:#ce9178;opacity:.38"></div><div class="a" style="left:1229px;top:514px;width:8px;height:2px;background:#ce9178;opacity:.38"></div><div class="a" style="left:1238px;top:514px;width:5px;height:2px;background:#ce9178;opacity:.38"></div><div class="a" style="left:1244px;top:514px;width:10px;height:2px;background:#ce9178;opacity:.38"></div><div class="a" style="left:1254px;top:514px;width:1px;height:2px;background:#179fff;opacity:.38"></div><div class="a" style="left:1255px;top:514px;width:1px;height:2px;background:#d4d4d4;opacity:.38"></div><div class="a" style="left:1191px;top:516px;width:6px;height:2px;background:#569cd6;opacity:.38"></div><div class="a" style="left:1197px;top:516px;width:1px;height:2px;background:#d4d4d4;opacity:.38"></div><div class="a" style="left:1189px;top:518px;width:1px;height:2px;background:#da70d6;opacity:.38"></div><div class="a" style="left:1187px;top:520px;width:1px;height:2px;background:#ffd700;opacity:.38"></div><div class="a" style="left:1188px;top:520px;width:1px;height:2px;background:#d4d4d4;opacity:.38"></div><div class="a" style="left:1187px;top:524px;width:6px;height:2px;background:#569cd6;opacity:.38"></div><div class="a" style="left:1194px;top:524px;width:5px;height:2px;background:#569cd6;opacity:.38"></div><div class="a" style="left:1200px;top:524px;width:18px;height:2px;background:#d4d4d4;opacity:.38"></div><div class="a" style="left:1219px;top:524px;width:1px;height:2px;background:#d4d4d4;opacity:.38"></div><div class="a" style="left:1221px;top:524px;width:5px;height:2px;background:#569cd6;opacity:.38"></div><div class="a" style="left:1227px;top:524px;width:1px;height:2px;background:#ffd700;opacity:.38"></div><div class="a" style="left:1228px;top:524px;width:7px;height:2px;background:#d4d4d4;opacity:.38"></div><div class="a" style="left:1236px;top:524px;width:9px;height:2px;background:#d4d4d4;opacity:.38"></div><div class="a" style="left:1245px;top:524px;width:1px;height:2px;background:#ffd700;opacity:.38"></div><div class="a" style="left:1247px;top:524px;width:2px;height:2px;background:#569cd6;opacity:.38"></div><div class="a" style="left:1250px;top:524px;width:1px;height:2px;background:#ffd700;opacity:.38"></div><div class="a" style="left:1189px;top:526px;width:2px;height:2px;background:#569cd6;opacity:.38"></div><div class="a" style="left:1192px;top:526px;width:1px;height:2px;background:#da70d6;opacity:.38"></div><div class="a" style="left:1193px;top:526px;width:9px;height:2px;background:#d4d4d4;opacity:.38"></div><div class="a" style="left:1203px;top:526px;width:2px;height:2px;background:#d4d4d4;opacity:.38"></div><div class="a" style="left:1206px;top:526px;width:15px;height:2px;background:#d4d4d4;opacity:.38"></div><div class="a" style="left:1222px;top:526px;width:3px;height:2px;background:#d4d4d4;opacity:.38"></div><div class="a" style="left:1226px;top:526px;width:1px;height:2px;background:#b5cea8;opacity:.38"></div><div class="a" style="left:1227px;top:526px;width:1px;height:2px;background:#da70d6;opacity:.38"></div><div class="a" style="left:1229px;top:526px;width:1px;height:2px;background:#da70d6;opacity:.38"></div><div class="a" style="left:1191px;top:528px;width:12px;height:2px;background:#d4d4d4;opacity:.38"></div><div class="a" style="left:1203px;top:528px;width:1px;height:2px;background:#179fff;opacity:.38"></div><div class="a" style="left:1204px;top:528px;width:3px;height:2px;background:#ce9178;opacity:.38"></div><div class="a" style="left:1208px;top:528px;width:8px;height:2px;background:#ce9178;opacity:.38"></div><div class="a" style="left:1217px;top:528px;width:2px;height:2px;background:#ce9178;opacity:.38"></div><div class="a" style="left:1220px;top:528px;width:8px;height:2px;background:#ce9178;opacity:.38"></div><div class="a" style="left:1229px;top:528px;width:8px;height:2px;background:#ce9178;opacity:.38"></div><div class="a" style="left:1238px;top:528px;width:5px;height:2px;background:#ce9178;opacity:.38"></div><div class="a" style="left:1244px;top:528px;width:10px;height:2px;background:#ce9178;opacity:.38"></div><div class="a" style="left:1254px;top:528px;width:1px;height:2px;background:#179fff;opacity:.38"></div><div class="a" style="left:1255px;top:528px;width:1px;height:2px;background:#d4d4d4;opacity:.38"></div><div class="a" style="left:1191px;top:530px;width:6px;height:2px;background:#569cd6;opacity:.38"></div><div class="a" style="left:1197px;top:530px;width:1px;height:2px;background:#d4d4d4;opacity:.38"></div><div class="a" style="left:1189px;top:532px;width:1px;height:2px;background:#da70d6;opacity:.38"></div><div class="a" style="left:1187px;top:536px;width:6px;height:2px;background:#569cd6;opacity:.38"></div><div class="a" style="left:1194px;top:536px;width:5px;height:2px;background:#569cd6;opacity:.38"></div><div class="a" style="left:1200px;top:536px;width:34px;height:2px;background:#d4d4d4;opacity:.38"></div><div class="a" style="left:1235px;top:536px;width:1px;height:2px;background:#d4d4d4;opacity:.38"></div><div class="a" style="left:1237px;top:536px;width:5px;height:2px;background:#569cd6;opacity:.38"></div><div class="a" style="left:1243px;top:536px;width:1px;height:2px;background:#da70d6;opacity:.38"></div><div class="a" style="left:1244px;top:536px;width:7px;height:2px;background:#d4d4d4;opacity:.38"></div><div class="a" style="left:1252px;top:536px;width:8px;height:2px;background:#d4d4d4;opacity:.38"></div><div class="a" style="left:1261px;top:536px;width:10px;height:2px;background:#d4d4d4;opacity:.38"></div><div class="a" style="left:1272px;top:536px;width:3px;height:2px;background:#d4d4d4;opacity:.38"></div><div class="a" style="left:1275px;top:536px;width:1px;height:2px;background:#da70d6;opacity:.38"></div><div class="a" style="left:1277px;top:536px;width:2px;height:2px;background:#569cd6;opacity:.38"></div><div class="a" style="left:1280px;top:536px;width:1px;height:2px;background:#da70d6;opacity:.38"></div><div class="a" style="left:1189px;top:538px;width:12px;height:2px;background:#d4d4d4;opacity:.38"></div><div class="a" style="left:1201px;top:538px;width:1px;height:2px;background:#179fff;opacity:.38"></div><div class="a" style="left:1202px;top:538px;width:9px;height:2px;background:#ce9178;opacity:.38"></div><div class="a" style="left:1212px;top:538px;width:3px;height:2px;background:#ce9178;opacity:.38"></div><div class="a" style="left:1216px;top:538px;width:4px;height:2px;background:#ce9178;opacity:.38"></div><div class="a" style="left:1221px;top:538px;width:4px;height:2px;background:#ce9178;opacity:.38"></div><div class="a" style="left:1226px;top:538px;width:12px;height:2px;background:#ce9178;opacity:.38"></div><div class="a" style="left:1239px;top:538px;width:3px;height:2px;background:#ce9178;opacity:.38"></div><div class="a" style="left:1243px;top:538px;width:4px;height:2px;background:#ce9178;opacity:.38"></div><div class="a" style="left:1248px;top:538px;width:2px;height:2px;background:#ffd700;opacity:.38"></div><div class="a" style="left:1250px;top:538px;width:6px;height:2px;background:#d4d4d4;opacity:.38"></div><div class="a" style="left:1256px;top:538px;width:1px;height:2px;background:#ffd700;opacity:.38"></div><div class="a" style="left:1258px;top:538px;width:3px;height:2px;background:#ce9178;opacity:.38"></div><div class="a" style="left:1262px;top:538px;width:7px;height:2px;background:#ce9178;opacity:.38"></div><div class="a" style="left:1270px;top:538px;width:2px;height:2px;background:#ffd700;opacity:.38"></div><div class="a" style="left:1272px;top:538px;width:9px;height:2px;background:#d4d4d4;opacity:.38"></div><div class="a" style="left:1281px;top:538px;width:1px;height:2px;background:#ffd700;opacity:.38"></div><div class="a" style="left:1282px;top:538px;width:1px;height:2px;background:#ce9178;opacity:.38"></div><div class="a" style="left:1283px;top:538px;width:1px;height:2px;background:#179fff;opacity:.38"></div><div class="a" style="left:1284px;top:538px;width:1px;height:2px;background:#d4d4d4;opacity:.38"></div><div class="a" style="left:1189px;top:542px;width:2px;height:2px;background:#569cd6;opacity:.38"></div><div class="a" style="left:1192px;top:542px;width:1px;height:2px;background:#179fff;opacity:.38"></div><div class="a" style="left:1193px;top:542px;width:8px;height:2px;background:#d4d4d4;opacity:.38"></div><div class="a" style="left:1202px;top:542px;width:2px;height:2px;background:#d4d4d4;opacity:.38"></div><div class="a" style="left:1205px;top:542px;width:14px;height:2px;background:#d4d4d4;opacity:.38"></div><div class="a" style="left:1220px;top:542px;width:3px;height:2px;background:#d4d4d4;opacity:.38"></div><div class="a" style="left:1224px;top:542px;width:1px;height:2px;background:#b5cea8;opacity:.38"></div><div class="a" style="left:1225px;top:542px;width:1px;height:2px;background:#179fff;opacity:.38"></div><div class="a" style="left:1227px;top:542px;width:1px;height:2px;background:#179fff;opacity:.38"></div><div class="a" style="left:1191px;top:544px;width:12px;height:2px;background:#d4d4d4;opacity:.38"></div><div class="a" style="left:1203px;top:544px;width:1px;height:2px;background:#ffd700;opacity:.38"></div><div class="a" style="left:1204px;top:544px;width:3px;height:2px;background:#ce9178;opacity:.38"></div><div class="a" style="left:1208px;top:544px;width:3px;height:2px;background:#ce9178;opacity:.38"></div><div class="a" style="left:1212px;top:544px;width:4px;height:2px;background:#ce9178;opacity:.38"></div><div class="a" style="left:1217px;top:544px;width:2px;height:2px;background:#ce9178;opacity:.38"></div><div class="a" style="left:1220px;top:544px;width:7px;height:2px;background:#ce9178;opacity:.38"></div><div class="a" style="left:1228px;top:544px;width:8px;height:2px;background:#ce9178;opacity:.38"></div><div class="a" style="left:1237px;top:544px;width:5px;height:2px;background:#ce9178;opacity:.38"></div><div class="a" style="left:1243px;top:544px;width:10px;height:2px;background:#ce9178;opacity:.38"></div><div class="a" style="left:1253px;top:544px;width:1px;height:2px;background:#ffd700;opacity:.38"></div><div class="a" style="left:1254px;top:544px;width:1px;height:2px;background:#d4d4d4;opacity:.38"></div><div class="a" style="left:1191px;top:546px;width:6px;height:2px;background:#569cd6;opacity:.38"></div><div class="a" style="left:1197px;top:546px;width:1px;height:2px;background:#d4d4d4;opacity:.38"></div><div class="a" style="left:1189px;top:548px;width:1px;height:2px;background:#179fff;opacity:.38"></div><div class="a" style="left:1189px;top:552px;width:3px;height:2px;background:#569cd6;opacity:.38"></div><div class="a" style="left:1193px;top:552px;width:6px;height:2px;background:#d4d4d4;opacity:.38"></div><div class="a" style="left:1189px;top:554px;width:3px;height:2px;background:#569cd6;opacity:.38"></div><div class="a" style="left:1193px;top:554px;width:1px;height:2px;background:#179fff;opacity:.38"></div><div class="a" style="left:1191px;top:556px;width:5px;height:2px;background:#d4d4d4;opacity:.38"></div><div class="a" style="left:1197px;top:556px;width:1px;height:2px;background:#d4d4d4;opacity:.38"></div><div class="a" style="left:1199px;top:556px;width:5px;height:2px;background:#569cd6;opacity:.38"></div><div class="a" style="left:1205px;top:556px;width:14px;height:2px;background:#d4d4d4;opacity:.38"></div><div class="a" style="left:1219px;top:556px;width:2px;height:2px;background:#ffd700;opacity:.38"></div><div class="a" style="left:1221px;top:556px;width:1px;height:2px;background:#d4d4d4;opacity:.38"></div><div class="a" style="left:1191px;top:558px;width:12px;height:2px;background:#d4d4d4;opacity:.38"></div><div class="a" style="left:1203px;top:558px;width:1px;height:2px;background:#ffd700;opacity:.38"></div><div class="a" style="left:1204px;top:558px;width:13px;height:2px;background:#ce9178;opacity:.38"></div><div class="a" style="left:1218px;top:558px;width:9px;height:2px;background:#ce9178;opacity:.38"></div><div class="a" style="left:1228px;top:558px;width:2px;height:2px;background:#ce9178;opacity:.38"></div><div class="a" style="left:1231px;top:558px;width:5px;height:2px;background:#ce9178;opacity:.38"></div><div class="a" style="left:1237px;top:558px;width:3px;height:2px;background:#ce9178;opacity:.38"></div><div class="a" style="left:1241px;top:558px;width:35px;height:2px;background:#ce9178;opacity:.38"></div><div class="a" style="left:1276px;top:558px;width:1px;height:2px;background:#ffd700;opacity:.38"></div><div class="a" style="left:1277px;top:558px;width:1px;height:2px;background:#d4d4d4;opacity:.38"></div><div class="a" style="left:1189px;top:560px;width:1px;height:2px;background:#179fff;opacity:.38"></div><div class="a" style="left:1191px;top:560px;width:5px;height:2px;background:#569cd6;opacity:.38"></div><div class="a" style="left:1197px;top:560px;width:1px;height:2px;background:#179fff;opacity:.38"></div><div class="a" style="left:1198px;top:560px;width:1px;height:2px;background:#d4d4d4;opacity:.38"></div><div class="a" style="left:1199px;top:560px;width:1px;height:2px;background:#179fff;opacity:.38"></div><div class="a" style="left:1201px;top:560px;width:1px;height:2px;background:#179fff;opacity:.38"></div><div class="a" style="left:1191px;top:562px;width:12px;height:2px;background:#d4d4d4;opacity:.38"></div><div class="a" style="left:1203px;top:562px;width:1px;height:2px;background:#ffd700;opacity:.38"></div><div class="a" style="left:1204px;top:562px;width:6px;height:2px;background:#ce9178;opacity:.38"></div><div class="a" style="left:1211px;top:562px;width:7px;height:2px;background:#ce9178;opacity:.38"></div><div class="a" style="left:1219px;top:562px;width:4px;height:2px;background:#ce9178;opacity:.38"></div><div class="a" style="left:1224px;top:562px;width:5px;height:2px;background:#ce9178;opacity:.38"></div><div class="a" style="left:1230px;top:562px;width:2px;height:2px;background:#da70d6;opacity:.38"></div><div class="a" style="left:1232px;top:562px;width:1px;height:2px;background:#d4d4d4;opacity:.38"></div><div class="a" style="left:1233px;top:562px;width:1px;height:2px;background:#da70d6;opacity:.38"></div><div class="a" style="left:1234px;top:562px;width:1px;height:2px;background:#ce9178;opacity:.38"></div><div class="a" style="left:1235px;top:562px;width:1px;height:2px;background:#ffd700;opacity:.38"></div><div class="a" style="left:1236px;top:562px;width:1px;height:2px;background:#d4d4d4;opacity:.38"></div><div class="a" style="left:1191px;top:564px;width:5px;height:2px;background:#569cd6;opacity:.38"></div><div class="a" style="left:1197px;top:564px;width:2px;height:2px;background:#d4d4d4;opacity:.38"></div><div class="a" style="left:1189px;top:566px;width:1px;height:2px;background:#179fff;opacity:.38"></div><div class="a" style="left:1189px;top:570px;width:3px;height:2px;background:#569cd6;opacity:.38"></div><div class="a" style="left:1193px;top:570px;width:1px;height:2px;background:#179fff;opacity:.38"></div><div class="a" style="left:1191px;top:572px;width:2px;height:2px;background:#6a9955;opacity:.38"></div><div class="a" style="left:1194px;top:572px;width:3px;height:2px;background:#6a9955;opacity:.38"></div><div class="a" style="left:1198px;top:572px;width:3px;height:2px;background:#6a9955;opacity:.38"></div><div class="a" style="left:1202px;top:572px;width:4px;height:2px;background:#6a9955;opacity:.38"></div><div class="a" style="left:1207px;top:572px;width:8px;height:2px;background:#6a9955;opacity:.38"></div><div class="a" style="left:1216px;top:572px;width:3px;height:2px;background:#6a9955;opacity:.38"></div><div class="a" style="left:1220px;top:572px;width:7px;height:2px;background:#6a9955;opacity:.38"></div><div class="a" style="left:1228px;top:572px;width:3px;height:2px;background:#6a9955;opacity:.38"></div><div class="a" style="left:1232px;top:572px;width:4px;height:2px;background:#6a9955;opacity:.38"></div><div class="a" style="left:1237px;top:572px;width:4px;height:2px;background:#6a9955;opacity:.38"></div><div class="a" style="left:1191px;top:574px;width:5px;height:2px;background:#569cd6;opacity:.38"></div><div class="a" style="left:1197px;top:574px;width:7px;height:2px;background:#d4d4d4;opacity:.38"></div><div class="a" style="left:1205px;top:574px;width:1px;height:2px;background:#d4d4d4;opacity:.38"></div><div class="a" style="left:1207px;top:574px;width:10px;height:2px;background:#ce9178;opacity:.38"></div><div class="a" style="left:1217px;top:574px;width:2px;height:2px;background:#ffd700;opacity:.38"></div><div class="a" style="left:1219px;top:574px;width:6px;height:2px;background:#d4d4d4;opacity:.38"></div><div class="a" style="left:1225px;top:574px;width:1px;height:2px;background:#ffd700;opacity:.38"></div><div class="a" style="left:1226px;top:574px;width:3px;height:2px;background:#ce9178;opacity:.38"></div><div class="a" style="left:1229px;top:574px;width:1px;height:2px;background:#d4d4d4;opacity:.38"></div><div class="a" style="left:1191px;top:576px;width:12px;height:2px;background:#d4d4d4;opacity:.38"></div><div class="a" style="left:1203px;top:576px;width:1px;height:2px;background:#ffd700;opacity:.38"></div><div class="a" style="left:1204px;top:576px;width:9px;height:2px;background:#ce9178;opacity:.38"></div><div class="a" style="left:1214px;top:576px;width:5px;height:2px;background:#ce9178;opacity:.38"></div><div class="a" style="left:1220px;top:576px;width:3px;height:2px;background:#ce9178;opacity:.38"></div><div class="a" style="left:1224px;top:576px;width:4px;height:2px;background:#ce9178;opacity:.38"></div><div class="a" style="left:1229px;top:576px;width:9px;height:2px;background:#ce9178;opacity:.38"></div><div class="a" style="left:1239px;top:576px;width:2px;height:2px;background:#da70d6;opacity:.38"></div><div class="a" style="left:1241px;top:576px;width:7px;height:2px;background:#d4d4d4;opacity:.38"></div><div class="a" style="left:1248px;top:576px;width:1px;height:2px;background:#da70d6;opacity:.38"></div><div class="a" style="left:1249px;top:576px;width:1px;height:2px;background:#ce9178;opacity:.38"></div><div class="a" style="left:1250px;top:576px;width:1px;height:2px;background:#ffd700;opacity:.38"></div><div class="a" style="left:1251px;top:576px;width:1px;height:2px;background:#d4d4d4;opacity:.38"></div><div class="a" style="left:1191px;top:580px;width:5px;height:2px;background:#569cd6;opacity:.38"></div><div class="a" style="left:1197px;top:580px;width:4px;height:2px;background:#d4d4d4;opacity:.38"></div><div class="a" style="left:1202px;top:580px;width:1px;height:2px;background:#d4d4d4;opacity:.38"></div><div class="a" style="left:1204px;top:580px;width:5px;height:2px;background:#569cd6;opacity:.38"></div><div class="a" style="left:1210px;top:580px;width:10px;height:2px;background:#d4d4d4;opacity:.38"></div><div class="a" style="left:1220px;top:580px;width:1px;height:2px;background:#ffd700;opacity:.38"></div><div class="a" style="left:1221px;top:580px;width:7px;height:2px;background:#d4d4d4;opacity:.38"></div><div class="a" style="left:1228px;top:580px;width:1px;height:2px;background:#ffd700;opacity:.38"></div><div class="a" style="left:1229px;top:580px;width:1px;height:2px;background:#d4d4d4;opacity:.38"></div><div class="a" style="left:1191px;top:584px;width:2px;height:2px;background:#569cd6;opacity:.38"></div><div class="a" style="left:1194px;top:584px;width:1px;height:2px;background:#ffd700;opacity:.38"></div><div class="a" style="left:1195px;top:584px;width:12px;height:2px;background:#d4d4d4;opacity:.38"></div><div class="a" style="left:1207px;top:584px;width:1px;height:2px;background:#ffd700;opacity:.38"></div><div class="a" style="left:1209px;top:584px;width:1px;height:2px;background:#ffd700;opacity:.38"></div><div class="a" style="left:1193px;top:586px;width:12px;height:2px;background:#d4d4d4;opacity:.38"></div><div class="a" style="left:1205px;top:586px;width:1px;height:2px;background:#da70d6;opacity:.38"></div><div class="a" style="left:1206px;top:586px;width:3px;height:2px;background:#ce9178;opacity:.38"></div><div class="a" style="left:1210px;top:586px;width:3px;height:2px;background:#ce9178;opacity:.38"></div><div class="a" style="left:1214px;top:586px;width:4px;height:2px;background:#ce9178;opacity:.38"></div><div class="a" style="left:1219px;top:586px;width:5px;height:2px;background:#ce9178;opacity:.38"></div><div class="a" style="left:1225px;top:586px;width:3px;height:2px;background:#ce9178;opacity:.38"></div><div class="a" style="left:1229px;top:586px;width:4px;height:2px;background:#ce9178;opacity:.38"></div><div class="a" style="left:1234px;top:586px;width:2px;height:2px;background:#179fff;opacity:.38"></div><div class="a" style="left:1236px;top:586px;width:6px;height:2px;background:#d4d4d4;opacity:.38"></div><div class="a" style="left:1242px;top:586px;width:1px;height:2px;background:#179fff;opacity:.38"></div><div class="a" style="left:1244px;top:586px;width:2px;height:2px;background:#ce9178;opacity:.38"></div><div class="a" style="left:1247px;top:586px;width:7px;height:2px;background:#ce9178;opacity:.38"></div><div class="a" style="left:1254px;top:586px;width:1px;height:2px;background:#da70d6;opacity:.38"></div><div class="a" style="left:1255px;top:586px;width:1px;height:2px;background:#d4d4d4;opacity:.38"></div><div class="a" style="left:1193px;top:588px;width:6px;height:2px;background:#569cd6;opacity:.38"></div><div class="a" style="left:1199px;top:588px;width:1px;height:2px;background:#d4d4d4;opacity:.38"></div><div class="a" style="left:1191px;top:590px;width:1px;height:2px;background:#ffd700;opacity:.38"></div><div class="a" style="left:1191px;top:594px;width:2px;height:2px;background:#6a9955;opacity:.38"></div><div class="a" style="left:1194px;top:594px;width:3px;height:2px;background:#6a9955;opacity:.38"></div><div class="a" style="left:1198px;top:594px;width:3px;height:2px;background:#6a9955;opacity:.38"></div><div class="a" style="left:1202px;top:594px;width:6px;height:2px;background:#6a9955;opacity:.38"></div><div class="a" style="left:1209px;top:594px;width:3px;height:2px;background:#6a9955;opacity:.38"></div><div class="a" style="left:1213px;top:594px;width:5px;height:2px;background:#6a9955;opacity:.38"></div><div class="a" style="left:1219px;top:594px;width:4px;height:2px;background:#6a9955;opacity:.38"></div><div class="a" style="left:1191px;top:596px;width:5px;height:2px;background:#569cd6;opacity:.38"></div><div class="a" style="left:1197px;top:596px;width:6px;height:2px;background:#d4d4d4;opacity:.38"></div><div class="a" style="left:1204px;top:596px;width:1px;height:2px;background:#d4d4d4;opacity:.38"></div><div class="a" style="left:1206px;top:596px;width:5px;height:2px;background:#569cd6;opacity:.38"></div><div class="a" style="left:1212px;top:596px;width:10px;height:2px;background:#d4d4d4;opacity:.38"></div><div class="a" style="left:1222px;top:596px;width:1px;height:2px;background:#ffd700;opacity:.38"></div><div class="a" style="left:1223px;top:596px;width:4px;height:2px;background:#d4d4d4;opacity:.38"></div><div class="a" style="left:1227px;top:596px;width:1px;height:2px;background:#ffd700;opacity:.38"></div><div class="a" style="left:1228px;top:596px;width:1px;height:2px;background:#d4d4d4;opacity:.38"></div><div class="a" style="left:1191px;top:600px;width:2px;height:2px;background:#6a9955;opacity:.38"></div><div class="a" style="left:1194px;top:600px;width:4px;height:2px;background:#6a9955;opacity:.38"></div><div class="a" style="left:1199px;top:600px;width:3px;height:2px;background:#6a9955;opacity:.38"></div><div class="a" style="left:1203px;top:600px;width:6px;height:2px;background:#6a9955;opacity:.38"></div><div class="a" style="left:1210px;top:600px;width:3px;height:2px;background:#6a9955;opacity:.38"></div><div class="a" style="left:1214px;top:600px;width:8px;height:2px;background:#6a9955;opacity:.38"></div><div class="a" style="left:1223px;top:600px;width:7px;height:2px;background:#6a9955;opacity:.38"></div><div class="a" style="left:1191px;top:602px;width:3px;height:2px;background:#569cd6;opacity:.38"></div><div class="a" style="left:1195px;top:602px;width:1px;height:2px;background:#ffd700;opacity:.38"></div><div class="a" style="left:1196px;top:602px;width:3px;height:2px;background:#569cd6;opacity:.38"></div><div class="a" style="left:1200px;top:602px;width:1px;height:2px;background:#d4d4d4;opacity:.38"></div><div class="a" style="left:1202px;top:602px;width:1px;height:2px;background:#d4d4d4;opacity:.38"></div><div class="a" style="left:1204px;top:602px;width:1px;height:2px;background:#b5cea8;opacity:.38"></div><div class="a" style="left:1205px;top:602px;width:1px;height:2px;background:#d4d4d4;opacity:.38"></div><div class="a" style="left:1207px;top:602px;width:1px;height:2px;background:#d4d4d4;opacity:.38"></div><div class="a" style="left:1209px;top:602px;width:1px;height:2px;background:#d4d4d4;opacity:.38"></div><div class="a" style="left:1211px;top:602px;width:14px;height:2px;background:#d4d4d4;opacity:.38"></div><div class="a" style="left:1226px;top:602px;width:3px;height:2px;background:#d4d4d4;opacity:.38"></div><div class="a" style="left:1229px;top:602px;width:1px;height:2px;background:#ffd700;opacity:.38"></div><div class="a" style="left:1231px;top:602px;width:1px;height:2px;background:#ffd700;opacity:.38"></div><div class="a" style="left:1193px;top:604px;width:3px;height:2px;background:#569cd6;opacity:.38"></div><div class="a" style="left:1197px;top:604px;width:1px;height:2px;background:#da70d6;opacity:.38"></div><div class="a" style="left:1195px;top:606px;width:5px;height:2px;background:#569cd6;opacity:.38"></div><div class="a" style="left:1201px;top:606px;width:4px;height:2px;background:#d4d4d4;opacity:.38"></div><div class="a" style="left:1206px;top:606px;width:1px;height:2px;background:#d4d4d4;opacity:.38"></div><div class="a" style="left:1208px;top:606px;width:10px;height:2px;background:#d4d4d4;opacity:.38"></div><div class="a" style="left:1218px;top:606px;width:1px;height:2px;background:#179fff;opacity:.38"></div><div class="a" style="left:1219px;top:606px;width:6px;height:2px;background:#d4d4d4;opacity:.38"></div><div class="a" style="left:1225px;top:606px;width:1px;height:2px;background:#ffd700;opacity:.38"></div><div class="a" style="left:1226px;top:606px;width:1px;height:2px;background:#d4d4d4;opacity:.38"></div><div class="a" style="left:1227px;top:606px;width:1px;height:2px;background:#ffd700;opacity:.38"></div><div class="a" style="left:1228px;top:606px;width:1px;height:2px;background:#179fff;opacity:.38"></div><div class="a" style="left:1229px;top:606px;width:1px;height:2px;background:#d4d4d4;opacity:.38"></div><div class="a" style="left:1195px;top:608px;width:3px;height:2px;background:#569cd6;opacity:.38"></div><div class="a" style="left:1199px;top:608px;width:7px;height:2px;background:#d4d4d4;opacity:.38"></div><div class="a" style="left:1207px;top:608px;width:1px;height:2px;background:#d4d4d4;opacity:.38"></div><div class="a" style="left:1209px;top:608px;width:5px;height:2px;background:#569cd6;opacity:.38"></div><div class="a" style="left:1214px;top:608px;width:1px;height:2px;background:#d4d4d4;opacity:.38"></div><div class="a" style="left:1195px;top:612px;width:2px;height:2px;background:#6a9955;opacity:.38"></div><div class="a" style="left:1198px;top:612px;width:4px;height:2px;background:#6a9955;opacity:.38"></div><div class="a" style="left:1203px;top:612px;width:3px;height:2px;background:#6a9955;opacity:.38"></div><div class="a" style="left:1207px;top:612px;width:6px;height:2px;background:#6a9955;opacity:.38"></div><div class="a" style="left:1214px;top:612px;width:3px;height:2px;background:#6a9955;opacity:.38"></div><div class="a" style="left:1218px;top:612px;width:8px;height:2px;background:#6a9955;opacity:.38"></div><div class="a" style="left:1227px;top:612px;width:7px;height:2px;background:#6a9955;opacity:.38"></div><div class="a" style="left:1235px;top:612px;width:4px;height:2px;background:#6a9955;opacity:.38"></div><div class="a" style="left:1195px;top:614px;width:2px;height:2px;background:#569cd6;opacity:.38"></div><div class="a" style="left:1198px;top:614px;width:1px;height:2px;background:#179fff;opacity:.38"></div><div class="a" style="left:1199px;top:614px;width:9px;height:2px;background:#d4d4d4;opacity:.38"></div><div class="a" style="left:1209px;top:614px;width:2px;height:2px;background:#d4d4d4;opacity:.38"></div><div class="a" style="left:1212px;top:614px;width:13px;height:2px;background:#d4d4d4;opacity:.38"></div><div class="a" style="left:1225px;top:614px;width:1px;height:2px;background:#ffd700;opacity:.38"></div><div class="a" style="left:1226px;top:614px;width:9px;height:2px;background:#d4d4d4;opacity:.38"></div><div class="a" style="left:1235px;top:614px;width:1px;height:2px;background:#ffd700;opacity:.38"></div><div class="a" style="left:1236px;top:614px;width:1px;height:2px;background:#179fff;opacity:.38"></div><div class="a" style="left:1238px;top:614px;width:1px;height:2px;background:#179fff;opacity:.38"></div><div class="a" style="left:1197px;top:616px;width:3px;height:2px;background:#569cd6;opacity:.38"></div><div class="a" style="left:1201px;top:616px;width:1px;height:2px;background:#ffd700;opacity:.38"></div><div class="a" style="left:1202px;top:616px;width:5px;height:2px;background:#569cd6;opacity:.38"></div><div class="a" style="left:1208px;top:616px;width:5px;height:2px;background:#d4d4d4;opacity:.38"></div><div class="a" style="left:1214px;top:616px;width:2px;height:2px;background:#569cd6;opacity:.38"></div><div class="a" style="left:1217px;top:616px;width:9px;height:2px;background:#d4d4d4;opacity:.38"></div><div class="a" style="left:1226px;top:616px;width:1px;height:2px;background:#ffd700;opacity:.38"></div><div class="a" style="left:1228px;top:616px;width:1px;height:2px;background:#ffd700;opacity:.38"></div><div class="a" style="left:1199px;top:618px;width:2px;height:2px;background:#569cd6;opacity:.38"></div><div class="a" style="left:1202px;top:618px;width:1px;height:2px;background:#da70d6;opacity:.38"></div><div class="a" style="left:1203px;top:618px;width:6px;height:2px;background:#d4d4d4;opacity:.38"></div><div class="a" style="left:1209px;top:618px;width:1px;height:2px;background:#179fff;opacity:.38"></div><div class="a" style="left:1210px;top:618px;width:11px;height:2px;background:#d4d4d4;opacity:.38"></div><div class="a" style="left:1221px;top:618px;width:1px;height:2px;background:#179fff;opacity:.38"></div><div class="a" style="left:1223px;top:618px;width:3px;height:2px;background:#d4d4d4;opacity:.38"></div><div class="a" style="left:1227px;top:618px;width:6px;height:2px;background:#d4d4d4;opacity:.38"></div><div class="a" style="left:1233px;top:618px;width:1px;height:2px;background:#179fff;opacity:.38"></div><div class="a" style="left:1234px;top:618px;width:9px;height:2px;background:#d4d4d4;opacity:.38"></div><div class="a" style="left:1243px;top:618px;width:1px;height:2px;background:#179fff;opacity:.38"></div><div class="a" style="left:1244px;top:618px;width:1px;height:2px;background:#da70d6;opacity:.38"></div><div class="a" style="left:1246px;top:618px;width:1px;height:2px;background:#da70d6;opacity:.38"></div><div class="a" style="left:1201px;top:620px;width:17px;height:2px;background:#d4d4d4;opacity:.38"></div><div class="a" style="left:1219px;top:620px;width:1px;height:2px;background:#d4d4d4;opacity:.38"></div><div class="a" style="left:1221px;top:620px;width:4px;height:2px;background:#569cd6;opacity:.38"></div><div class="a" style="left:1225px;top:620px;width:1px;height:2px;background:#d4d4d4;opacity:.38"></div><div class="a" style="left:1201px;top:622px;width:7px;height:2px;background:#d4d4d4;opacity:.38"></div><div class="a" style="left:1209px;top:622px;width:1px;height:2px;background:#d4d4d4;opacity:.38"></div><div class="a" style="left:1211px;top:622px;width:4px;height:2px;background:#569cd6;opacity:.38"></div><div class="a" style="left:1215px;top:622px;width:1px;height:2px;background:#d4d4d4;opacity:.38"></div><div class="a" style="left:1199px;top:624px;width:1px;height:2px;background:#da70d6;opacity:.38"></div><div class="a" style="left:1197px;top:626px;width:1px;height:2px;background:#ffd700;opacity:.38"></div><div class="a" style="left:1195px;top:628px;width:1px;height:2px;background:#179fff;opacity:.38"></div><div class="a" style="left:1195px;top:632px;width:2px;height:2px;background:#6a9955;opacity:.38"></div><div class="a" style="left:1198px;top:632px;width:2px;height:2px;background:#6a9955;opacity:.38"></div><div class="a" style="left:1201px;top:632px;width:2px;height:2px;background:#6a9955;opacity:.38"></div><div class="a" style="left:1204px;top:632px;width:5px;height:2px;background:#6a9955;opacity:.38"></div><div class="a" style="left:1210px;top:632px;width:3px;height:2px;background:#6a9955;opacity:.38"></div><div class="a" style="left:1214px;top:632px;width:7px;height:2px;background:#6a9955;opacity:.38"></div><div class="a" style="left:1222px;top:632px;width:3px;height:2px;background:#6a9955;opacity:.38"></div><div class="a" style="left:1226px;top:632px;width:6px;height:2px;background:#6a9955;opacity:.38"></div><div class="a" style="left:1233px;top:632px;width:4px;height:2px;background:#6a9955;opacity:.38"></div><div class="a" style="left:1238px;top:632px;width:2px;height:2px;background:#6a9955;opacity:.38"></div><div class="a" style="left:1241px;top:632px;width:4px;height:2px;background:#6a9955;opacity:.38"></div><div class="a" style="left:1246px;top:632px;width:2px;height:2px;background:#6a9955;opacity:.38"></div><div class="a" style="left:1249px;top:632px;width:5px;height:2px;background:#6a9955;opacity:.38"></div><div class="a" style="left:1195px;top:634px;width:2px;height:2px;background:#569cd6;opacity:.38"></div><div class="a" style="left:1198px;top:634px;width:1px;height:2px;background:#179fff;opacity:.38"></div><div class="a" style="left:1199px;top:634px;width:7px;height:2px;background:#d4d4d4;opacity:.38"></div><div class="a" style="left:1206px;top:634px;width:1px;height:2px;background:#179fff;opacity:.38"></div><div class="a" style="left:1208px;top:634px;width:1px;height:2px;background:#179fff;opacity:.38"></div><div class="a" style="left:1197px;top:636px;width:5px;height:2px;background:#569cd6;opacity:.38"></div><div class="a" style="left:1203px;top:636px;width:11px;height:2px;background:#d4d4d4;opacity:.38"></div><div class="a" style="left:1214px;top:636px;width:1px;height:2px;background:#ffd700;opacity:.38"></div><div class="a" style="left:1215px;top:636px;width:4px;height:2px;background:#d4d4d4;opacity:.38"></div><div class="a" style="left:1219px;top:636px;width:1px;height:2px;background:#da70d6;opacity:.38"></div><div class="a" style="left:1220px;top:636px;width:1px;height:2px;background:#d4d4d4;opacity:.38"></div><div class="a" style="left:1221px;top:636px;width:1px;height:2px;background:#da70d6;opacity:.38"></div><div class="a" style="left:1222px;top:636px;width:1px;height:2px;background:#d4d4d4;opacity:.38"></div><div class="a" style="left:1224px;top:636px;width:6px;height:2px;background:#d4d4d4;opacity:.38"></div><div class="a" style="left:1230px;top:636px;width:1px;height:2px;background:#da70d6;opacity:.38"></div><div class="a" style="left:1231px;top:636px;width:3px;height:2px;background:#d4d4d4;opacity:.38"></div><div class="a" style="left:1234px;top:636px;width:1px;height:2px;background:#da70d6;opacity:.38"></div><div class="a" style="left:1235px;top:636px;width:1px;height:2px;background:#d4d4d4;opacity:.38"></div><div class="a" style="left:1237px;top:636px;width:14px;height:2px;background:#d4d4d4;opacity:.38"></div><div class="a" style="left:1251px;top:636px;width:1px;height:2px;background:#da70d6;opacity:.38"></div><div class="a" style="left:1252px;top:636px;width:4px;height:2px;background:#d4d4d4;opacity:.38"></div><div class="a" style="left:1256px;top:636px;width:1px;height:2px;background:#da70d6;opacity:.38"></div><div class="a" style="left:1257px;top:636px;width:1px;height:2px;background:#ffd700;opacity:.38"></div><div class="a" style="left:1258px;top:636px;width:1px;height:2px;background:#d4d4d4;opacity:.38"></div><div class="a" style="left:1197px;top:638px;width:12px;height:2px;background:#d4d4d4;opacity:.38"></div><div class="a" style="left:1209px;top:638px;width:1px;height:2px;background:#ffd700;opacity:.38"></div><div class="a" style="left:1210px;top:638px;width:8px;height:2px;background:#ce9178;opacity:.38"></div><div class="a" style="left:1219px;top:638px;width:3px;height:2px;background:#ce9178;opacity:.38"></div><div class="a" style="left:1223px;top:638px;width:4px;height:2px;background:#ce9178;opacity:.38"></div><div class="a" style="left:1228px;top:638px;width:4px;height:2px;background:#ce9178;opacity:.38"></div><div class="a" style="left:1233px;top:638px;width:12px;height:2px;background:#ce9178;opacity:.38"></div><div class="a" style="left:1246px;top:638px;width:3px;height:2px;background:#ce9178;opacity:.38"></div><div class="a" style="left:1250px;top:638px;width:7px;height:2px;background:#ce9178;opacity:.38"></div><div class="a" style="left:1258px;top:638px;width:2px;height:2px;background:#da70d6;opacity:.38"></div><div class="a" style="left:1260px;top:638px;width:9px;height:2px;background:#d4d4d4;opacity:.38"></div><div class="a" style="left:1269px;top:638px;width:1px;height:2px;background:#da70d6;opacity:.38"></div><div class="a" style="left:1271px;top:638px;width:2px;height:2px;background:#ce9178;opacity:.38"></div><div class="a" style="left:1274px;top:638px;width:3px;height:2px;background:#ce9178;opacity:.38"></div><div class="a" style="left:1278px;top:638px;width:2px;height:2px;background:#da70d6;opacity:.38"></div><div class="a" style="left:1280px;top:638px;width:4px;height:2px;background:#d4d4d4;opacity:.38"></div><div class="a" style="left:1284px;top:638px;width:1px;height:2px;background:#179fff;opacity:.38"></div><div class="a" style="left:1285px;top:638px;width:1px;height:2px;background:#d4d4d4;opacity:.38"></div><div class="a" style="left:1286px;top:638px;width:1px;height:2px;background:#179fff;opacity:.38"></div><div class="a" style="left:1287px;top:638px;width:1px;height:2px;background:#da70d6;opacity:.38"></div><div class="a" style="left:1288px;top:638px;width:1px;height:2px;background:#ce9178;opacity:.38"></div><div class="a" style="left:1289px;top:638px;width:1px;height:2px;background:#ffd700;opacity:.38"></div><div class="a" style="left:1195px;top:640px;width:1px;height:2px;background:#179fff;opacity:.38"></div><div class="a" style="left:1193px;top:642px;width:1px;height:2px;background:#da70d6;opacity:.38"></div><div class="a" style="left:1195px;top:642px;width:5px;height:2px;background:#569cd6;opacity:.38"></div><div class="a" style="left:1201px;top:642px;width:1px;height:2px;background:#da70d6;opacity:.38"></div><div class="a" style="left:1202px;top:642px;width:1px;height:2px;background:#d4d4d4;opacity:.38"></div><div class="a" style="left:1203px;top:642px;width:1px;height:2px;background:#da70d6;opacity:.38"></div><div class="a" style="left:1205px;top:642px;width:1px;height:2px;background:#da70d6;opacity:.38"></div><div class="a" style="left:1195px;top:644px;width:12px;height:2px;background:#d4d4d4;opacity:.38"></div><div class="a" style="left:1207px;top:644px;width:1px;height:2px;background:#179fff;opacity:.38"></div><div class="a" style="left:1208px;top:644px;width:7px;height:2px;background:#ce9178;opacity:.38"></div><div class="a" style="left:1216px;top:644px;width:2px;height:2px;background:#ce9178;opacity:.38"></div><div class="a" style="left:1219px;top:644px;width:5px;height:2px;background:#ce9178;opacity:.38"></div><div class="a" style="left:1225px;top:644px;width:2px;height:2px;background:#ce9178;opacity:.38"></div><div class="a" style="left:1228px;top:644px;width:6px;height:2px;background:#ce9178;opacity:.38"></div><div class="a" style="left:1235px;top:644px;width:3px;height:2px;background:#ce9178;opacity:.38"></div><div class="a" style="left:1239px;top:644px;width:4px;height:2px;background:#ce9178;opacity:.38"></div><div class="a" style="left:1244px;top:644px;width:4px;height:2px;background:#ce9178;opacity:.38"></div><div class="a" style="left:1249px;top:644px;width:5px;height:2px;background:#ce9178;opacity:.38"></div><div class="a" style="left:1255px;top:644px;width:2px;height:2px;background:#ffd700;opacity:.38"></div><div class="a" style="left:1257px;top:644px;width:1px;height:2px;background:#d4d4d4;opacity:.38"></div><div class="a" style="left:1258px;top:644px;width:1px;height:2px;background:#ffd700;opacity:.38"></div><div class="a" style="left:1259px;top:644px;width:1px;height:2px;background:#ce9178;opacity:.38"></div><div class="a" style="left:1260px;top:644px;width:1px;height:2px;background:#179fff;opacity:.38"></div><div class="a" style="left:1261px;top:644px;width:1px;height:2px;background:#d4d4d4;opacity:.38"></div><div class="a" style="left:1193px;top:646px;width:1px;height:2px;background:#da70d6;opacity:.38"></div><div class="a" style="left:1191px;top:648px;width:1px;height:2px;background:#ffd700;opacity:.38"></div><div class="a" style="left:1191px;top:652px;width:12px;height:2px;background:#d4d4d4;opacity:.38"></div><div class="a" style="left:1203px;top:652px;width:1px;height:2px;background:#ffd700;opacity:.38"></div><div class="a" style="left:1204px;top:652px;width:13px;height:2px;background:#ce9178;opacity:.38"></div><div class="a" style="left:1218px;top:652px;width:7px;height:2px;background:#ce9178;opacity:.38"></div><div class="a" style="left:1226px;top:652px;width:3px;height:2px;background:#ce9178;opacity:.38"></div><div class="a" style="left:1230px;top:652px;width:4px;height:2px;background:#ce9178;opacity:.38"></div><div class="a" style="left:1235px;top:652px;width:4px;height:2px;background:#ce9178;opacity:.38"></div><div class="a" style="left:1240px;top:652px;width:13px;height:2px;background:#ce9178;opacity:.38"></div><div class="a" style="left:1254px;top:652px;width:3px;height:2px;background:#ce9178;opacity:.38"></div><div class="a" style="left:1258px;top:652px;width:4px;height:2px;background:#ce9178;opacity:.38"></div><div class="a" style="left:1263px;top:652px;width:2px;height:2px;background:#da70d6;opacity:.38"></div><div class="a" style="left:1265px;top:652px;width:6px;height:2px;background:#d4d4d4;opacity:.38"></div><div class="a" style="left:1271px;top:652px;width:1px;height:2px;background:#da70d6;opacity:.38"></div><div class="a" style="left:1272px;top:652px;width:1px;height:2px;background:#ce9178;opacity:.38"></div><div class="a" style="left:1273px;top:652px;width:1px;height:2px;background:#ffd700;opacity:.38"></div><div class="a" style="left:1274px;top:652px;width:1px;height:2px;background:#d4d4d4;opacity:.38"></div><div class="a" style="left:1189px;top:654px;width:1px;height:2px;background:#179fff;opacity:.38"></div><div class="a" style="left:1191px;top:654px;width:5px;height:2px;background:#569cd6;opacity:.38"></div><div class="a" style="left:1197px;top:654px;width:1px;height:2px;background:#179fff;opacity:.38"></div><div class="a" style="left:1198px;top:654px;width:1px;height:2px;background:#d4d4d4;opacity:.38"></div><div class="a" style="left:1199px;top:654px;width:1px;height:2px;background:#179fff;opacity:.38"></div><div class="a" style="left:1201px;top:654px;width:1px;height:2px;background:#179fff;opacity:.38"></div><div class="a" style="left:1191px;top:656px;width:12px;height:2px;background:#d4d4d4;opacity:.38"></div><div class="a" style="left:1203px;top:656px;width:1px;height:2px;background:#ffd700;opacity:.38"></div><div class="a" style="left:1204px;top:656px;width:7px;height:2px;background:#ce9178;opacity:.38"></div><div class="a" style="left:1212px;top:656px;width:8px;height:2px;background:#ce9178;opacity:.38"></div><div class="a" style="left:1221px;top:656px;width:3px;height:2px;background:#ce9178;opacity:.38"></div><div class="a" style="left:1225px;top:656px;width:4px;height:2px;background:#ce9178;opacity:.38"></div><div class="a" style="left:1230px;top:656px;width:2px;height:2px;background:#ce9178;opacity:.38"></div><div class="a" style="left:1233px;top:656px;width:5px;height:2px;background:#ce9178;opacity:.38"></div><div class="a" style="left:1239px;top:656px;width:2px;height:2px;background:#da70d6;opacity:.38"></div><div class="a" style="left:1241px;top:656px;width:1px;height:2px;background:#d4d4d4;opacity:.38"></div><div class="a" style="left:1242px;top:656px;width:1px;height:2px;background:#da70d6;opacity:.38"></div><div class="a" style="left:1243px;top:656px;width:1px;height:2px;background:#ce9178;opacity:.38"></div><div class="a" style="left:1244px;top:656px;width:1px;height:2px;background:#ffd700;opacity:.38"></div><div class="a" style="left:1245px;top:656px;width:1px;height:2px;background:#d4d4d4;opacity:.38"></div><div class="a" style="left:1191px;top:658px;width:5px;height:2px;background:#569cd6;opacity:.38"></div><div class="a" style="left:1197px;top:658px;width:2px;height:2px;background:#d4d4d4;opacity:.38"></div><div class="a" style="left:1189px;top:660px;width:1px;height:2px;background:#179fff;opacity:.38"></div><div class="a" style="left:1187px;top:662px;width:1px;height:2px;background:#da70d6;opacity:.38"></div><div class="a" style="left:1188px;top:662px;width:1px;height:2px;background:#d4d4d4;opacity:.38"></div>
<div class="a" style="left:2437px;top:110px;width:6px;height:2px;background:#569cd6;opacity:.38"></div><div class="a" style="left:2444px;top:110px;width:1px;height:2px;background:#ffd700;opacity:.38"></div><div class="a" style="left:2446px;top:110px;width:14px;height:2px;background:#d4d4d4;opacity:.38"></div><div class="a" style="left:2461px;top:110px;width:1px;height:2px;background:#ffd700;opacity:.38"></div><div class="a" style="left:2463px;top:110px;width:4px;height:2px;background:#569cd6;opacity:.38"></div><div class="a" style="left:2468px;top:110px;width:22px;height:2px;background:#ce9178;opacity:.38"></div><div class="a" style="left:2490px;top:110px;width:1px;height:2px;background:#d4d4d4;opacity:.38"></div><div class="a" style="left:2437px;top:112px;width:6px;height:2px;background:#569cd6;opacity:.38"></div><div class="a" style="left:2444px;top:112px;width:1px;height:2px;background:#ffd700;opacity:.38"></div><div class="a" style="left:2446px;top:112px;width:6px;height:2px;background:#d4d4d4;opacity:.38"></div><div class="a" style="left:2453px;top:112px;width:1px;height:2px;background:#ffd700;opacity:.38"></div><div class="a" style="left:2455px;top:112px;width:4px;height:2px;background:#569cd6;opacity:.38"></div><div class="a" style="left:2460px;top:112px;width:14px;height:2px;background:#ce9178;opacity:.38"></div><div class="a" style="left:2474px;top:112px;width:1px;height:2px;background:#d4d4d4;opacity:.38"></div><div class="a" style="left:2437px;top:114px;width:6px;height:2px;background:#569cd6;opacity:.38"></div><div class="a" style="left:2444px;top:114px;width:1px;height:2px;background:#ffd700;opacity:.38"></div><div class="a" style="left:2446px;top:114px;width:12px;height:2px;background:#d4d4d4;opacity:.38"></div><div class="a" style="left:2459px;top:114px;width:1px;height:2px;background:#ffd700;opacity:.38"></div><div class="a" style="left:2461px;top:114px;width:4px;height:2px;background:#569cd6;opacity:.38"></div><div class="a" style="left:2466px;top:114px;width:17px;height:2px;background:#ce9178;opacity:.38"></div><div class="a" style="left:2483px;top:114px;width:1px;height:2px;background:#d4d4d4;opacity:.38"></div><div class="a" style="left:2437px;top:118px;width:6px;height:2px;background:#569cd6;opacity:.38"></div><div class="a" style="left:2444px;top:118px;width:5px;height:2px;background:#569cd6;opacity:.38"></div><div class="a" style="left:2450px;top:118px;width:15px;height:2px;background:#d4d4d4;opacity:.38"></div><div class="a" style="left:2466px;top:118px;width:1px;height:2px;background:#d4d4d4;opacity:.38"></div><div class="a" style="left:2468px;top:118px;width:5px;height:2px;background:#569cd6;opacity:.38"></div><div class="a" style="left:2474px;top:118px;width:1px;height:2px;background:#ffd700;opacity:.38"></div><div class="a" style="left:2475px;top:118px;width:7px;height:2px;background:#d4d4d4;opacity:.38"></div><div class="a" style="left:2483px;top:118px;width:9px;height:2px;background:#d4d4d4;opacity:.38"></div><div class="a" style="left:2492px;top:118px;width:1px;height:2px;background:#ffd700;opacity:.38"></div><div class="a" style="left:2494px;top:118px;width:2px;height:2px;background:#569cd6;opacity:.38"></div><div class="a" style="left:2497px;top:118px;width:1px;height:2px;background:#ffd700;opacity:.38"></div><div class="a" style="left:2439px;top:120px;width:12px;height:2px;background:#d4d4d4;opacity:.38"></div><div class="a" style="left:2451px;top:120px;width:1px;height:2px;background:#da70d6;opacity:.38"></div><div class="a" style="left:2452px;top:120px;width:8px;height:2px;background:#ce9178;opacity:.38"></div><div class="a" style="left:2461px;top:120px;width:4px;height:2px;background:#ce9178;opacity:.38"></div><div class="a" style="left:2466px;top:120px;width:3px;height:2px;background:#ce9178;opacity:.38"></div><div class="a" style="left:2470px;top:120px;width:4px;height:2px;background:#ce9178;opacity:.38"></div><div class="a" style="left:2475px;top:120px;width:2px;height:2px;background:#179fff;opacity:.38"></div><div class="a" style="left:2477px;top:120px;width:6px;height:2px;background:#d4d4d4;opacity:.38"></div><div class="a" style="left:2483px;top:120px;width:1px;height:2px;background:#179fff;opacity:.38"></div><div class="a" style="left:2484px;top:120px;width:1px;height:2px;background:#ce9178;opacity:.38"></div><div class="a" style="left:2485px;top:120px;width:1px;height:2px;background:#da70d6;opacity:.38"></div><div class="a" style="left:2486px;top:120px;width:1px;height:2px;background:#d4d4d4;opacity:.38"></div><div class="a" style="left:2439px;top:124px;width:3px;height:2px;background:#569cd6;opacity:.38"></div><div class="a" style="left:2443px;top:124px;width:6px;height:2px;background:#d4d4d4;opacity:.38"></div><div class="a" style="left:2439px;top:126px;width:3px;height:2px;background:#569cd6;opacity:.38"></div><div class="a" style="left:2443px;top:126px;width:1px;height:2px;background:#da70d6;opacity:.38"></div><div class="a" style="left:2441px;top:128px;width:5px;height:2px;background:#d4d4d4;opacity:.38"></div><div class="a" style="left:2447px;top:128px;width:1px;height:2px;background:#d4d4d4;opacity:.38"></div><div class="a" style="left:2449px;top:128px;width:5px;height:2px;background:#569cd6;opacity:.38"></div><div class="a" style="left:2455px;top:128px;width:14px;height:2px;background:#d4d4d4;opacity:.38"></div><div class="a" style="left:2469px;top:128px;width:2px;height:2px;background:#179fff;opacity:.38"></div><div class="a" style="left:2471px;top:128px;width:1px;height:2px;background:#d4d4d4;opacity:.38"></div><div class="a" style="left:2441px;top:130px;width:12px;height:2px;background:#d4d4d4;opacity:.38"></div><div class="a" style="left:2453px;top:130px;width:1px;height:2px;background:#179fff;opacity:.38"></div><div class="a" style="left:2454px;top:130px;width:13px;height:2px;background:#ce9178;opacity:.38"></div><div class="a" style="left:2468px;top:130px;width:9px;height:2px;background:#ce9178;opacity:.38"></div><div class="a" style="left:2478px;top:130px;width:2px;height:2px;background:#ce9178;opacity:.38"></div><div class="a" style="left:2481px;top:130px;width:5px;height:2px;background:#ce9178;opacity:.38"></div><div class="a" style="left:2487px;top:130px;width:3px;height:2px;background:#ce9178;opacity:.38"></div><div class="a" style="left:2491px;top:130px;width:17px;height:2px;background:#ce9178;opacity:.38"></div><div class="a" style="left:2508px;top:130px;width:1px;height:2px;background:#179fff;opacity:.38"></div><div class="a" style="left:2509px;top:130px;width:1px;height:2px;background:#d4d4d4;opacity:.38"></div><div class="a" style="left:2439px;top:132px;width:1px;height:2px;background:#da70d6;opacity:.38"></div><div class="a" style="left:2441px;top:132px;width:5px;height:2px;background:#569cd6;opacity:.38"></div><div class="a" style="left:2447px;top:132px;width:1px;height:2px;background:#da70d6;opacity:.38"></div><div class="a" style="left:2448px;top:132px;width:1px;height:2px;background:#d4d4d4;opacity:.38"></div><div class="a" style="left:2449px;top:132px;width:1px;height:2px;background:#da70d6;opacity:.38"></div><div class="a" style="left:2451px;top:132px;width:1px;height:2px;background:#da70d6;opacity:.38"></div><div class="a" style="left:2441px;top:134px;width:12px;height:2px;background:#d4d4d4;opacity:.38"></div><div class="a" style="left:2453px;top:134px;width:1px;height:2px;background:#179fff;opacity:.38"></div><div class="a" style="left:2454px;top:134px;width:6px;height:2px;background:#ce9178;opacity:.38"></div><div class="a" style="left:2461px;top:134px;width:7px;height:2px;background:#ce9178;opacity:.38"></div><div class="a" style="left:2469px;top:134px;width:4px;height:2px;background:#ce9178;opacity:.38"></div><div class="a" style="left:2474px;top:134px;width:5px;height:2px;background:#ce9178;opacity:.38"></div><div class="a" style="left:2480px;top:134px;width:2px;height:2px;background:#ffd700;opacity:.38"></div><div class="a" style="left:2482px;top:134px;width:1px;height:2px;background:#d4d4d4;opacity:.38"></div><div class="a" style="left:2483px;top:134px;width:1px;height:2px;background:#ffd700;opacity:.38"></div><div class="a" style="left:2484px;top:134px;width:1px;height:2px;background:#ce9178;opacity:.38"></div><div class="a" style="left:2485px;top:134px;width:1px;height:2px;background:#179fff;opacity:.38"></div><div class="a" style="left:2486px;top:134px;width:1px;height:2px;background:#d4d4d4;opacity:.38"></div><div class="a" style="left:2441px;top:136px;width:5px;height:2px;background:#569cd6;opacity:.38"></div><div class="a" style="left:2447px;top:136px;width:2px;height:2px;background:#d4d4d4;opacity:.38"></div><div class="a" style="left:2439px;top:138px;width:1px;height:2px;background:#da70d6;opacity:.38"></div><div class="a" style="left:2439px;top:142px;width:3px;height:2px;background:#569cd6;opacity:.38"></div><div class="a" style="left:2443px;top:142px;width:1px;height:2px;background:#da70d6;opacity:.38"></div><div class="a" style="left:2441px;top:144px;width:2px;height:2px;background:#6a9955;opacity:.38"></div><div class="a" style="left:2444px;top:144px;width:6px;height:2px;background:#6a9955;opacity:.38"></div><div class="a" style="left:2451px;top:144px;width:2px;height:2px;background:#6a9955;opacity:.38"></div><div class="a" style="left:2454px;top:144px;width:5px;height:2px;background:#6a9955;opacity:.38"></div><div class="a" style="left:2460px;top:144px;width:2px;height:2px;background:#6a9955;opacity:.38"></div><div class="a" style="left:2463px;top:144px;width:8px;height:2px;background:#6a9955;opacity:.38"></div><div class="a" style="left:2472px;top:144px;width:3px;height:2px;background:#6a9955;opacity:.38"></div><div class="a" style="left:2476px;top:144px;width:5px;height:2px;background:#6a9955;opacity:.38"></div><div class="a" style="left:2482px;top:144px;width:3px;height:2px;background:#6a9955;opacity:.38"></div><div class="a" style="left:2486px;top:144px;width:10px;height:2px;background:#6a9955;opacity:.38"></div><div class="a" style="left:2441px;top:146px;width:5px;height:2px;background:#569cd6;opacity:.38"></div><div class="a" style="left:2447px;top:146px;width:8px;height:2px;background:#d4d4d4;opacity:.38"></div><div class="a" style="left:2456px;top:146px;width:1px;height:2px;background:#d4d4d4;opacity:.38"></div><div class="a" style="left:2458px;top:146px;width:12px;height:2px;background:#d4d4d4;opacity:.38"></div><div class="a" style="left:2470px;top:146px;width:1px;height:2px;background:#179fff;opacity:.38"></div><div class="a" style="left:2471px;top:146px;width:1px;height:2px;background:#ffd700;opacity:.38"></div><div class="a" style="left:2472px;top:146px;width:7px;height:2px;background:#d4d4d4;opacity:.38"></div><div class="a" style="left:2479px;top:146px;width:1px;height:2px;background:#ffd700;opacity:.38"></div><div class="a" style="left:2481px;top:146px;width:2px;height:2px;background:#569cd6;opacity:.38"></div><div class="a" style="left:2484px;top:146px;width:1px;height:2px;background:#ffd700;opacity:.38"></div><div class="a" style="left:2443px;top:148px;width:5px;height:2px;background:#569cd6;opacity:.38"></div><div class="a" style="left:2449px;top:148px;width:3px;height:2px;background:#d4d4d4;opacity:.38"></div><div class="a" style="left:2453px;top:148px;width:1px;height:2px;background:#d4d4d4;opacity:.38"></div><div class="a" style="left:2455px;top:148px;width:10px;height:2px;background:#ce9178;opacity:.38"></div><div class="a" style="left:2465px;top:148px;width:2px;height:2px;background:#da70d6;opacity:.38"></div><div class="a" style="left:2467px;top:148px;width:6px;height:2px;background:#d4d4d4;opacity:.38"></div><div class="a" style="left:2473px;top:148px;width:1px;height:2px;background:#da70d6;opacity:.38"></div><div class="a" style="left:2474px;top:148px;width:1px;height:2px;background:#ce9178;opacity:.38"></div><div class="a" style="left:2475px;top:148px;width:2px;height:2px;background:#da70d6;opacity:.38"></div><div class="a" style="left:2477px;top:148px;width:10px;height:2px;background:#d4d4d4;opacity:.38"></div><div class="a" style="left:2487px;top:148px;width:1px;height:2px;background:#da70d6;opacity:.38"></div><div class="a" style="left:2488px;top:148px;width:1px;height:2px;background:#ce9178;opacity:.38"></div><div class="a" style="left:2489px;top:148px;width:1px;height:2px;background:#d4d4d4;opacity:.38"></div><div class="a" style="left:2443px;top:150px;width:12px;height:2px;background:#d4d4d4;opacity:.38"></div><div class="a" style="left:2455px;top:150px;width:1px;height:2px;background:#da70d6;opacity:.38"></div><div class="a" style="left:2456px;top:150px;width:8px;height:2px;background:#ce9178;opacity:.38"></div><div class="a" style="left:2465px;top:150px;width:3px;height:2px;background:#ce9178;opacity:.38"></div><div class="a" style="left:2469px;top:150px;width:4px;height:2px;background:#ce9178;opacity:.38"></div><div class="a" style="left:2474px;top:150px;width:3px;height:2px;background:#ce9178;opacity:.38"></div><div class="a" style="left:2478px;top:150px;width:3px;height:2px;background:#ce9178;opacity:.38"></div><div class="a" style="left:2482px;top:150px;width:2px;height:2px;background:#179fff;opacity:.38"></div><div class="a" style="left:2484px;top:150px;width:3px;height:2px;background:#d4d4d4;opacity:.38"></div><div class="a" style="left:2487px;top:150px;width:1px;height:2px;background:#179fff;opacity:.38"></div><div class="a" style="left:2488px;top:150px;width:1px;height:2px;background:#ce9178;opacity:.38"></div><div class="a" style="left:2489px;top:150px;width:1px;height:2px;background:#da70d6;opacity:.38"></div><div class="a" style="left:2490px;top:150px;width:1px;height:2px;background:#d4d4d4;opacity:.38"></div><div class="a" style="left:2443px;top:152px;width:6px;height:2px;background:#569cd6;opacity:.38"></div><div class="a" style="left:2450px;top:152px;width:11px;height:2px;background:#d4d4d4;opacity:.38"></div><div class="a" style="left:2461px;top:152px;width:1px;height:2px;background:#da70d6;opacity:.38"></div><div class="a" style="left:2462px;top:152px;width:4px;height:2px;background:#d4d4d4;opacity:.38"></div><div class="a" style="left:2467px;top:152px;width:4px;height:2px;background:#d4d4d4;opacity:.38"></div><div class="a" style="left:2472px;top:152px;width:14px;height:2px;background:#d4d4d4;opacity:.38"></div><div class="a" style="left:2486px;top:152px;width:1px;height:2px;background:#179fff;opacity:.38"></div><div class="a" style="left:2487px;top:152px;width:7px;height:2px;background:#d4d4d4;opacity:.38"></div><div class="a" style="left:2494px;top:152px;width:1px;height:2px;background:#179fff;opacity:.38"></div><div class="a" style="left:2495px;top:152px;width:1px;height:2px;background:#da70d6;opacity:.38"></div><div class="a" style="left:2496px;top:152px;width:1px;height:2px;background:#d4d4d4;opacity:.38"></div><div class="a" style="left:2441px;top:154px;width:1px;height:2px;background:#ffd700;opacity:.38"></div><div class="a" style="left:2442px;top:154px;width:1px;height:2px;background:#179fff;opacity:.38"></div><div class="a" style="left:2443px;top:154px;width:1px;height:2px;background:#d4d4d4;opacity:.38"></div><div class="a" style="left:2441px;top:158px;width:5px;height:2px;background:#569cd6;opacity:.38"></div><div class="a" style="left:2447px;top:158px;width:11px;height:2px;background:#d4d4d4;opacity:.38"></div><div class="a" style="left:2458px;top:158px;width:1px;height:2px;background:#179fff;opacity:.38"></div><div class="a" style="left:2459px;top:158px;width:8px;height:2px;background:#d4d4d4;opacity:.38"></div><div class="a" style="left:2467px;top:158px;width:1px;height:2px;background:#179fff;opacity:.38"></div><div class="a" style="left:2468px;top:158px;width:1px;height:2px;background:#d4d4d4;opacity:.38"></div><div class="a" style="left:2441px;top:160px;width:12px;height:2px;background:#d4d4d4;opacity:.38"></div><div class="a" style="left:2453px;top:160px;width:1px;height:2px;background:#179fff;opacity:.38"></div><div class="a" style="left:2454px;top:160px;width:7px;height:2px;background:#ce9178;opacity:.38"></div><div class="a" style="left:2462px;top:160px;width:2px;height:2px;background:#ffd700;opacity:.38"></div><div class="a" style="left:2464px;top:160px;width:15px;height:2px;background:#d4d4d4;opacity:.38"></div><div class="a" style="left:2479px;top:160px;width:1px;height:2px;background:#ffd700;opacity:.38"></div><div class="a" style="left:2481px;top:160px;width:7px;height:2px;background:#ce9178;opacity:.38"></div><div class="a" style="left:2489px;top:160px;width:2px;height:2px;background:#ce9178;opacity:.38"></div><div class="a" style="left:2492px;top:160px;width:6px;height:2px;background:#ce9178;opacity:.38"></div><div class="a" style="left:2498px;top:160px;width:1px;height:2px;background:#179fff;opacity:.38"></div><div class="a" style="left:2499px;top:160px;width:1px;height:2px;background:#d4d4d4;opacity:.38"></div><div class="a" style="left:2439px;top:162px;width:1px;height:2px;background:#da70d6;opacity:.38"></div><div class="a" style="left:2441px;top:162px;width:5px;height:2px;background:#569cd6;opacity:.38"></div><div class="a" style="left:2447px;top:162px;width:1px;height:2px;background:#da70d6;opacity:.38"></div><div class="a" style="left:2448px;top:162px;width:1px;height:2px;background:#d4d4d4;opacity:.38"></div><div class="a" style="left:2449px;top:162px;width:1px;height:2px;background:#da70d6;opacity:.38"></div><div class="a" style="left:2451px;top:162px;width:1px;height:2px;background:#da70d6;opacity:.38"></div><div class="a" style="left:2441px;top:164px;width:12px;height:2px;background:#d4d4d4;opacity:.38"></div><div class="a" style="left:2453px;top:164px;width:1px;height:2px;background:#179fff;opacity:.38"></div><div class="a" style="left:2454px;top:164px;width:7px;height:2px;background:#ce9178;opacity:.38"></div><div class="a" style="left:2462px;top:164px;width:7px;height:2px;background:#ce9178;opacity:.38"></div><div class="a" style="left:2470px;top:164px;width:4px;height:2px;background:#ce9178;opacity:.38"></div><div class="a" style="left:2475px;top:164px;width:2px;height:2px;background:#ce9178;opacity:.38"></div><div class="a" style="left:2478px;top:164px;width:5px;height:2px;background:#ce9178;opacity:.38"></div><div class="a" style="left:2484px;top:164px;width:2px;height:2px;background:#ffd700;opacity:.38"></div><div class="a" style="left:2486px;top:164px;width:1px;height:2px;background:#d4d4d4;opacity:.38"></div><div class="a" style="left:2487px;top:164px;width:1px;height:2px;background:#ffd700;opacity:.38"></div><div class="a" style="left:2488px;top:164px;width:1px;height:2px;background:#ce9178;opacity:.38"></div><div class="a" style="left:2489px;top:164px;width:1px;height:2px;background:#179fff;opacity:.38"></div><div class="a" style="left:2490px;top:164px;width:1px;height:2px;background:#d4d4d4;opacity:.38"></div><div class="a" style="left:2441px;top:166px;width:5px;height:2px;background:#569cd6;opacity:.38"></div><div class="a" style="left:2447px;top:166px;width:2px;height:2px;background:#d4d4d4;opacity:.38"></div><div class="a" style="left:2439px;top:168px;width:1px;height:2px;background:#da70d6;opacity:.38"></div><div class="a" style="left:2439px;top:172px;width:2px;height:2px;background:#6a9955;opacity:.38"></div><div class="a" style="left:2442px;top:172px;width:7px;height:2px;background:#6a9955;opacity:.38"></div><div class="a" style="left:2450px;top:172px;width:4px;height:2px;background:#6a9955;opacity:.38"></div><div class="a" style="left:2455px;top:172px;width:5px;height:2px;background:#6a9955;opacity:.38"></div><div class="a" style="left:2461px;top:172px;width:3px;height:2px;background:#6a9955;opacity:.38"></div><div class="a" style="left:2465px;top:172px;width:5px;height:2px;background:#6a9955;opacity:.38"></div><div class="a" style="left:2471px;top:172px;width:3px;height:2px;background:#6a9955;opacity:.38"></div><div class="a" style="left:2475px;top:172px;width:6px;height:2px;background:#6a9955;opacity:.38"></div><div class="a" style="left:2439px;top:174px;width:3px;height:2px;background:#569cd6;opacity:.38"></div><div class="a" style="left:2443px;top:174px;width:1px;height:2px;background:#da70d6;opacity:.38"></div><div class="a" style="left:2444px;top:174px;width:5px;height:2px;background:#569cd6;opacity:.38"></div><div class="a" style="left:2450px;top:174px;width:5px;height:2px;background:#d4d4d4;opacity:.38"></div><div class="a" style="left:2456px;top:174px;width:2px;height:2px;background:#569cd6;opacity:.38"></div><div class="a" style="left:2459px;top:174px;width:4px;height:2px;background:#d4d4d4;opacity:.38"></div><div class="a" style="left:2463px;top:174px;width:1px;height:2px;background:#da70d6;opacity:.38"></div><div class="a" style="left:2465px;top:174px;width:1px;height:2px;background:#da70d6;opacity:.38"></div><div class="a" style="left:2441px;top:176px;width:2px;height:2px;background:#569cd6;opacity:.38"></div><div class="a" style="left:2444px;top:176px;width:1px;height:2px;background:#179fff;opacity:.38"></div><div class="a" style="left:2445px;top:176px;width:17px;height:2px;background:#d4d4d4;opacity:.38"></div><div class="a" style="left:2462px;top:176px;width:1px;height:2px;background:#179fff;opacity:.38"></div><div class="a" style="left:2464px;top:176px;width:9px;height:2px;background:#d4d4d4;opacity:.38"></div><div class="a" style="left:2441px;top:178px;width:11px;height:2px;background:#d4d4d4;opacity:.38"></div><div class="a" style="left:2452px;top:178px;width:1px;height:2px;background:#179fff;opacity:.38"></div><div class="a" style="left:2453px;top:178px;width:5px;height:2px;background:#d4d4d4;opacity:.38"></div><div class="a" style="left:2458px;top:178px;width:1px;height:2px;background:#179fff;opacity:.38"></div><div class="a" style="left:2459px;top:178px;width:1px;height:2px;background:#d4d4d4;opacity:.38"></div><div class="a" style="left:2439px;top:180px;width:1px;height:2px;background:#da70d6;opacity:.38"></div><div class="a" style="left:2439px;top:184px;width:6px;height:2px;background:#569cd6;opacity:.38"></div><div class="a" style="left:2446px;top:184px;width:7px;height:2px;background:#d4d4d4;opacity:.38"></div><div class="a" style="left:2437px;top:186px;width:1px;height:2px;background:#ffd700;opacity:.38"></div><div class="a" style="left:2438px;top:186px;width:1px;height:2px;background:#d4d4d4;opacity:.38"></div><div class="a" style="left:2437px;top:190px;width:6px;height:2px;background:#569cd6;opacity:.38"></div><div class="a" style="left:2444px;top:190px;width:5px;height:2px;background:#569cd6;opacity:.38"></div><div class="a" style="left:2450px;top:190px;width:18px;height:2px;background:#d4d4d4;opacity:.38"></div><div class="a" style="left:2469px;top:190px;width:1px;height:2px;background:#d4d4d4;opacity:.38"></div><div class="a" style="left:2471px;top:190px;width:5px;height:2px;background:#569cd6;opacity:.38"></div><div class="a" style="left:2477px;top:190px;width:1px;height:2px;background:#ffd700;opacity:.38"></div><div class="a" style="left:2478px;top:190px;width:7px;height:2px;background:#d4d4d4;opacity:.38"></div><div class="a" style="left:2486px;top:190px;width:9px;height:2px;background:#d4d4d4;opacity:.38"></div><div class="a" style="left:2495px;top:190px;width:1px;height:2px;background:#ffd700;opacity:.38"></div><div class="a" style="left:2497px;top:190px;width:2px;height:2px;background:#569cd6;opacity:.38"></div><div class="a" style="left:2500px;top:190px;width:1px;height:2px;background:#ffd700;opacity:.38"></div><div class="a" style="left:2439px;top:192px;width:2px;height:2px;background:#569cd6;opacity:.38"></div><div class="a" style="left:2442px;top:192px;width:1px;height:2px;background:#da70d6;opacity:.38"></div><div class="a" style="left:2443px;top:192px;width:9px;height:2px;background:#d4d4d4;opacity:.38"></div><div class="a" style="left:2453px;top:192px;width:2px;height:2px;background:#d4d4d4;opacity:.38"></div><div class="a" style="left:2456px;top:192px;width:15px;height:2px;background:#d4d4d4;opacity:.38"></div><div class="a" style="left:2472px;top:192px;width:3px;height:2px;background:#d4d4d4;opacity:.38"></div><div class="a" style="left:2476px;top:192px;width:1px;height:2px;background:#b5cea8;opacity:.38"></div><div class="a" style="left:2477px;top:192px;width:1px;height:2px;background:#da70d6;opacity:.38"></div><div class="a" style="left:2479px;top:192px;width:1px;height:2px;background:#da70d6;opacity:.38"></div><div class="a" style="left:2441px;top:194px;width:12px;height:2px;background:#d4d4d4;opacity:.38"></div><div class="a" style="left:2453px;top:194px;width:1px;height:2px;background:#179fff;opacity:.38"></div><div class="a" style="left:2454px;top:194px;width:3px;height:2px;background:#ce9178;opacity:.38"></div><div class="a" style="left:2458px;top:194px;width:8px;height:2px;background:#ce9178;opacity:.38"></div><div class="a" style="left:2467px;top:194px;width:2px;height:2px;background:#ce9178;opacity:.38"></div><div class="a" style="left:2470px;top:194px;width:8px;height:2px;background:#ce9178;opacity:.38"></div><div class="a" style="left:2479px;top:194px;width:8px;height:2px;background:#ce9178;opacity:.38"></div><div class="a" style="left:2488px;top:194px;width:5px;height:2px;background:#ce9178;opacity:.38"></div><div class="a" style="left:2494px;top:194px;width:10px;height:2px;background:#ce9178;opacity:.38"></div><div class="a" style="left:2504px;top:194px;width:1px;height:2px;background:#179fff;opacity:.38"></div><div class="a" style="left:2505px;top:194px;width:1px;height:2px;background:#d4d4d4;opacity:.38"></div><div class="a" style="left:2441px;top:196px;width:6px;height:2px;background:#569cd6;opacity:.38"></div><div class="a" style="left:2447px;top:196px;width:1px;height:2px;background:#d4d4d4;opacity:.38"></div><div class="a" style="left:2439px;top:198px;width:1px;height:2px;background:#da70d6;opacity:.38"></div><div class="a" style="left:2437px;top:200px;width:1px;height:2px;background:#ffd700;opacity:.38"></div><div class="a" style="left:2438px;top:200px;width:1px;height:2px;background:#d4d4d4;opacity:.38"></div><div class="a" style="left:2437px;top:204px;width:6px;height:2px;background:#569cd6;opacity:.38"></div><div class="a" style="left:2444px;top:204px;width:5px;height:2px;background:#569cd6;opacity:.38"></div><div class="a" style="left:2450px;top:204px;width:18px;height:2px;background:#d4d4d4;opacity:.38"></div><div class="a" style="left:2469px;top:204px;width:1px;height:2px;background:#d4d4d4;opacity:.38"></div><div class="a" style="left:2471px;top:204px;width:5px;height:2px;background:#569cd6;opacity:.38"></div><div class="a" style="left:2477px;top:204px;width:1px;height:2px;background:#ffd700;opacity:.38"></div><div class="a" style="left:2478px;top:204px;width:7px;height:2px;background:#d4d4d4;opacity:.38"></div><div class="a" style="left:2486px;top:204px;width:9px;height:2px;background:#d4d4d4;opacity:.38"></div><div class="a" style="left:2495px;top:204px;width:1px;height:2px;background:#ffd700;opacity:.38"></div><div class="a" style="left:2497px;top:204px;width:2px;height:2px;background:#569cd6;opacity:.38"></div><div class="a" style="left:2500px;top:204px;width:1px;height:2px;background:#ffd700;opacity:.38"></div><div class="a" style="left:2439px;top:206px;width:12px;height:2px;background:#d4d4d4;opacity:.38"></div><div class="a" style="left:2451px;top:206px;width:1px;height:2px;background:#da70d6;opacity:.38"></div><div class="a" style="left:2452px;top:206px;width:8px;height:2px;background:#ce9178;opacity:.38"></div><div class="a" style="left:2461px;top:206px;width:4px;height:2px;background:#ce9178;opacity:.38"></div><div class="a" style="left:2466px;top:206px;width:3px;height:2px;background:#ce9178;opacity:.38"></div><div class="a" style="left:2470px;top:206px;width:4px;height:2px;background:#ce9178;opacity:.38"></div><div class="a" style="left:2475px;top:206px;width:2px;height:2px;background:#179fff;opacity:.38"></div><div class="a" style="left:2477px;top:206px;width:6px;height:2px;background:#d4d4d4;opacity:.38"></div><div class="a" style="left:2483px;top:206px;width:1px;height:2px;background:#179fff;opacity:.38"></div><div class="a" style="left:2484px;top:206px;width:1px;height:2px;background:#ce9178;opacity:.38"></div><div class="a" style="left:2485px;top:206px;width:1px;height:2px;background:#da70d6;opacity:.38"></div><div class="a" style="left:2486px;top:206px;width:1px;height:2px;background:#d4d4d4;opacity:.38"></div><div class="a" style="left:2439px;top:210px;width:3px;height:2px;background:#569cd6;opacity:.38"></div><div class="a" style="left:2443px;top:210px;width:6px;height:2px;background:#d4d4d4;opacity:.38"></div><div class="a" style="left:2439px;top:212px;width:3px;height:2px;background:#569cd6;opacity:.38"></div><div class="a" style="left:2443px;top:212px;width:1px;height:2px;background:#da70d6;opacity:.38"></div><div class="a" style="left:2441px;top:214px;width:5px;height:2px;background:#d4d4d4;opacity:.38"></div><div class="a" style="left:2447px;top:214px;width:1px;height:2px;background:#d4d4d4;opacity:.38"></div><div class="a" style="left:2449px;top:214px;width:5px;height:2px;background:#569cd6;opacity:.38"></div><div class="a" style="left:2455px;top:214px;width:14px;height:2px;background:#d4d4d4;opacity:.38"></div><div class="a" style="left:2469px;top:214px;width:2px;height:2px;background:#179fff;opacity:.38"></div><div class="a" style="left:2471px;top:214px;width:1px;height:2px;background:#d4d4d4;opacity:.38"></div><div class="a" style="left:2441px;top:216px;width:12px;height:2px;background:#d4d4d4;opacity:.38"></div><div class="a" style="left:2453px;top:216px;width:1px;height:2px;background:#179fff;opacity:.38"></div><div class="a" style="left:2454px;top:216px;width:13px;height:2px;background:#ce9178;opacity:.38"></div><div class="a" style="left:2468px;top:216px;width:9px;height:2px;background:#ce9178;opacity:.38"></div><div class="a" style="left:2478px;top:216px;width:2px;height:2px;background:#ce9178;opacity:.38"></div><div class="a" style="left:2481px;top:216px;width:5px;height:2px;background:#ce9178;opacity:.38"></div><div class="a" style="left:2487px;top:216px;width:3px;height:2px;background:#ce9178;opacity:.38"></div><div class="a" style="left:2491px;top:216px;width:17px;height:2px;background:#ce9178;opacity:.38"></div><div class="a" style="left:2508px;top:216px;width:1px;height:2px;background:#179fff;opacity:.38"></div><div class="a" style="left:2509px;top:216px;width:1px;height:2px;background:#d4d4d4;opacity:.38"></div><div class="a" style="left:2439px;top:218px;width:1px;height:2px;background:#da70d6;opacity:.38"></div><div class="a" style="left:2441px;top:218px;width:5px;height:2px;background:#569cd6;opacity:.38"></div><div class="a" style="left:2447px;top:218px;width:1px;height:2px;background:#da70d6;opacity:.38"></div><div class="a" style="left:2448px;top:218px;width:1px;height:2px;background:#d4d4d4;opacity:.38"></div><div class="a" style="left:2449px;top:218px;width:1px;height:2px;background:#da70d6;opacity:.38"></div><div class="a" style="left:2451px;top:218px;width:1px;height:2px;background:#da70d6;opacity:.38"></div><div class="a" style="left:2441px;top:220px;width:12px;height:2px;background:#d4d4d4;opacity:.38"></div><div class="a" style="left:2453px;top:220px;width:1px;height:2px;background:#179fff;opacity:.38"></div><div class="a" style="left:2454px;top:220px;width:6px;height:2px;background:#ce9178;opacity:.38"></div><div class="a" style="left:2461px;top:220px;width:7px;height:2px;background:#ce9178;opacity:.38"></div><div class="a" style="left:2469px;top:220px;width:4px;height:2px;background:#ce9178;opacity:.38"></div><div class="a" style="left:2474px;top:220px;width:5px;height:2px;background:#ce9178;opacity:.38"></div><div class="a" style="left:2480px;top:220px;width:2px;height:2px;background:#ffd700;opacity:.38"></div><div class="a" style="left:2482px;top:220px;width:1px;height:2px;background:#d4d4d4;opacity:.38"></div><div class="a" style="left:2483px;top:220px;width:1px;height:2px;background:#ffd700;opacity:.38"></div><div class="a" style="left:2484px;top:220px;width:1px;height:2px;background:#ce9178;opacity:.38"></div><div class="a" style="left:2485px;top:220px;width:1px;height:2px;background:#179fff;opacity:.38"></div><div class="a" style="left:2486px;top:220px;width:1px;height:2px;background:#d4d4d4;opacity:.38"></div><div class="a" style="left:2441px;top:222px;width:5px;height:2px;background:#569cd6;opacity:.38"></div><div class="a" style="left:2447px;top:222px;width:2px;height:2px;background:#d4d4d4;opacity:.38"></div><div class="a" style="left:2439px;top:224px;width:1px;height:2px;background:#da70d6;opacity:.38"></div><div class="a" style="left:2439px;top:228px;width:2px;height:2px;background:#569cd6;opacity:.38"></div><div class="a" style="left:2442px;top:228px;width:1px;height:2px;background:#da70d6;opacity:.38"></div><div class="a" style="left:2443px;top:228px;width:9px;height:2px;background:#d4d4d4;opacity:.38"></div><div class="a" style="left:2453px;top:228px;width:2px;height:2px;background:#d4d4d4;opacity:.38"></div><div class="a" style="left:2456px;top:228px;width:15px;height:2px;background:#d4d4d4;opacity:.38"></div><div class="a" style="left:2472px;top:228px;width:3px;height:2px;background:#d4d4d4;opacity:.38"></div><div class="a" style="left:2476px;top:228px;width:1px;height:2px;background:#b5cea8;opacity:.38"></div><div class="a" style="left:2477px;top:228px;width:1px;height:2px;background:#da70d6;opacity:.38"></div><div class="a" style="left:2479px;top:228px;width:1px;height:2px;background:#da70d6;opacity:.38"></div><div class="a" style="left:2441px;top:230px;width:12px;height:2px;background:#d4d4d4;opacity:.38"></div><div class="a" style="left:2453px;top:230px;width:1px;height:2px;background:#179fff;opacity:.38"></div><div class="a" style="left:2454px;top:230px;width:3px;height:2px;background:#ce9178;opacity:.38"></div><div class="a" style="left:2458px;top:230px;width:8px;height:2px;background:#ce9178;opacity:.38"></div><div class="a" style="left:2467px;top:230px;width:2px;height:2px;background:#ce9178;opacity:.38"></div><div class="a" style="left:2470px;top:230px;width:8px;height:2px;background:#ce9178;opacity:.38"></div><div class="a" style="left:2479px;top:230px;width:8px;height:2px;background:#ce9178;opacity:.38"></div><div class="a" style="left:2488px;top:230px;width:5px;height:2px;background:#ce9178;opacity:.38"></div><div class="a" style="left:2494px;top:230px;width:10px;height:2px;background:#ce9178;opacity:.38"></div><div class="a" style="left:2504px;top:230px;width:1px;height:2px;background:#179fff;opacity:.38"></div><div class="a" style="left:2505px;top:230px;width:1px;height:2px;background:#d4d4d4;opacity:.38"></div><div class="a" style="left:2441px;top:232px;width:6px;height:2px;background:#569cd6;opacity:.38"></div><div class="a" style="left:2447px;top:232px;width:1px;height:2px;background:#d4d4d4;opacity:.38"></div><div class="a" style="left:2439px;top:234px;width:1px;height:2px;background:#da70d6;opacity:.38"></div><div class="a" style="left:2437px;top:238px;width:6px;height:2px;background:#569cd6;opacity:.38"></div><div class="a" style="left:2444px;top:238px;width:5px;height:2px;background:#569cd6;opacity:.38"></div><div class="a" style="left:2450px;top:238px;width:34px;height:2px;background:#d4d4d4;opacity:.38"></div><div class="a" style="left:2485px;top:238px;width:1px;height:2px;background:#d4d4d4;opacity:.38"></div><div class="a" style="left:2487px;top:238px;width:5px;height:2px;background:#569cd6;opacity:.38"></div><div class="a" style="left:2493px;top:238px;width:1px;height:2px;background:#da70d6;opacity:.38"></div><div class="a" style="left:2494px;top:238px;width:7px;height:2px;background:#d4d4d4;opacity:.38"></div><div class="a" style="left:2502px;top:238px;width:8px;height:2px;background:#d4d4d4;opacity:.38"></div><div class="a" style="left:2511px;top:238px;width:10px;height:2px;background:#d4d4d4;opacity:.38"></div><div class="a" style="left:2522px;top:238px;width:3px;height:2px;background:#d4d4d4;opacity:.38"></div><div class="a" style="left:2525px;top:238px;width:1px;height:2px;background:#da70d6;opacity:.38"></div><div class="a" style="left:2527px;top:238px;width:2px;height:2px;background:#569cd6;opacity:.38"></div><div class="a" style="left:2530px;top:238px;width:1px;height:2px;background:#da70d6;opacity:.38"></div><div class="a" style="left:2439px;top:240px;width:12px;height:2px;background:#d4d4d4;opacity:.38"></div><div class="a" style="left:2451px;top:240px;width:1px;height:2px;background:#179fff;opacity:.38"></div><div class="a" style="left:2452px;top:240px;width:9px;height:2px;background:#ce9178;opacity:.38"></div><div class="a" style="left:2462px;top:240px;width:3px;height:2px;background:#ce9178;opacity:.38"></div><div class="a" style="left:2466px;top:240px;width:4px;height:2px;background:#ce9178;opacity:.38"></div><div class="a" style="left:2471px;top:240px;width:4px;height:2px;background:#ce9178;opacity:.38"></div><div class="a" style="left:2476px;top:240px;width:12px;height:2px;background:#ce9178;opacity:.38"></div><div class="a" style="left:2489px;top:240px;width:3px;height:2px;background:#ce9178;opacity:.38"></div><div class="a" style="left:2493px;top:240px;width:4px;height:2px;background:#ce9178;opacity:.38"></div><div class="a" style="left:2498px;top:240px;width:2px;height:2px;background:#ffd700;opacity:.38"></div><div class="a" style="left:2500px;top:240px;width:6px;height:2px;background:#d4d4d4;opacity:.38"></div><div class="a" style="left:2506px;top:240px;width:1px;height:2px;background:#ffd700;opacity:.38"></div><div class="a" style="left:2508px;top:240px;width:3px;height:2px;background:#ce9178;opacity:.38"></div><div class="a" style="left:2512px;top:240px;width:7px;height:2px;background:#ce9178;opacity:.38"></div><div class="a" style="left:2520px;top:240px;width:2px;height:2px;background:#ffd700;opacity:.38"></div><div class="a" style="left:2522px;top:240px;width:9px;height:2px;background:#d4d4d4;opacity:.38"></div><div class="a" style="left:2531px;top:240px;width:1px;height:2px;background:#ffd700;opacity:.38"></div><div class="a" style="left:2532px;top:240px;width:1px;height:2px;background:#ce9178;opacity:.38"></div><div class="a" style="left:2533px;top:240px;width:1px;height:2px;background:#179fff;opacity:.38"></div><div class="a" style="left:2534px;top:240px;width:1px;height:2px;background:#d4d4d4;opacity:.38"></div><div class="a" style="left:2439px;top:244px;width:2px;height:2px;background:#569cd6;opacity:.38"></div><div class="a" style="left:2442px;top:244px;width:1px;height:2px;background:#179fff;opacity:.38"></div><div class="a" style="left:2443px;top:244px;width:8px;height:2px;background:#d4d4d4;opacity:.38"></div><div class="a" style="left:2452px;top:244px;width:2px;height:2px;background:#d4d4d4;opacity:.38"></div><div class="a" style="left:2455px;top:244px;width:14px;height:2px;background:#d4d4d4;opacity:.38"></div><div class="a" style="left:2470px;top:244px;width:3px;height:2px;background:#d4d4d4;opacity:.38"></div><div class="a" style="left:2474px;top:244px;width:1px;height:2px;background:#b5cea8;opacity:.38"></div><div class="a" style="left:2475px;top:244px;width:1px;height:2px;background:#179fff;opacity:.38"></div><div class="a" style="left:2477px;top:244px;width:1px;height:2px;background:#179fff;opacity:.38"></div><div class="a" style="left:2441px;top:246px;width:12px;height:2px;background:#d4d4d4;opacity:.38"></div><div class="a" style="left:2453px;top:246px;width:1px;height:2px;background:#ffd700;opacity:.38"></div><div class="a" style="left:2454px;top:246px;width:3px;height:2px;background:#ce9178;opacity:.38"></div><div class="a" style="left:2458px;top:246px;width:3px;height:2px;background:#ce9178;opacity:.38"></div><div class="a" style="left:2462px;top:246px;width:4px;height:2px;background:#ce9178;opacity:.38"></div><div class="a" style="left:2467px;top:246px;width:2px;height:2px;background:#ce9178;opacity:.38"></div><div class="a" style="left:2470px;top:246px;width:7px;height:2px;background:#ce9178;opacity:.38"></div><div class="a" style="left:2478px;top:246px;width:8px;height:2px;background:#ce9178;opacity:.38"></div><div class="a" style="left:2487px;top:246px;width:5px;height:2px;background:#ce9178;opacity:.38"></div><div class="a" style="left:2493px;top:246px;width:10px;height:2px;background:#ce9178;opacity:.38"></div><div class="a" style="left:2503px;top:246px;width:1px;height:2px;background:#ffd700;opacity:.38"></div><div class="a" style="left:2504px;top:246px;width:1px;height:2px;background:#d4d4d4;opacity:.38"></div><div class="a" style="left:2441px;top:248px;width:6px;height:2px;background:#569cd6;opacity:.38"></div><div class="a" style="left:2447px;top:248px;width:1px;height:2px;background:#d4d4d4;opacity:.38"></div><div class="a" style="left:2439px;top:250px;width:1px;height:2px;background:#179fff;opacity:.38"></div><div class="a" style="left:2439px;top:254px;width:3px;height:2px;background:#569cd6;opacity:.38"></div><div class="a" style="left:2443px;top:254px;width:6px;height:2px;background:#d4d4d4;opacity:.38"></div><div class="a" style="left:2439px;top:256px;width:3px;height:2px;background:#569cd6;opacity:.38"></div><div class="a" style="left:2443px;top:256px;width:1px;height:2px;background:#179fff;opacity:.38"></div><div class="a" style="left:2441px;top:258px;width:5px;height:2px;background:#d4d4d4;opacity:.38"></div><div class="a" style="left:2447px;top:258px;width:1px;height:2px;background:#d4d4d4;opacity:.38"></div><div class="a" style="left:2449px;top:258px;width:5px;height:2px;background:#569cd6;opacity:.38"></div><div class="a" style="left:2455px;top:258px;width:14px;height:2px;background:#d4d4d4;opacity:.38"></div><div class="a" style="left:2469px;top:258px;width:2px;height:2px;background:#ffd700;opacity:.38"></div><div class="a" style="left:2471px;top:258px;width:1px;height:2px;background:#d4d4d4;opacity:.38"></div><div class="a" style="left:2441px;top:260px;width:12px;height:2px;background:#d4d4d4;opacity:.38"></div><div class="a" style="left:2453px;top:260px;width:1px;height:2px;background:#ffd700;opacity:.38"></div><div class="a" style="left:2454px;top:260px;width:13px;height:2px;background:#ce9178;opacity:.38"></div><div class="a" style="left:2468px;top:260px;width:9px;height:2px;background:#ce9178;opacity:.38"></div><div class="a" style="left:2478px;top:260px;width:2px;height:2px;background:#ce9178;opacity:.38"></div><div class="a" style="left:2481px;top:260px;width:5px;height:2px;background:#ce9178;opacity:.38"></div><div class="a" style="left:2487px;top:260px;width:3px;height:2px;background:#ce9178;opacity:.38"></div><div class="a" style="left:2491px;top:260px;width:35px;height:2px;background:#ce9178;opacity:.38"></div><div class="a" style="left:2526px;top:260px;width:1px;height:2px;background:#ffd700;opacity:.38"></div><div class="a" style="left:2527px;top:260px;width:1px;height:2px;background:#d4d4d4;opacity:.38"></div><div class="a" style="left:2439px;top:262px;width:1px;height:2px;background:#179fff;opacity:.38"></div><div class="a" style="left:2441px;top:262px;width:5px;height:2px;background:#569cd6;opacity:.38"></div><div class="a" style="left:2447px;top:262px;width:1px;height:2px;background:#179fff;opacity:.38"></div><div class="a" style="left:2448px;top:262px;width:1px;height:2px;background:#d4d4d4;opacity:.38"></div><div class="a" style="left:2449px;top:262px;width:1px;height:2px;background:#179fff;opacity:.38"></div><div class="a" style="left:2451px;top:262px;width:1px;height:2px;background:#179fff;opacity:.38"></div><div class="a" style="left:2441px;top:264px;width:12px;height:2px;background:#d4d4d4;opacity:.38"></div><div class="a" style="left:2453px;top:264px;width:1px;height:2px;background:#ffd700;opacity:.38"></div><div class="a" style="left:2454px;top:264px;width:6px;height:2px;background:#ce9178;opacity:.38"></div><div class="a" style="left:2461px;top:264px;width:7px;height:2px;background:#ce9178;opacity:.38"></div><div class="a" style="left:2469px;top:264px;width:4px;height:2px;background:#ce9178;opacity:.38"></div><div class="a" style="left:2474px;top:264px;width:5px;height:2px;background:#ce9178;opacity:.38"></div><div class="a" style="left:2480px;top:264px;width:2px;height:2px;background:#da70d6;opacity:.38"></div><div class="a" style="left:2482px;top:264px;width:1px;height:2px;background:#d4d4d4;opacity:.38"></div><div class="a" style="left:2483px;top:264px;width:1px;height:2px;background:#da70d6;opacity:.38"></div><div class="a" style="left:2484px;top:264px;width:1px;height:2px;background:#ce9178;opacity:.38"></div><div class="a" style="left:2485px;top:264px;width:1px;height:2px;background:#ffd700;opacity:.38"></div><div class="a" style="left:2486px;top:264px;width:1px;height:2px;background:#d4d4d4;opacity:.38"></div><div class="a" style="left:2441px;top:266px;width:5px;height:2px;background:#569cd6;opacity:.38"></div><div class="a" style="left:2447px;top:266px;width:2px;height:2px;background:#d4d4d4;opacity:.38"></div><div class="a" style="left:2439px;top:268px;width:1px;height:2px;background:#179fff;opacity:.38"></div><div class="a" style="left:2439px;top:272px;width:3px;height:2px;background:#569cd6;opacity:.38"></div><div class="a" style="left:2443px;top:272px;width:1px;height:2px;background:#179fff;opacity:.38"></div><div class="a" style="left:2441px;top:274px;width:2px;height:2px;background:#6a9955;opacity:.38"></div><div class="a" style="left:2444px;top:274px;width:3px;height:2px;background:#6a9955;opacity:.38"></div><div class="a" style="left:2448px;top:274px;width:3px;height:2px;background:#6a9955;opacity:.38"></div><div class="a" style="left:2452px;top:274px;width:4px;height:2px;background:#6a9955;opacity:.38"></div><div class="a" style="left:2457px;top:274px;width:8px;height:2px;background:#6a9955;opacity:.38"></div><div class="a" style="left:2466px;top:274px;width:3px;height:2px;background:#6a9955;opacity:.38"></div><div class="a" style="left:2470px;top:274px;width:7px;height:2px;background:#6a9955;opacity:.38"></div><div class="a" style="left:2478px;top:274px;width:3px;height:2px;background:#6a9955;opacity:.38"></div><div class="a" style="left:2482px;top:274px;width:4px;height:2px;background:#6a9955;opacity:.38"></div><div class="a" style="left:2487px;top:274px;width:4px;height:2px;background:#6a9955;opacity:.38"></div><div class="a" style="left:2441px;top:276px;width:5px;height:2px;background:#569cd6;opacity:.38"></div><div class="a" style="left:2447px;top:276px;width:7px;height:2px;background:#d4d4d4;opacity:.38"></div><div class="a" style="left:2455px;top:276px;width:1px;height:2px;background:#d4d4d4;opacity:.38"></div><div class="a" style="left:2457px;top:276px;width:10px;height:2px;background:#ce9178;opacity:.38"></div><div class="a" style="left:2467px;top:276px;width:2px;height:2px;background:#ffd700;opacity:.38"></div><div class="a" style="left:2469px;top:276px;width:6px;height:2px;background:#d4d4d4;opacity:.38"></div><div class="a" style="left:2475px;top:276px;width:1px;height:2px;background:#ffd700;opacity:.38"></div><div class="a" style="left:2476px;top:276px;width:3px;height:2px;background:#ce9178;opacity:.38"></div><div class="a" style="left:2479px;top:276px;width:1px;height:2px;background:#d4d4d4;opacity:.38"></div><div class="a" style="left:2441px;top:278px;width:12px;height:2px;background:#d4d4d4;opacity:.38"></div><div class="a" style="left:2453px;top:278px;width:1px;height:2px;background:#ffd700;opacity:.38"></div><div class="a" style="left:2454px;top:278px;width:9px;height:2px;background:#ce9178;opacity:.38"></div><div class="a" style="left:2464px;top:278px;width:5px;height:2px;background:#ce9178;opacity:.38"></div><div class="a" style="left:2470px;top:278px;width:3px;height:2px;background:#ce9178;opacity:.38"></div><div class="a" style="left:2474px;top:278px;width:4px;height:2px;background:#ce9178;opacity:.38"></div><div class="a" style="left:2479px;top:278px;width:9px;height:2px;background:#ce9178;opacity:.38"></div><div class="a" style="left:2489px;top:278px;width:2px;height:2px;background:#da70d6;opacity:.38"></div><div class="a" style="left:2491px;top:278px;width:7px;height:2px;background:#d4d4d4;opacity:.38"></div><div class="a" style="left:2498px;top:278px;width:1px;height:2px;background:#da70d6;opacity:.38"></div><div class="a" style="left:2499px;top:278px;width:1px;height:2px;background:#ce9178;opacity:.38"></div><div class="a" style="left:2500px;top:278px;width:1px;height:2px;background:#ffd700;opacity:.38"></div><div class="a" style="left:2501px;top:278px;width:1px;height:2px;background:#d4d4d4;opacity:.38"></div><div class="a" style="left:2441px;top:282px;width:5px;height:2px;background:#569cd6;opacity:.38"></div><div class="a" style="left:2447px;top:282px;width:4px;height:2px;background:#d4d4d4;opacity:.38"></div><div class="a" style="left:2452px;top:282px;width:1px;height:2px;background:#d4d4d4;opacity:.38"></div><div class="a" style="left:2454px;top:282px;width:5px;height:2px;background:#569cd6;opacity:.38"></div><div class="a" style="left:2460px;top:282px;width:10px;height:2px;background:#d4d4d4;opacity:.38"></div><div class="a" style="left:2470px;top:282px;width:1px;height:2px;background:#ffd700;opacity:.38"></div><div class="a" style="left:2471px;top:282px;width:7px;height:2px;background:#d4d4d4;opacity:.38"></div><div class="a" style="left:2478px;top:282px;width:1px;height:2px;background:#ffd700;opacity:.38"></div><div class="a" style="left:2479px;top:282px;width:1px;height:2px;background:#d4d4d4;opacity:.38"></div><div class="a" style="left:2441px;top:286px;width:2px;height:2px;background:#569cd6;opacity:.38"></div><div class="a" style="left:2444px;top:286px;width:1px;height:2px;background:#ffd700;opacity:.38"></div><div class="a" style="left:2445px;top:286px;width:12px;height:2px;background:#d4d4d4;opacity:.38"></div><div class="a" style="left:2457px;top:286px;width:1px;height:2px;background:#ffd700;opacity:.38"></div><div class="a" style="left:2459px;top:286px;width:1px;height:2px;background:#ffd700;opacity:.38"></div><div class="a" style="left:2443px;top:288px;width:12px;height:2px;background:#d4d4d4;opacity:.38"></div><div class="a" style="left:2455px;top:288px;width:1px;height:2px;background:#da70d6;opacity:.38"></div><div class="a" style="left:2456px;top:288px;width:3px;height:2px;background:#ce9178;opacity:.38"></div><div class="a" style="left:2460px;top:288px;width:3px;height:2px;background:#ce9178;opacity:.38"></div><div class="a" style="left:2464px;top:288px;width:4px;height:2px;background:#ce9178;opacity:.38"></div><div class="a" style="left:2469px;top:288px;width:5px;height:2px;background:#ce9178;opacity:.38"></div><div class="a" style="left:2475px;top:288px;width:3px;height:2px;background:#ce9178;opacity:.38"></div><div class="a" style="left:2479px;top:288px;width:4px;height:2px;background:#ce9178;opacity:.38"></div><div class="a" style="left:2484px;top:288px;width:2px;height:2px;background:#179fff;opacity:.38"></div><div class="a" style="left:2486px;top:288px;width:6px;height:2px;background:#d4d4d4;opacity:.38"></div><div class="a" style="left:2492px;top:288px;width:1px;height:2px;background:#179fff;opacity:.38"></div><div class="a" style="left:2494px;top:288px;width:2px;height:2px;background:#ce9178;opacity:.38"></div><div class="a" style="left:2497px;top:288px;width:7px;height:2px;background:#ce9178;opacity:.38"></div><div class="a" style="left:2504px;top:288px;width:1px;height:2px;background:#da70d6;opacity:.38"></div><div class="a" style="left:2505px;top:288px;width:1px;height:2px;background:#d4d4d4;opacity:.38"></div><div class="a" style="left:2443px;top:290px;width:6px;height:2px;background:#569cd6;opacity:.38"></div><div class="a" style="left:2449px;top:290px;width:1px;height:2px;background:#d4d4d4;opacity:.38"></div><div class="a" style="left:2441px;top:292px;width:1px;height:2px;background:#ffd700;opacity:.38"></div><div class="a" style="left:2441px;top:296px;width:2px;height:2px;background:#6a9955;opacity:.38"></div><div class="a" style="left:2444px;top:296px;width:3px;height:2px;background:#6a9955;opacity:.38"></div><div class="a" style="left:2448px;top:296px;width:3px;height:2px;background:#6a9955;opacity:.38"></div><div class="a" style="left:2452px;top:296px;width:6px;height:2px;background:#6a9955;opacity:.38"></div><div class="a" style="left:2459px;top:296px;width:3px;height:2px;background:#6a9955;opacity:.38"></div><div class="a" style="left:2463px;top:296px;width:5px;height:2px;background:#6a9955;opacity:.38"></div><div class="a" style="left:2469px;top:296px;width:4px;height:2px;background:#6a9955;opacity:.38"></div><div class="a" style="left:2441px;top:298px;width:5px;height:2px;background:#569cd6;opacity:.38"></div><div class="a" style="left:2447px;top:298px;width:6px;height:2px;background:#d4d4d4;opacity:.38"></div><div class="a" style="left:2454px;top:298px;width:1px;height:2px;background:#d4d4d4;opacity:.38"></div><div class="a" style="left:2456px;top:298px;width:5px;height:2px;background:#569cd6;opacity:.38"></div><div class="a" style="left:2462px;top:298px;width:10px;height:2px;background:#d4d4d4;opacity:.38"></div><div class="a" style="left:2472px;top:298px;width:1px;height:2px;background:#ffd700;opacity:.38"></div><div class="a" style="left:2473px;top:298px;width:4px;height:2px;background:#d4d4d4;opacity:.38"></div><div class="a" style="left:2477px;top:298px;width:1px;height:2px;background:#ffd700;opacity:.38"></div><div class="a" style="left:2478px;top:298px;width:1px;height:2px;background:#d4d4d4;opacity:.38"></div><div class="a" style="left:2441px;top:302px;width:2px;height:2px;background:#6a9955;opacity:.38"></div><div class="a" style="left:2444px;top:302px;width:4px;height:2px;background:#6a9955;opacity:.38"></div><div class="a" style="left:2449px;top:302px;width:3px;height:2px;background:#6a9955;opacity:.38"></div><div class="a" style="left:2453px;top:302px;width:6px;height:2px;background:#6a9955;opacity:.38"></div><div class="a" style="left:2460px;top:302px;width:3px;height:2px;background:#6a9955;opacity:.38"></div><div class="a" style="left:2464px;top:302px;width:8px;height:2px;background:#6a9955;opacity:.38"></div><div class="a" style="left:2473px;top:302px;width:7px;height:2px;background:#6a9955;opacity:.38"></div><div class="a" style="left:2441px;top:304px;width:3px;height:2px;background:#569cd6;opacity:.38"></div><div class="a" style="left:2445px;top:304px;width:1px;height:2px;background:#ffd700;opacity:.38"></div><div class="a" style="left:2446px;top:304px;width:3px;height:2px;background:#569cd6;opacity:.38"></div><div class="a" style="left:2450px;top:304px;width:1px;height:2px;background:#d4d4d4;opacity:.38"></div><div class="a" style="left:2452px;top:304px;width:1px;height:2px;background:#d4d4d4;opacity:.38"></div><div class="a" style="left:2454px;top:304px;width:1px;height:2px;background:#b5cea8;opacity:.38"></div><div class="a" style="left:2455px;top:304px;width:1px;height:2px;background:#d4d4d4;opacity:.38"></div><div class="a" style="left:2457px;top:304px;width:1px;height:2px;background:#d4d4d4;opacity:.38"></div><div class="a" style="left:2459px;top:304px;width:1px;height:2px;background:#d4d4d4;opacity:.38"></div><div class="a" style="left:2461px;top:304px;width:14px;height:2px;background:#d4d4d4;opacity:.38"></div><div class="a" style="left:2476px;top:304px;width:3px;height:2px;background:#d4d4d4;opacity:.38"></div><div class="a" style="left:2479px;top:304px;width:1px;height:2px;background:#ffd700;opacity:.38"></div><div class="a" style="left:2481px;top:304px;width:1px;height:2px;background:#ffd700;opacity:.38"></div><div class="a" style="left:2443px;top:306px;width:3px;height:2px;background:#569cd6;opacity:.38"></div><div class="a" style="left:2447px;top:306px;width:1px;height:2px;background:#da70d6;opacity:.38"></div><div class="a" style="left:2445px;top:308px;width:5px;height:2px;background:#569cd6;opacity:.38"></div><div class="a" style="left:2451px;top:308px;width:4px;height:2px;background:#d4d4d4;opacity:.38"></div><div class="a" style="left:2456px;top:308px;width:1px;height:2px;background:#d4d4d4;opacity:.38"></div><div class="a" style="left:2458px;top:308px;width:10px;height:2px;background:#d4d4d4;opacity:.38"></div><div class="a" style="left:2468px;top:308px;width:1px;height:2px;background:#179fff;opacity:.38"></div><div class="a" style="left:2469px;top:308px;width:6px;height:2px;background:#d4d4d4;opacity:.38"></div><div class="a" style="left:2475px;top:308px;width:1px;height:2px;background:#ffd700;opacity:.38"></div><div class="a" style="left:2476px;top:308px;width:1px;height:2px;background:#d4d4d4;opacity:.38"></div><div class="a" style="left:2477px;top:308px;width:1px;height:2px;background:#ffd700;opacity:.38"></div><div class="a" style="left:2478px;top:308px;width:1px;height:2px;background:#179fff;opacity:.38"></div><div class="a" style="left:2479px;top:308px;width:1px;height:2px;background:#d4d4d4;opacity:.38"></div><div class="a" style="left:2445px;top:310px;width:3px;height:2px;background:#569cd6;opacity:.38"></div><div class="a" style="left:2449px;top:310px;width:7px;height:2px;background:#d4d4d4;opacity:.38"></div><div class="a" style="left:2457px;top:310px;width:1px;height:2px;background:#d4d4d4;opacity:.38"></div><div class="a" style="left:2459px;top:310px;width:5px;height:2px;background:#569cd6;opacity:.38"></div><div class="a" style="left:2464px;top:310px;width:1px;height:2px;background:#d4d4d4;opacity:.38"></div><div class="a" style="left:2445px;top:314px;width:2px;height:2px;background:#6a9955;opacity:.38"></div><div class="a" style="left:2448px;top:314px;width:4px;height:2px;background:#6a9955;opacity:.38"></div><div class="a" style="left:2453px;top:314px;width:3px;height:2px;background:#6a9955;opacity:.38"></div><div class="a" style="left:2457px;top:314px;width:6px;height:2px;background:#6a9955;opacity:.38"></div><div class="a" style="left:2464px;top:314px;width:3px;height:2px;background:#6a9955;opacity:.38"></div><div class="a" style="left:2468px;top:314px;width:8px;height:2px;background:#6a9955;opacity:.38"></div><div class="a" style="left:2477px;top:314px;width:7px;height:2px;background:#6a9955;opacity:.38"></div><div class="a" style="left:2485px;top:314px;width:4px;height:2px;background:#6a9955;opacity:.38"></div><div class="a" style="left:2445px;top:316px;width:2px;height:2px;background:#569cd6;opacity:.38"></div><div class="a" style="left:2448px;top:316px;width:1px;height:2px;background:#179fff;opacity:.38"></div><div class="a" style="left:2449px;top:316px;width:9px;height:2px;background:#d4d4d4;opacity:.38"></div><div class="a" style="left:2459px;top:316px;width:2px;height:2px;background:#d4d4d4;opacity:.38"></div><div class="a" style="left:2462px;top:316px;width:13px;height:2px;background:#d4d4d4;opacity:.38"></div><div class="a" style="left:2475px;top:316px;width:1px;height:2px;background:#ffd700;opacity:.38"></div><div class="a" style="left:2476px;top:316px;width:9px;height:2px;background:#d4d4d4;opacity:.38"></div><div class="a" style="left:2485px;top:316px;width:1px;height:2px;background:#ffd700;opacity:.38"></div><div class="a" style="left:2486px;top:316px;width:1px;height:2px;background:#179fff;opacity:.38"></div><div class="a" style="left:2488px;top:316px;width:1px;height:2px;background:#179fff;opacity:.38"></div><div class="a" style="left:2447px;top:318px;width:3px;height:2px;background:#569cd6;opacity:.38"></div><div class="a" style="left:2451px;top:318px;width:1px;height:2px;background:#ffd700;opacity:.38"></div><div class="a" style="left:2452px;top:318px;width:5px;height:2px;background:#569cd6;opacity:.38"></div><div class="a" style="left:2458px;top:318px;width:5px;height:2px;background:#d4d4d4;opacity:.38"></div><div class="a" style="left:2464px;top:318px;width:2px;height:2px;background:#569cd6;opacity:.38"></div><div class="a" style="left:2467px;top:318px;width:9px;height:2px;background:#d4d4d4;opacity:.38"></div><div class="a" style="left:2476px;top:318px;width:1px;height:2px;background:#ffd700;opacity:.38"></div><div class="a" style="left:2478px;top:318px;width:1px;height:2px;background:#ffd700;opacity:.38"></div><div class="a" style="left:2449px;top:320px;width:2px;height:2px;background:#569cd6;opacity:.38"></div><div class="a" style="left:2452px;top:320px;width:1px;height:2px;background:#da70d6;opacity:.38"></div><div class="a" style="left:2453px;top:320px;width:6px;height:2px;background:#d4d4d4;opacity:.38"></div><div class="a" style="left:2459px;top:320px;width:1px;height:2px;background:#179fff;opacity:.38"></div><div class="a" style="left:2460px;top:320px;width:11px;height:2px;background:#d4d4d4;opacity:.38"></div><div class="a" style="left:2471px;top:320px;width:1px;height:2px;background:#179fff;opacity:.38"></div><div class="a" style="left:2473px;top:320px;width:3px;height:2px;background:#d4d4d4;opacity:.38"></div><div class="a" style="left:2477px;top:320px;width:6px;height:2px;background:#d4d4d4;opacity:.38"></div><div class="a" style="left:2483px;top:320px;width:1px;height:2px;background:#179fff;opacity:.38"></div><div class="a" style="left:2484px;top:320px;width:9px;height:2px;background:#d4d4d4;opacity:.38"></div><div class="a" style="left:2493px;top:320px;width:1px;height:2px;background:#179fff;opacity:.38"></div><div class="a" style="left:2494px;top:320px;width:1px;height:2px;background:#da70d6;opacity:.38"></div><div class="a" style="left:2496px;top:320px;width:1px;height:2px;background:#da70d6;opacity:.38"></div><div class="a" style="left:2451px;top:322px;width:17px;height:2px;background:#d4d4d4;opacity:.38"></div><div class="a" style="left:2469px;top:322px;width:1px;height:2px;background:#d4d4d4;opacity:.38"></div><div class="a" style="left:2471px;top:322px;width:4px;height:2px;background:#569cd6;opacity:.38"></div><div class="a" style="left:2475px;top:322px;width:1px;height:2px;background:#d4d4d4;opacity:.38"></div><div class="a" style="left:2451px;top:324px;width:7px;height:2px;background:#d4d4d4;opacity:.38"></div><div class="a" style="left:2459px;top:324px;width:1px;height:2px;background:#d4d4d4;opacity:.38"></div><div class="a" style="left:2461px;top:324px;width:4px;height:2px;background:#569cd6;opacity:.38"></div><div class="a" style="left:2465px;top:324px;width:1px;height:2px;background:#d4d4d4;opacity:.38"></div><div class="a" style="left:2449px;top:326px;width:1px;height:2px;background:#da70d6;opacity:.38"></div><div class="a" style="left:2447px;top:328px;width:1px;height:2px;background:#ffd700;opacity:.38"></div><div class="a" style="left:2445px;top:330px;width:1px;height:2px;background:#179fff;opacity:.38"></div><div class="a" style="left:2445px;top:334px;width:2px;height:2px;background:#6a9955;opacity:.38"></div><div class="a" style="left:2448px;top:334px;width:2px;height:2px;background:#6a9955;opacity:.38"></div><div class="a" style="left:2451px;top:334px;width:2px;height:2px;background:#6a9955;opacity:.38"></div><div class="a" style="left:2454px;top:334px;width:5px;height:2px;background:#6a9955;opacity:.38"></div><div class="a" style="left:2460px;top:334px;width:3px;height:2px;background:#6a9955;opacity:.38"></div><div class="a" style="left:2464px;top:334px;width:7px;height:2px;background:#6a9955;opacity:.38"></div><div class="a" style="left:2472px;top:334px;width:3px;height:2px;background:#6a9955;opacity:.38"></div><div class="a" style="left:2476px;top:334px;width:6px;height:2px;background:#6a9955;opacity:.38"></div><div class="a" style="left:2483px;top:334px;width:4px;height:2px;background:#6a9955;opacity:.38"></div><div class="a" style="left:2488px;top:334px;width:2px;height:2px;background:#6a9955;opacity:.38"></div><div class="a" style="left:2491px;top:334px;width:4px;height:2px;background:#6a9955;opacity:.38"></div><div class="a" style="left:2496px;top:334px;width:2px;height:2px;background:#6a9955;opacity:.38"></div><div class="a" style="left:2499px;top:334px;width:5px;height:2px;background:#6a9955;opacity:.38"></div><div class="a" style="left:2445px;top:336px;width:2px;height:2px;background:#569cd6;opacity:.38"></div><div class="a" style="left:2448px;top:336px;width:1px;height:2px;background:#179fff;opacity:.38"></div><div class="a" style="left:2449px;top:336px;width:7px;height:2px;background:#d4d4d4;opacity:.38"></div><div class="a" style="left:2456px;top:336px;width:1px;height:2px;background:#179fff;opacity:.38"></div><div class="a" style="left:2458px;top:336px;width:1px;height:2px;background:#179fff;opacity:.38"></div><div class="a" style="left:2447px;top:338px;width:5px;height:2px;background:#569cd6;opacity:.38"></div><div class="a" style="left:2453px;top:338px;width:11px;height:2px;background:#d4d4d4;opacity:.38"></div><div class="a" style="left:2464px;top:338px;width:1px;height:2px;background:#ffd700;opacity:.38"></div><div class="a" style="left:2465px;top:338px;width:4px;height:2px;background:#d4d4d4;opacity:.38"></div><div class="a" style="left:2469px;top:338px;width:1px;height:2px;background:#da70d6;opacity:.38"></div><div class="a" style="left:2470px;top:338px;width:1px;height:2px;background:#d4d4d4;opacity:.38"></div><div class="a" style="left:2471px;top:338px;width:1px;height:2px;background:#da70d6;opacity:.38"></div><div class="a" style="left:2472px;top:338px;width:1px;height:2px;background:#d4d4d4;opacity:.38"></div><div class="a" style="left:2474px;top:338px;width:6px;height:2px;background:#d4d4d4;opacity:.38"></div><div class="a" style="left:2480px;top:338px;width:1px;height:2px;background:#da70d6;opacity:.38"></div><div class="a" style="left:2481px;top:338px;width:3px;height:2px;background:#d4d4d4;opacity:.38"></div><div class="a" style="left:2484px;top:338px;width:1px;height:2px;background:#da70d6;opacity:.38"></div><div class="a" style="left:2485px;top:338px;width:1px;height:2px;background:#d4d4d4;opacity:.38"></div><div class="a" style="left:2487px;top:338px;width:14px;height:2px;background:#d4d4d4;opacity:.38"></div><div class="a" style="left:2501px;top:338px;width:1px;height:2px;background:#da70d6;opacity:.38"></div><div class="a" style="left:2502px;top:338px;width:4px;height:2px;background:#d4d4d4;opacity:.38"></div><div class="a" style="left:2506px;top:338px;width:1px;height:2px;background:#da70d6;opacity:.38"></div><div class="a" style="left:2507px;top:338px;width:1px;height:2px;background:#ffd700;opacity:.38"></div><div class="a" style="left:2508px;top:338px;width:1px;height:2px;background:#d4d4d4;opacity:.38"></div><div class="a" style="left:2447px;top:340px;width:12px;height:2px;background:#d4d4d4;opacity:.38"></div><div class="a" style="left:2459px;top:340px;width:1px;height:2px;background:#ffd700;opacity:.38"></div><div class="a" style="left:2460px;top:340px;width:8px;height:2px;background:#ce9178;opacity:.38"></div><div class="a" style="left:2469px;top:340px;width:3px;height:2px;background:#ce9178;opacity:.38"></div><div class="a" style="left:2473px;top:340px;width:4px;height:2px;background:#ce9178;opacity:.38"></div><div class="a" style="left:2478px;top:340px;width:4px;height:2px;background:#ce9178;opacity:.38"></div><div class="a" style="left:2483px;top:340px;width:12px;height:2px;background:#ce9178;opacity:.38"></div><div class="a" style="left:2496px;top:340px;width:3px;height:2px;background:#ce9178;opacity:.38"></div><div class="a" style="left:2500px;top:340px;width:7px;height:2px;background:#ce9178;opacity:.38"></div><div class="a" style="left:2508px;top:340px;width:2px;height:2px;background:#da70d6;opacity:.38"></div><div class="a" style="left:2510px;top:340px;width:9px;height:2px;background:#d4d4d4;opacity:.38"></div><div class="a" style="left:2519px;top:340px;width:1px;height:2px;background:#da70d6;opacity:.38"></div><div class="a" style="left:2521px;top:340px;width:2px;height:2px;background:#ce9178;opacity:.38"></div><div class="a" style="left:2524px;top:340px;width:3px;height:2px;background:#ce9178;opacity:.38"></div><div class="a" style="left:2528px;top:340px;width:2px;height:2px;background:#da70d6;opacity:.38"></div><div class="a" style="left:2530px;top:340px;width:4px;height:2px;background:#d4d4d4;opacity:.38"></div><div class="a" style="left:2534px;top:340px;width:1px;height:2px;background:#179fff;opacity:.38"></div><div class="a" style="left:2535px;top:340px;width:1px;height:2px;background:#d4d4d4;opacity:.38"></div><div class="a" style="left:2536px;top:340px;width:1px;height:2px;background:#179fff;opacity:.38"></div><div class="a" style="left:2537px;top:340px;width:1px;height:2px;background:#da70d6;opacity:.38"></div><div class="a" style="left:2538px;top:340px;width:1px;height:2px;background:#ce9178;opacity:.38"></div><div class="a" style="left:2539px;top:340px;width:1px;height:2px;background:#ffd700;opacity:.38"></div><div class="a" style="left:2540px;top:340px;width:1px;height:2px;background:#d4d4d4;opacity:.38"></div><div class="a" style="left:2445px;top:342px;width:1px;height:2px;background:#179fff;opacity:.38"></div><div class="a" style="left:2443px;top:344px;width:1px;height:2px;background:#da70d6;opacity:.38"></div><div class="a" style="left:2445px;top:344px;width:5px;height:2px;background:#569cd6;opacity:.38"></div><div class="a" style="left:2451px;top:344px;width:1px;height:2px;background:#da70d6;opacity:.38"></div><div class="a" style="left:2452px;top:344px;width:1px;height:2px;background:#d4d4d4;opacity:.38"></div><div class="a" style="left:2453px;top:344px;width:1px;height:2px;background:#da70d6;opacity:.38"></div><div class="a" style="left:2455px;top:344px;width:1px;height:2px;background:#da70d6;opacity:.38"></div><div class="a" style="left:2445px;top:346px;width:12px;height:2px;background:#d4d4d4;opacity:.38"></div><div class="a" style="left:2457px;top:346px;width:1px;height:2px;background:#179fff;opacity:.38"></div><div class="a" style="left:2458px;top:346px;width:7px;height:2px;background:#ce9178;opacity:.38"></div><div class="a" style="left:2466px;top:346px;width:2px;height:2px;background:#ce9178;opacity:.38"></div><div class="a" style="left:2469px;top:346px;width:5px;height:2px;background:#ce9178;opacity:.38"></div><div class="a" style="left:2475px;top:346px;width:2px;height:2px;background:#ce9178;opacity:.38"></div><div class="a" style="left:2478px;top:346px;width:6px;height:2px;background:#ce9178;opacity:.38"></div><div class="a" style="left:2485px;top:346px;width:3px;height:2px;background:#ce9178;opacity:.38"></div><div class="a" style="left:2489px;top:346px;width:4px;height:2px;background:#ce9178;opacity:.38"></div><div class="a" style="left:2494px;top:346px;width:4px;height:2px;background:#ce9178;opacity:.38"></div><div class="a" style="left:2499px;top:346px;width:5px;height:2px;background:#ce9178;opacity:.38"></div><div class="a" style="left:2505px;top:346px;width:2px;height:2px;background:#ffd700;opacity:.38"></div><div class="a" style="left:2507px;top:346px;width:1px;height:2px;background:#d4d4d4;opacity:.38"></div><div class="a" style="left:2508px;top:346px;width:1px;height:2px;background:#ffd700;opacity:.38"></div><div class="a" style="left:2509px;top:346px;width:1px;height:2px;background:#ce9178;opacity:.38"></div><div class="a" style="left:2510px;top:346px;width:1px;height:2px;background:#179fff;opacity:.38"></div><div class="a" style="left:2511px;top:346px;width:1px;height:2px;background:#d4d4d4;opacity:.38"></div><div class="a" style="left:2443px;top:348px;width:1px;height:2px;background:#da70d6;opacity:.38"></div><div class="a" style="left:2441px;top:350px;width:1px;height:2px;background:#ffd700;opacity:.38"></div><div class="a" style="left:2441px;top:354px;width:12px;height:2px;background:#d4d4d4;opacity:.38"></div><div class="a" style="left:2453px;top:354px;width:1px;height:2px;background:#ffd700;opacity:.38"></div><div class="a" style="left:2454px;top:354px;width:13px;height:2px;background:#ce9178;opacity:.38"></div><div class="a" style="left:2468px;top:354px;width:7px;height:2px;background:#ce9178;opacity:.38"></div><div class="a" style="left:2476px;top:354px;width:3px;height:2px;background:#ce9178;opacity:.38"></div><div class="a" style="left:2480px;top:354px;width:4px;height:2px;background:#ce9178;opacity:.38"></div><div class="a" style="left:2485px;top:354px;width:4px;height:2px;background:#ce9178;opacity:.38"></div><div class="a" style="left:2490px;top:354px;width:13px;height:2px;background:#ce9178;opacity:.38"></div><div class="a" style="left:2504px;top:354px;width:3px;height:2px;background:#ce9178;opacity:.38"></div><div class="a" style="left:2508px;top:354px;width:4px;height:2px;background:#ce9178;opacity:.38"></div><div class="a" style="left:2513px;top:354px;width:2px;height:2px;background:#da70d6;opacity:.38"></div><div class="a" style="left:2515px;top:354px;width:6px;height:2px;background:#d4d4d4;opacity:.38"></div><div class="a" style="left:2521px;top:354px;width:1px;height:2px;background:#da70d6;opacity:.38"></div><div class="a" style="left:2522px;top:354px;width:1px;height:2px;background:#ce9178;opacity:.38"></div><div class="a" style="left:2523px;top:354px;width:1px;height:2px;background:#ffd700;opacity:.38"></div><div class="a" style="left:2524px;top:354px;width:1px;height:2px;background:#d4d4d4;opacity:.38"></div><div class="a" style="left:2439px;top:356px;width:1px;height:2px;background:#179fff;opacity:.38"></div><div class="a" style="left:2441px;top:356px;width:5px;height:2px;background:#569cd6;opacity:.38"></div><div class="a" style="left:2447px;top:356px;width:1px;height:2px;background:#179fff;opacity:.38"></div><div class="a" style="left:2448px;top:356px;width:1px;height:2px;background:#d4d4d4;opacity:.38"></div><div class="a" style="left:2449px;top:356px;width:1px;height:2px;background:#179fff;opacity:.38"></div><div class="a" style="left:2451px;top:356px;width:1px;height:2px;background:#179fff;opacity:.38"></div><div class="a" style="left:2441px;top:358px;width:12px;height:2px;background:#d4d4d4;opacity:.38"></div><div class="a" style="left:2453px;top:358px;width:1px;height:2px;background:#ffd700;opacity:.38"></div><div class="a" style="left:2454px;top:358px;width:7px;height:2px;background:#ce9178;opacity:.38"></div><div class="a" style="left:2462px;top:358px;width:8px;height:2px;background:#ce9178;opacity:.38"></div><div class="a" style="left:2471px;top:358px;width:3px;height:2px;background:#ce9178;opacity:.38"></div><div class="a" style="left:2475px;top:358px;width:4px;height:2px;background:#ce9178;opacity:.38"></div><div class="a" style="left:2480px;top:358px;width:2px;height:2px;background:#ce9178;opacity:.38"></div><div class="a" style="left:2483px;top:358px;width:5px;height:2px;background:#ce9178;opacity:.38"></div><div class="a" style="left:2489px;top:358px;width:2px;height:2px;background:#da70d6;opacity:.38"></div><div class="a" style="left:2491px;top:358px;width:1px;height:2px;background:#d4d4d4;opacity:.38"></div><div class="a" style="left:2492px;top:358px;width:1px;height:2px;background:#da70d6;opacity:.38"></div><div class="a" style="left:2493px;top:358px;width:1px;height:2px;background:#ce9178;opacity:.38"></div><div class="a" style="left:2494px;top:358px;width:1px;height:2px;background:#ffd700;opacity:.38"></div><div class="a" style="left:2495px;top:358px;width:1px;height:2px;background:#d4d4d4;opacity:.38"></div><div class="a" style="left:2441px;top:360px;width:5px;height:2px;background:#569cd6;opacity:.38"></div><div class="a" style="left:2447px;top:360px;width:2px;height:2px;background:#d4d4d4;opacity:.38"></div><div class="a" style="left:2439px;top:362px;width:1px;height:2px;background:#179fff;opacity:.38"></div><div class="a" style="left:2437px;top:364px;width:1px;height:2px;background:#da70d6;opacity:.38"></div><div class="a" style="left:2438px;top:364px;width:1px;height:2px;background:#d4d4d4;opacity:.38"></div>
<div class="a" style="left:1291px;top:110px;width:1px;height:1169px;background:#3b3b3b"></div>
<div class="a" style="left:2542px;top:110px;width:1px;height:1169px;background:#3b3b3b"></div>
<div class="a" style="left:1292px;top:869px;width:16px;height:2px;background:#a0a0a0"></div>
<div class="a" style="left:1297px;top:869.5px;width:6px;height:5px;background:#b48ead"></div>
<div class="a" style="left:2543px;top:528px;width:14px;height:2px;background:#a0a0a0"></div>
<div class="a" style="left:2548px;top:529.5px;width:6px;height:5.5px;background:#b48ead"></div>
<div class="a" style="left:57px;top:1279px;width:2500px;height:135px;background:#1e1e1e"></div>
<div class="a" style="left:57px;top:1279px;width:2500px;height:1.2px;background:#474747"></div>
<div class="ui" style="left:80.60px;top:1290.71px;font-size:13.37px;line-height:19px;color:#969696;transform:scaleX(0.8653);transform-origin:0 0">PROBLEMS</div>
<div class="ui" style="left:174.30px;top:1290.71px;font-size:13.37px;line-height:19px;color:#969696;transform:scaleX(0.8804);transform-origin:0 0">OUTPUT</div>
<div class="ui" style="left:252.00px;top:1290.71px;font-size:13.37px;line-height:19px;color:#e7e7e7;transform:scaleX(0.8993);transform-origin:0 0">TERMINAL</div>
<div class="ui" style="left:342.20px;top:1290.71px;font-size:13.37px;line-height:19px;color:#969696;transform:scaleX(0.8666);transform-origin:0 0">DEBUG CONSOLE</div>
<div class="ui" style="left:472.70px;top:1290.71px;font-size:13.37px;line-height:19px;color:#969696;transform:scaleX(0.8423);transform-origin:0 0">PORTS</div>
<div class="a" style="left:250.3px;top:1312.6px;width:64.7px;height:1.4px;background:#e7e7e7"></div>
<div class="tm" style="left:81px;top:1326.5px">sent 504 bytes  received 35 bytes  63.41 bytes/sec</div>
<div class="tm" style="left:81px;top:1348.5px">total size is 754  speedup is 1.40</div>
<div class="tm" style="left:81px;top:1370.5px">admin@localhost:~/AngularProjects/TransGPS/trans-gps-notifications&gt; redis-cli</div>
<div class="tm" style="left:81px;top:1392.5px">127.0.0.1:6379&gt; save</div>
<div class="a" style="left:64.8px;top:1374.8px;width:10px;height:10px;border-radius:5px;border:1.7px solid #6e6e6e"></div>
<div class="a" style="left:281.2px;top:1392px;width:9.6px;height:21.5px;border:1.2px solid #cccccc"></div>
<div class="tm" style="left:291.5px;top:1392.5px;color:#777777">-</div>
<div class="a" style="left:2357px;top:1326px;width:1px;height:88px;background:#3a3a3a"></div>
<div class="a" style="left:2374px;top:1321px;width:1px;height:93px;background:#3a3a3a"></div>
<div class="a" style="left:2375px;top:1321px;width:182px;height:25.6px;background:#37373d"></div>
<div class="a" style="left:2358px;top:1326px;width:5px;height:10.8px;background:#1f86b4"></div>
<div class="a" style="left:2358px;top:1338.2px;width:5px;height:6.5px;background:#1f86b4"></div>
<div class="a" style="left:2358px;top:1359px;width:5px;height:13px;background:#1f86b4"></div>
<div class="a" style="left:2358px;top:1381px;width:5px;height:7px;background:#1f86b4"></div>
<div class="a" style="left:2358px;top:1399px;width:5px;height:15px;background:#1f86b4"></div>
<div class="a" style="left:2369px;top:1326px;width:5px;height:20px;background:#f14c4c"></div>
<div class="a" style="left:2369px;top:1360px;width:5px;height:12px;background:#f14c4c"></div>
<div class="a" style="left:2369px;top:1383px;width:5px;height:7px;background:#f14c4c"></div>
<div class="a" style="left:2369px;top:1400px;width:5px;height:10px;background:#f14c4c"></div>
<svg style="left:2388px;top:1326px" width="17" height="19" viewBox="0 0 17 19"><path d="M8.3 0.8 L16 5 V14 L8.3 18.2 L0.7 14 V5 Z" stroke="#bdbdbd" stroke-width="0.9" fill="none"/><path d="M8.3 9.5 L16 5.3 V14 L8.3 18.2 Z" fill="#cfcfcf"/></svg>
<div class="ui" style="left:2410.50px;top:1323.80px;font-size:15.26px;line-height:21px;color:#cccccc;transform:scaleX(1.0005);transform-origin:0 0">redis-cli</div>
<svg style="left:2388px;top:1352px" width="17" height="19" viewBox="0 0 17 19"><path d="M8.3 0.8 L16 5 V14 L8.3 18.2 L0.7 14 V5 Z" stroke="#bdbdbd" stroke-width="0.9" fill="none"/><path d="M8.3 9.5 L16 5.3 V14 L8.3 18.2 Z" fill="#cfcfcf"/></svg>
<div class="ui" style="left:2410.50px;top:1349.90px;font-size:15.26px;line-height:21px;color:#cccccc;transform:scaleX(0.9702);transform-origin:0 0">bash</div>
<svg style="left:2416px;top:1292px" width="18" height="18" viewBox="0 0 18 18"><path d="M9 1 V17 M1 9 H17" stroke="#cccccc" stroke-width="1.35"/></svg>
<svg style="left:2438.5px;top:1298.5px" width="10" height="6" viewBox="0 0 10 6"><path d="M0.6 0.6 L4.7 4.9 L8.8 0.6" stroke="#cccccc" stroke-width="1.1" fill="none"/></svg>
<div class="a" style="left:2462.3px;top:1300px;width:2.7px;height:2.7px;border-radius:1.35px;background:#cccccc"></div>
<div class="a" style="left:2468.8px;top:1300px;width:2.7px;height:2.7px;border-radius:1.35px;background:#cccccc"></div>
<div class="a" style="left:2474.9px;top:1300px;width:2.7px;height:2.7px;border-radius:1.35px;background:#cccccc"></div>
<svg style="left:2493.5px;top:1296.5px" width="14" height="8" viewBox="0 0 14 8"><path d="M0.7 7 L6.5 1.2 L12.3 7" stroke="#cccccc" stroke-width="1.3" fill="none"/></svg>
<svg style="left:2525.8px;top:1295.2px" width="11" height="11" viewBox="0 0 11 11"><path d="M0.6 0.6 L10.4 10.4 M10.4 0.6 L0.6 10.4" stroke="#cccccc" stroke-width="1.3"/></svg>
<div class="a" style="left:0;top:1414px;width:2557px;height:26px;background:#007acc"></div>
<div class="a" style="left:0;top:1414px;width:40px;height:26px;background:#16825d"></div>
<svg style="left:0px;top:1414px" width="40" height="26" viewBox="0 0 40 26"><path d="M14.1 8 L19.4 12.7 L14.1 18 M24 4.5 L18.8 9 L24 13.8" stroke="#ffffff" stroke-width="1.2" fill="none"/></svg>
<div class="ui" style="left:67.80px;top:1416.56px;font-size:14.53px;line-height:20px;color:#ffffff;transform:scaleX(1.0342);transform-origin:0 0">multiple-bot</div>
<svg style="left:47px;top:1417px" width="16" height="18" viewBox="0 0 16 18"><circle cx="3.8" cy="3.3" r="2.3" stroke="#fff" stroke-width="1.15" fill="none"/><circle cx="3.8" cy="14.3" r="2.3" stroke="#fff" stroke-width="1.15" fill="none"/><circle cx="12" cy="6.2" r="2.3" stroke="#fff" stroke-width="1.15" fill="none"/><path d="M3.8 5.6 V12 M12 8.5 C12 11 5 10.5 3.8 12" stroke="#fff" stroke-width="1.15" fill="none"/></svg>
<svg style="left:153px;top:1418px" width="17" height="15" viewBox="0 0 17 15"><path d="M2.3 8.3 A6 6 0 0 1 13.5 4.6 M14.5 6.8 A6 6 0 0 1 3.4 10.6" stroke="#fff" stroke-width="1.25" fill="none"/><path d="M11.5 4.8 H14 V2.3 M5.3 10.3 H2.6 V13" stroke="#fff" stroke-width="1.25" fill="none"/></svg>
<div class="ui" style="left:173.70px;top:1416.56px;font-size:14.53px;line-height:20px;color:#ffffff;transform:scaleX(0.9125);transform-origin:0 0">0↓ 2↑</div>
<svg style="left:224px;top:1418px" width="16" height="16" viewBox="0 0 16 16"><circle cx="7.4" cy="8" r="6.7" stroke="#fff" stroke-width="1.15" fill="none"/><path d="M4.7 5.3 L10.1 10.7 M10.1 5.3 L4.7 10.7" stroke="#fff" stroke-width="1.15"/></svg>
<div class="ui" style="left:244.10px;top:1416.56px;font-size:14.53px;line-height:20px;color:#ffffff;transform:scaleX(0.8043);transform-origin:0 0">0</div>
<svg style="left:256px;top:1418px" width="16" height="16" viewBox="0 0 16 16"><path d="M7.3 1.3 L14 14.5 H0.6 Z" stroke="#fff" stroke-width="1.15" fill="none" stroke-linejoin="round"/><path d="M7.3 5.8 V10.2 M7.3 11.6 V12.8" stroke="#fff" stroke-width="1.25"/></svg>
<div class="ui" style="left:275.80px;top:1416.56px;font-size:14.53px;line-height:20px;color:#ffffff;transform:scaleX(0.8043);transform-origin:0 0">0</div>
<svg style="left:301.5px;top:1419px" width="17" height="15" viewBox="0 0 17 15"><path d="M6.5 5.5 V0.8 L15.8 7 L9.5 11.3" stroke="#fff" stroke-width="1.15" fill="none" stroke-linejoin="round"/><ellipse cx="5" cy="10.3" rx="3" ry="3.4" stroke="#fff" stroke-width="1.1" fill="none"/><path d="M0.5 9 H9.5 M0.5 14 L2.5 13 M9.5 14 L7.5 13 M1 6.5 L2.8 7.8 M9 6.5 L7.2 7.8" stroke="#fff" stroke-width="1" fill="none"/></svg>
<div class="ui" style="left:323.50px;top:1416.56px;font-size:14.53px;line-height:20px;color:#ffffff;transform:scaleX(0.9915);transform-origin:0 0">Launch bot (trans-gps-notifications)</div>
<svg style="left:1789px;top:1417px" width="12" height="18" viewBox="0 0 12 18"><circle cx="6" cy="8.5" r="3.2" stroke="#fff" stroke-width="1.2" fill="none"/><path d="M6 1 V5.3 M6 11.7 V17" stroke="#fff" stroke-width="1.2"/></svg>
<div class="ui" style="left:1808.20px;top:1416.56px;font-size:14.53px;line-height:20px;color:#ffffff;transform:scaleX(0.9641);transform-origin:0 0">Admin (1 day ago)</div>
<div class="ui" style="left:1942.80px;top:1416.56px;font-size:14.53px;line-height:20px;color:#ffffff;transform:scaleX(0.9375);transform-origin:0 0">Ln 229, Col 48 (33 selected)</div>
<div class="ui" style="left:2133.70px;top:1416.56px;font-size:14.53px;line-height:20px;color:#ffffff;transform:scaleX(0.8989);transform-origin:0 0">Spaces: 2</div>
<div class="ui" style="left:2212.20px;top:1416.56px;font-size:14.53px;line-height:20px;color:#ffffff;transform:scaleX(0.8646);transform-origin:0 0">UTF-8</div>
<div class="ui" style="left:2267.80px;top:1416.56px;font-size:14.53px;line-height:20px;color:#ffffff;transform:scaleX(0.8077);transform-origin:0 0">LF</div>
<div class="ui" style="left:2300.00px;top:1414.15px;font-size:16.28px;line-height:23px;color:#ffffff;transform:scaleX(0.8766);transform-origin:0 0">{ }</div>
<div class="ui" style="left:2322.30px;top:1416.56px;font-size:14.53px;line-height:20px;color:#ffffff;transform:scaleX(0.9138);transform-origin:0 0">JavaScript</div>
<svg style="left:2401px;top:1418px" width="18" height="16" viewBox="0 0 18 16"><path d="M3.3 6.6 C1.6 8 1.3 10.5 2 12 C4.3 15 13.7 15 16 12 C16.7 10.5 16.4 8 14.7 6.6" stroke="#fff" stroke-width="1.7" fill="none"/><ellipse cx="6.4" cy="4.6" rx="2.7" ry="2.9" stroke="#fff" stroke-width="1.5" fill="none"/><ellipse cx="11.6" cy="4.6" rx="2.7" ry="2.9" stroke="#fff" stroke-width="1.5" fill="none"/><path d="M7.3 9.3 V11.6 M10.7 9.3 V11.6" stroke="#fff" stroke-width="1.5"/></svg>
<svg style="left:2439px;top:1417px" width="14" height="18" viewBox="0 0 14 18"><circle cx="7" cy="7" r="1.9" fill="#fff"/><path d="M3.5 10.6 A5 5 0 1 1 10.5 10.6 M1.3 12.6 A8 8 0 1 1 12.7 12.6" stroke="#fff" stroke-width="1.15" fill="none"/><path d="M7 8.5 V17" stroke="#fff" stroke-width="1.6"/></svg>
<div class="ui" style="left:2458.00px;top:1416.56px;font-size:14.53px;line-height:20px;color:#ffffff;transform:scaleX(0.9284);transform-origin:0 0">Go Live</div>
<svg style="left:2525px;top:1417px" width="19" height="18" viewBox="0 0 19 18"><path d="M1.5 13.8 H14.5 L12.5 11.3 V7.3 A4.5 4.5 0 0 0 3.5 7.3 V11.3 Z M6.3 16.2 H9.7" stroke="#fff" stroke-width="1.2" fill="none" stroke-linejoin="round"/><circle cx="15" cy="3.3" r="3" fill="#fff" stroke="#007acc" stroke-width="0.8"/></svg>
</body></html>
